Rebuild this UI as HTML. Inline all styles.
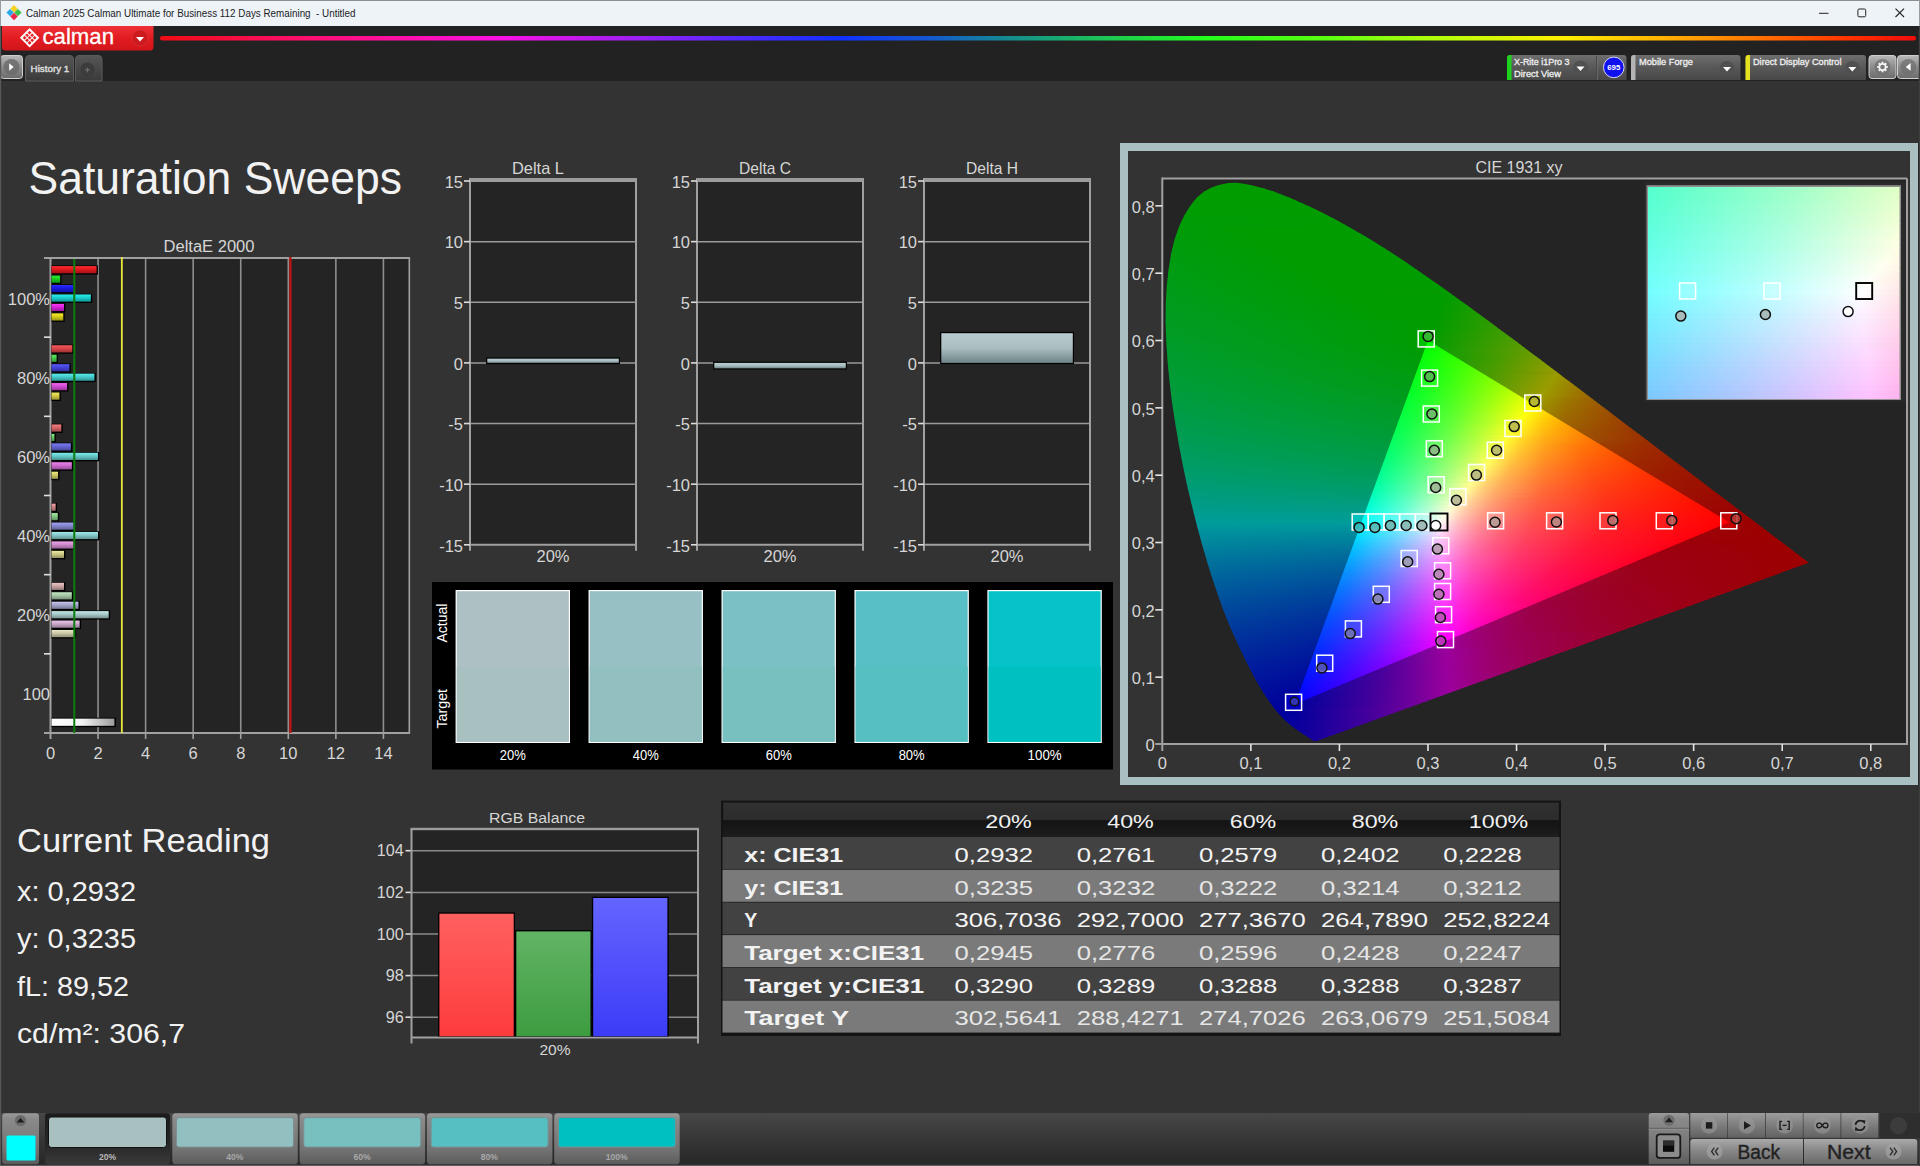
<!DOCTYPE html>
<html lang="en"><head><meta charset="utf-8"><title>Calman 2025 - Saturation Sweeps</title>
<style>html,body{margin:0;padding:0;background:#333;overflow:hidden}svg{display:block}text{font-family:"Liberation Sans",sans-serif}</style>
</head><body>
<svg width="1920" height="1166" viewBox="0 0 1920 1166">
<defs>
<linearGradient id="gred" x1="0" y1="0" x2="0" y2="1"><stop offset="0" stop-color="#ee3236"/><stop offset=".5" stop-color="#e21c21"/><stop offset="1" stop-color="#d2151a"/></linearGradient>
<linearGradient id="grb" gradientUnits="userSpaceOnUse" x1="160" x2="1916"><stop offset="0.000" stop-color="#f00c14"/><stop offset="0.099" stop-color="#ff1080"/><stop offset="0.194" stop-color="#fb10e4"/><stop offset="0.273" stop-color="#9a20f4"/><stop offset="0.325" stop-color="#5528ff"/><stop offset="0.387" stop-color="#1030ff"/><stop offset="0.438" stop-color="#1458d0"/><stop offset="0.482" stop-color="#148a92"/><stop offset="0.535" stop-color="#1cc458"/><stop offset="0.596" stop-color="#24ff1c"/><stop offset="0.666" stop-color="#5cff10"/><stop offset="0.714" stop-color="#a4ff0c"/><stop offset="0.799" stop-color="#fff000"/><stop offset="0.884" stop-color="#ff9200"/><stop offset="0.961" stop-color="#ff3400"/><stop offset="1.000" stop-color="#f00c0c"/></linearGradient>
<linearGradient id="gbtn" x1="0" y1="0" x2="0" y2="1"><stop offset="0" stop-color="#b9b9b9"/><stop offset=".5" stop-color="#8c8c8c"/><stop offset="1" stop-color="#6c6c6c"/></linearGradient>
<linearGradient id="gtab" x1="0" y1="0" x2="0" y2="1"><stop offset="0" stop-color="#565656"/><stop offset="1" stop-color="#3a3a3a"/></linearGradient>
<linearGradient id="gpan" x1="0" y1="0" x2="0" y2="1"><stop offset="0" stop-color="#6e6e6e"/><stop offset=".5" stop-color="#585858"/><stop offset="1" stop-color="#484848"/></linearGradient>
<linearGradient id="b100R" x1="0" y1="0" x2="0" y2="1"><stop offset="0" stop-color="#ff2d32"/><stop offset=".45" stop-color="#e1191e"/><stop offset="1" stop-color="#a21216"/></linearGradient>
<linearGradient id="b100G" x1="0" y1="0" x2="0" y2="1"><stop offset="0" stop-color="#2def32"/><stop offset=".45" stop-color="#19cd1e"/><stop offset="1" stop-color="#129416"/></linearGradient>
<linearGradient id="b100B" x1="0" y1="0" x2="0" y2="1"><stop offset="0" stop-color="#2d2dff"/><stop offset=".45" stop-color="#1919e1"/><stop offset="1" stop-color="#1212a2"/></linearGradient>
<linearGradient id="b100C" x1="0" y1="0" x2="0" y2="1"><stop offset="0" stop-color="#2defef"/><stop offset=".45" stop-color="#19cdcd"/><stop offset="1" stop-color="#129494"/></linearGradient>
<linearGradient id="b100M" x1="0" y1="0" x2="0" y2="1"><stop offset="0" stop-color="#fa38fa"/><stop offset=".45" stop-color="#d723d7"/><stop offset="1" stop-color="#9b199b"/></linearGradient>
<linearGradient id="b100Y" x1="0" y1="0" x2="0" y2="1"><stop offset="0" stop-color="#faef2d"/><stop offset=".45" stop-color="#d7cd19"/><stop offset="1" stop-color="#9b9412"/></linearGradient>
<linearGradient id="b80R" x1="0" y1="0" x2="0" y2="1"><stop offset="0" stop-color="#fc5b5f"/><stop offset=".45" stop-color="#d94448"/><stop offset="1" stop-color="#9c3133"/></linearGradient>
<linearGradient id="b80G" x1="0" y1="0" x2="0" y2="1"><stop offset="0" stop-color="#5bec5f"/><stop offset=".45" stop-color="#44ca48"/><stop offset="1" stop-color="#319133"/></linearGradient>
<linearGradient id="b80B" x1="0" y1="0" x2="0" y2="1"><stop offset="0" stop-color="#5b5bfc"/><stop offset=".45" stop-color="#4444d9"/><stop offset="1" stop-color="#31319c"/></linearGradient>
<linearGradient id="b80C" x1="0" y1="0" x2="0" y2="1"><stop offset="0" stop-color="#5becec"/><stop offset=".45" stop-color="#44caca"/><stop offset="1" stop-color="#319191"/></linearGradient>
<linearGradient id="b80M" x1="0" y1="0" x2="0" y2="1"><stop offset="0" stop-color="#f463f4"/><stop offset=".45" stop-color="#d14bd1"/><stop offset="1" stop-color="#973697"/></linearGradient>
<linearGradient id="b80Y" x1="0" y1="0" x2="0" y2="1"><stop offset="0" stop-color="#f4ec5b"/><stop offset=".45" stop-color="#d1ca44"/><stop offset="1" stop-color="#979131"/></linearGradient>
<linearGradient id="b60R" x1="0" y1="0" x2="0" y2="1"><stop offset="0" stop-color="#f77e81"/><stop offset=".45" stop-color="#d46467"/><stop offset="1" stop-color="#99484a"/></linearGradient>
<linearGradient id="b60G" x1="0" y1="0" x2="0" y2="1"><stop offset="0" stop-color="#7eeb81"/><stop offset=".45" stop-color="#64c967"/><stop offset="1" stop-color="#48914a"/></linearGradient>
<linearGradient id="b60B" x1="0" y1="0" x2="0" y2="1"><stop offset="0" stop-color="#7e7ef7"/><stop offset=".45" stop-color="#6464d4"/><stop offset="1" stop-color="#484899"/></linearGradient>
<linearGradient id="b60C" x1="0" y1="0" x2="0" y2="1"><stop offset="0" stop-color="#7eebeb"/><stop offset=".45" stop-color="#64c9c9"/><stop offset="1" stop-color="#489191"/></linearGradient>
<linearGradient id="b60M" x1="0" y1="0" x2="0" y2="1"><stop offset="0" stop-color="#f184f1"/><stop offset=".45" stop-color="#ce6ace"/><stop offset="1" stop-color="#954c95"/></linearGradient>
<linearGradient id="b60Y" x1="0" y1="0" x2="0" y2="1"><stop offset="0" stop-color="#f1eb7e"/><stop offset=".45" stop-color="#cec964"/><stop offset="1" stop-color="#959148"/></linearGradient>
<linearGradient id="b40R" x1="0" y1="0" x2="0" y2="1"><stop offset="0" stop-color="#f2a2a4"/><stop offset=".45" stop-color="#cf8587"/><stop offset="1" stop-color="#956061"/></linearGradient>
<linearGradient id="b40G" x1="0" y1="0" x2="0" y2="1"><stop offset="0" stop-color="#a2eaa4"/><stop offset=".45" stop-color="#85c887"/><stop offset="1" stop-color="#609061"/></linearGradient>
<linearGradient id="b40B" x1="0" y1="0" x2="0" y2="1"><stop offset="0" stop-color="#a2a2f2"/><stop offset=".45" stop-color="#8585cf"/><stop offset="1" stop-color="#606095"/></linearGradient>
<linearGradient id="b40C" x1="0" y1="0" x2="0" y2="1"><stop offset="0" stop-color="#a2eaea"/><stop offset=".45" stop-color="#85c8c8"/><stop offset="1" stop-color="#609090"/></linearGradient>
<linearGradient id="b40M" x1="0" y1="0" x2="0" y2="1"><stop offset="0" stop-color="#eea6ee"/><stop offset=".45" stop-color="#cc89cc"/><stop offset="1" stop-color="#936293"/></linearGradient>
<linearGradient id="b40Y" x1="0" y1="0" x2="0" y2="1"><stop offset="0" stop-color="#eeeaa2"/><stop offset=".45" stop-color="#ccc885"/><stop offset="1" stop-color="#939060"/></linearGradient>
<linearGradient id="b20R" x1="0" y1="0" x2="0" y2="1"><stop offset="0" stop-color="#edc5c6"/><stop offset=".45" stop-color="#cba5a6"/><stop offset="1" stop-color="#927778"/></linearGradient>
<linearGradient id="b20G" x1="0" y1="0" x2="0" y2="1"><stop offset="0" stop-color="#c5e9c6"/><stop offset=".45" stop-color="#a5c7a6"/><stop offset="1" stop-color="#778f78"/></linearGradient>
<linearGradient id="b20B" x1="0" y1="0" x2="0" y2="1"><stop offset="0" stop-color="#c5c5ed"/><stop offset=".45" stop-color="#a5a5cb"/><stop offset="1" stop-color="#777792"/></linearGradient>
<linearGradient id="b20C" x1="0" y1="0" x2="0" y2="1"><stop offset="0" stop-color="#c5e9e9"/><stop offset=".45" stop-color="#a5c7c7"/><stop offset="1" stop-color="#778f8f"/></linearGradient>
<linearGradient id="b20M" x1="0" y1="0" x2="0" y2="1"><stop offset="0" stop-color="#ebc7eb"/><stop offset=".45" stop-color="#c9a7c9"/><stop offset="1" stop-color="#917891"/></linearGradient>
<linearGradient id="b20Y" x1="0" y1="0" x2="0" y2="1"><stop offset="0" stop-color="#ebe9c5"/><stop offset=".45" stop-color="#c9c7a5"/><stop offset="1" stop-color="#918f77"/></linearGradient>
<linearGradient id="bw" x1="0" y1="0" x2="1" y2="0"><stop offset="0" stop-color="#ffffff"/><stop offset=".5" stop-color="#f2f2f2"/><stop offset="1" stop-color="#9c9c9c"/></linearGradient>
<linearGradient id="glch" x1="0" y1="0" x2="0" y2="1"><stop offset="0" stop-color="#b8cccf"/><stop offset=".5" stop-color="#aabec1"/><stop offset="1" stop-color="#6e8486"/></linearGradient>
<linearGradient id="o0" gradientUnits="userSpaceOnUse" x1="1216.0" x2="1253.5"><stop offset="0" stop-color="#009c00"/><stop offset="1" stop-color="#009c00"/></linearGradient>
<linearGradient id="o1" gradientUnits="userSpaceOnUse" x1="1207.7" x2="1265.6"><stop offset="0" stop-color="#009c00"/><stop offset="1" stop-color="#009c00"/></linearGradient>
<linearGradient id="o2" gradientUnits="userSpaceOnUse" x1="1202.2" x2="1275.5"><stop offset="0" stop-color="#009c00"/><stop offset="1" stop-color="#009c00"/></linearGradient>
<linearGradient id="o3" gradientUnits="userSpaceOnUse" x1="1198.2" x2="1283.5"><stop offset="0" stop-color="#009c00"/><stop offset="1" stop-color="#009c00"/></linearGradient>
<linearGradient id="o4" gradientUnits="userSpaceOnUse" x1="1194.7" x2="1290.9"><stop offset="0" stop-color="#009c00"/><stop offset="1" stop-color="#009c00"/></linearGradient>
<linearGradient id="o5" gradientUnits="userSpaceOnUse" x1="1191.9" x2="1297.9"><stop offset="0" stop-color="#009c00"/><stop offset="1" stop-color="#009c00"/></linearGradient>
<linearGradient id="o6" gradientUnits="userSpaceOnUse" x1="1189.5" x2="1304.8"><stop offset="0" stop-color="#009c01"/><stop offset="1" stop-color="#009c00"/></linearGradient>
<linearGradient id="o7" gradientUnits="userSpaceOnUse" x1="1187.1" x2="1311.5"><stop offset="0" stop-color="#009c02"/><stop offset="1" stop-color="#009c00"/></linearGradient>
<linearGradient id="o8" gradientUnits="userSpaceOnUse" x1="1185.3" x2="1317.8"><stop offset="0" stop-color="#009c03"/><stop offset="1" stop-color="#009c00"/></linearGradient>
<linearGradient id="o9" gradientUnits="userSpaceOnUse" x1="1183.4" x2="1323.9"><stop offset="0" stop-color="#009c03"/><stop offset="1" stop-color="#009c00"/></linearGradient>
<linearGradient id="o10" gradientUnits="userSpaceOnUse" x1="1181.6" x2="1329.8"><stop offset="0" stop-color="#009c04"/><stop offset="1" stop-color="#009c00"/></linearGradient>
<linearGradient id="o11" gradientUnits="userSpaceOnUse" x1="1180.1" x2="1335.7"><stop offset="0" stop-color="#009c05"/><stop offset="1" stop-color="#009c00"/></linearGradient>
<linearGradient id="o12" gradientUnits="userSpaceOnUse" x1="1178.7" x2="1341.3"><stop offset="0" stop-color="#009c06"/><stop offset="1" stop-color="#009c00"/></linearGradient>
<linearGradient id="o13" gradientUnits="userSpaceOnUse" x1="1177.3" x2="1346.8"><stop offset="0" stop-color="#009c07"/><stop offset="1" stop-color="#009c00"/></linearGradient>
<linearGradient id="o14" gradientUnits="userSpaceOnUse" x1="1175.9" x2="1352.1"><stop offset="0" stop-color="#009c08"/><stop offset="1" stop-color="#009c00"/></linearGradient>
<linearGradient id="o15" gradientUnits="userSpaceOnUse" x1="1174.9" x2="1357.3"><stop offset="0" stop-color="#009c08"/><stop offset=".374" stop-color="#009c00"/><stop offset="1" stop-color="#009c00"/></linearGradient>
<linearGradient id="o16" gradientUnits="userSpaceOnUse" x1="1173.8" x2="1362.5"><stop offset="0" stop-color="#009c09"/><stop offset=".394" stop-color="#009c00"/><stop offset="1" stop-color="#009c00"/></linearGradient>
<linearGradient id="o17" gradientUnits="userSpaceOnUse" x1="1172.8" x2="1367.6"><stop offset="0" stop-color="#009c0a"/><stop offset=".412" stop-color="#009c00"/><stop offset="1" stop-color="#009c00"/></linearGradient>
<linearGradient id="o18" gradientUnits="userSpaceOnUse" x1="1171.7" x2="1372.5"><stop offset="0" stop-color="#009c0b"/><stop offset=".430" stop-color="#009c00"/><stop offset="1" stop-color="#009c00"/></linearGradient>
<linearGradient id="o19" gradientUnits="userSpaceOnUse" x1="1171.0" x2="1377.5"><stop offset="0" stop-color="#009c0b"/><stop offset=".447" stop-color="#009c00"/><stop offset="1" stop-color="#009c00"/></linearGradient>
<linearGradient id="o20" gradientUnits="userSpaceOnUse" x1="1170.2" x2="1382.3"><stop offset="0" stop-color="#009c0c"/><stop offset=".462" stop-color="#009c00"/><stop offset="1" stop-color="#009c00"/></linearGradient>
<linearGradient id="o21" gradientUnits="userSpaceOnUse" x1="1169.5" x2="1387.0"><stop offset="0" stop-color="#009c0d"/><stop offset=".472" stop-color="#009c00"/><stop offset="1" stop-color="#009c00"/></linearGradient>
<linearGradient id="o22" gradientUnits="userSpaceOnUse" x1="1168.8" x2="1391.7"><stop offset="0" stop-color="#009c0e"/><stop offset=".486" stop-color="#009c00"/><stop offset="1" stop-color="#009c00"/></linearGradient>
<linearGradient id="o23" gradientUnits="userSpaceOnUse" x1="1168.1" x2="1396.3"><stop offset="0" stop-color="#009c0f"/><stop offset=".500" stop-color="#009c00"/><stop offset="1" stop-color="#009c00"/></linearGradient>
<linearGradient id="o24" gradientUnits="userSpaceOnUse" x1="1167.6" x2="1401.0"><stop offset="0" stop-color="#009c0f"/><stop offset=".509" stop-color="#009c00"/><stop offset="1" stop-color="#009c00"/></linearGradient>
<linearGradient id="o25" gradientUnits="userSpaceOnUse" x1="1167.1" x2="1405.5"><stop offset="0" stop-color="#009c10"/><stop offset=".521" stop-color="#009c00"/><stop offset="1" stop-color="#009c00"/></linearGradient>
<linearGradient id="o26" gradientUnits="userSpaceOnUse" x1="1166.6" x2="1410.0"><stop offset="0" stop-color="#009c11"/><stop offset=".537" stop-color="#009c00"/><stop offset="1" stop-color="#009c00"/></linearGradient>
<linearGradient id="o27" gradientUnits="userSpaceOnUse" x1="1166.1" x2="1414.4"><stop offset="0" stop-color="#009c12"/><stop offset=".548" stop-color="#009c00"/><stop offset="1" stop-color="#009c00"/></linearGradient>
<linearGradient id="o28" gradientUnits="userSpaceOnUse" x1="1165.6" x2="1418.8"><stop offset="0" stop-color="#009c13"/><stop offset=".556" stop-color="#009c00"/><stop offset="1" stop-color="#009c00"/></linearGradient>
<linearGradient id="o29" gradientUnits="userSpaceOnUse" x1="1165.3" x2="1423.2"><stop offset="0" stop-color="#009c13"/><stop offset=".570" stop-color="#009c00"/><stop offset="1" stop-color="#009c00"/></linearGradient>
<linearGradient id="o30" gradientUnits="userSpaceOnUse" x1="1164.9" x2="1427.5"><stop offset="0" stop-color="#009c14"/><stop offset=".580" stop-color="#009c00"/><stop offset="1" stop-color="#009c00"/></linearGradient>
<linearGradient id="o31" gradientUnits="userSpaceOnUse" x1="1164.6" x2="1431.9"><stop offset="0" stop-color="#009c15"/><stop offset=".586" stop-color="#009c00"/><stop offset="1" stop-color="#009c00"/></linearGradient>
<linearGradient id="o32" gradientUnits="userSpaceOnUse" x1="1164.3" x2="1436.1"><stop offset="0" stop-color="#009c16"/><stop offset=".600" stop-color="#009c00"/><stop offset="1" stop-color="#009c00"/></linearGradient>
<linearGradient id="o33" gradientUnits="userSpaceOnUse" x1="1164.0" x2="1440.4"><stop offset="0" stop-color="#009c17"/><stop offset=".609" stop-color="#009c00"/><stop offset="1" stop-color="#009c00"/></linearGradient>
<linearGradient id="o34" gradientUnits="userSpaceOnUse" x1="1163.7" x2="1444.7"><stop offset="0" stop-color="#009c18"/><stop offset=".614" stop-color="#009c00"/><stop offset="1" stop-color="#009c00"/></linearGradient>
<linearGradient id="o35" gradientUnits="userSpaceOnUse" x1="1163.5" x2="1448.9"><stop offset="0" stop-color="#009c18"/><stop offset=".627" stop-color="#009c00"/><stop offset="1" stop-color="#019c00"/></linearGradient>
<linearGradient id="o36" gradientUnits="userSpaceOnUse" x1="1163.4" x2="1453.1"><stop offset="0" stop-color="#009c19"/><stop offset=".632" stop-color="#009c00"/><stop offset="1" stop-color="#059c00"/></linearGradient>
<linearGradient id="o37" gradientUnits="userSpaceOnUse" x1="1163.2" x2="1457.3"><stop offset="0" stop-color="#009c1a"/><stop offset=".639" stop-color="#009c00"/><stop offset=".952" stop-color="#009c00"/><stop offset="1" stop-color="#099c00"/></linearGradient>
<linearGradient id="o38" gradientUnits="userSpaceOnUse" x1="1163.0" x2="1461.4"><stop offset="0" stop-color="#009c1b"/><stop offset=".651" stop-color="#009c00"/><stop offset=".940" stop-color="#009c00"/><stop offset="1" stop-color="#0d9c00"/></linearGradient>
<linearGradient id="o39" gradientUnits="userSpaceOnUse" x1="1162.8" x2="1465.6"><stop offset="0" stop-color="#009c1c"/><stop offset=".656" stop-color="#009c00"/><stop offset=".921" stop-color="#009c00"/><stop offset="1" stop-color="#119c00"/></linearGradient>
<linearGradient id="o40" gradientUnits="userSpaceOnUse" x1="1162.7" x2="1469.7"><stop offset="0" stop-color="#009c1d"/><stop offset=".667" stop-color="#009c00"/><stop offset=".908" stop-color="#009c00"/><stop offset="1" stop-color="#159c00"/></linearGradient>
<linearGradient id="o41" gradientUnits="userSpaceOnUse" x1="1162.7" x2="1473.9"><stop offset="0" stop-color="#009c1e"/><stop offset=".671" stop-color="#009c00"/><stop offset=".890" stop-color="#009c00"/><stop offset="1" stop-color="#199c00"/></linearGradient>
<linearGradient id="o42" gradientUnits="userSpaceOnUse" x1="1162.7" x2="1478.0"><stop offset="0" stop-color="#009c1f"/><stop offset=".675" stop-color="#009c00"/><stop offset=".873" stop-color="#009c00"/><stop offset="1" stop-color="#1d9c00"/></linearGradient>
<linearGradient id="o43" gradientUnits="userSpaceOnUse" x1="1162.7" x2="1482.1"><stop offset="0" stop-color="#009c20"/><stop offset=".686" stop-color="#009c00"/><stop offset=".862" stop-color="#009c00"/><stop offset="1" stop-color="#229c00"/></linearGradient>
<linearGradient id="o44" gradientUnits="userSpaceOnUse" x1="1162.6" x2="1486.2"><stop offset="0" stop-color="#009c21"/><stop offset=".689" stop-color="#009c00"/><stop offset=".845" stop-color="#009c00"/><stop offset="1" stop-color="#269c00"/></linearGradient>
<linearGradient id="o45" gradientUnits="userSpaceOnUse" x1="1162.6" x2="1490.3"><stop offset="0" stop-color="#009c22"/><stop offset=".699" stop-color="#009c00"/><stop offset=".834" stop-color="#009c00"/><stop offset="1" stop-color="#2b9c00"/></linearGradient>
<linearGradient id="o46" gradientUnits="userSpaceOnUse" x1="1162.6" x2="1494.3"><stop offset="0" stop-color="#009c22"/><stop offset=".818" stop-color="#009c00"/><stop offset="1" stop-color="#309c00"/></linearGradient>
<linearGradient id="o47" gradientUnits="userSpaceOnUse" x1="1162.6" x2="1498.4"><stop offset="0" stop-color="#009c23"/><stop offset=".808" stop-color="#009c00"/><stop offset="1" stop-color="#359c00"/></linearGradient>
<linearGradient id="o48" gradientUnits="userSpaceOnUse" x1="1162.7" x2="1502.4"><stop offset="0" stop-color="#009c24"/><stop offset=".793" stop-color="#009c00"/><stop offset="1" stop-color="#3a9c00"/></linearGradient>
<linearGradient id="o49" gradientUnits="userSpaceOnUse" x1="1162.8" x2="1506.5"><stop offset="0" stop-color="#009c25"/><stop offset=".784" stop-color="#009c00"/><stop offset="1" stop-color="#3f9c00"/></linearGradient>
<linearGradient id="o50" gradientUnits="userSpaceOnUse" x1="1162.9" x2="1510.5"><stop offset="0" stop-color="#009c26"/><stop offset=".769" stop-color="#009c00"/><stop offset="1" stop-color="#459c00"/></linearGradient>
<linearGradient id="o51" gradientUnits="userSpaceOnUse" x1="1163.0" x2="1514.5"><stop offset="0" stop-color="#009c27"/><stop offset=".754" stop-color="#009c00"/><stop offset="1" stop-color="#4a9c00"/></linearGradient>
<linearGradient id="o52" gradientUnits="userSpaceOnUse" x1="1163.1" x2="1518.5"><stop offset="0" stop-color="#009c28"/><stop offset=".746" stop-color="#009c00"/><stop offset="1" stop-color="#509c00"/></linearGradient>
<linearGradient id="o53" gradientUnits="userSpaceOnUse" x1="1163.2" x2="1522.5"><stop offset="0" stop-color="#009c2a"/><stop offset=".732" stop-color="#009c01"/><stop offset="1" stop-color="#569c00"/></linearGradient>
<linearGradient id="o54" gradientUnits="userSpaceOnUse" x1="1163.4" x2="1526.5"><stop offset="0" stop-color="#009c2b"/><stop offset=".724" stop-color="#009c02"/><stop offset="1" stop-color="#5c9c00"/></linearGradient>
<linearGradient id="o55" gradientUnits="userSpaceOnUse" x1="1163.6" x2="1530.6"><stop offset="0" stop-color="#009c2c"/><stop offset=".710" stop-color="#009c04"/><stop offset="1" stop-color="#639c00"/></linearGradient>
<linearGradient id="o56" gradientUnits="userSpaceOnUse" x1="1163.8" x2="1534.6"><stop offset="0" stop-color="#009c2d"/><stop offset=".703" stop-color="#009c05"/><stop offset="1" stop-color="#6a9c00"/></linearGradient>
<linearGradient id="o57" gradientUnits="userSpaceOnUse" x1="1164.0" x2="1538.6"><stop offset="0" stop-color="#009c2e"/><stop offset=".690" stop-color="#009c06"/><stop offset=".850" stop-color="#359c00"/><stop offset="1" stop-color="#719c00"/></linearGradient>
<linearGradient id="o58" gradientUnits="userSpaceOnUse" x1="1164.2" x2="1542.6"><stop offset="0" stop-color="#009c2f"/><stop offset=".683" stop-color="#019c07"/><stop offset=".847" stop-color="#399c00"/><stop offset="1" stop-color="#789c00"/></linearGradient>
<linearGradient id="o59" gradientUnits="userSpaceOnUse" x1="1164.4" x2="1546.6"><stop offset="0" stop-color="#009c30"/><stop offset=".670" stop-color="#009c09"/><stop offset=".843" stop-color="#3c9c00"/><stop offset="1" stop-color="#7f9c00"/></linearGradient>
<linearGradient id="o60" gradientUnits="userSpaceOnUse" x1="1164.7" x2="1550.6"><stop offset="0" stop-color="#009c31"/><stop offset=".661" stop-color="#009c0a"/><stop offset=".839" stop-color="#409c00"/><stop offset="1" stop-color="#879c00"/></linearGradient>
<linearGradient id="o61" gradientUnits="userSpaceOnUse" x1="1164.9" x2="1554.6"><stop offset="0" stop-color="#009c32"/><stop offset=".649" stop-color="#009c0c"/><stop offset=".830" stop-color="#429c00"/><stop offset="1" stop-color="#8f9c00"/></linearGradient>
<linearGradient id="o62" gradientUnits="userSpaceOnUse" x1="1165.2" x2="1558.6"><stop offset="0" stop-color="#009c34"/><stop offset=".643" stop-color="#019c0d"/><stop offset=".832" stop-color="#489c00"/><stop offset="1" stop-color="#989c00"/></linearGradient>
<linearGradient id="o63" gradientUnits="userSpaceOnUse" x1="1165.5" x2="1562.5"><stop offset="0" stop-color="#009c35"/><stop offset=".631" stop-color="#009c0f"/><stop offset=".793" stop-color="#3d9c00"/><stop offset="1" stop-color="#9c9700"/></linearGradient>
<linearGradient id="o64" gradientUnits="userSpaceOnUse" x1="1165.8" x2="1566.5"><stop offset="0" stop-color="#009c36"/><stop offset=".620" stop-color="#009c11"/><stop offset=".805" stop-color="#479c00"/><stop offset=".975" stop-color="#9b9c00"/><stop offset="1" stop-color="#9c8f00"/></linearGradient>
<linearGradient id="o65" gradientUnits="userSpaceOnUse" x1="1166.1" x2="1570.5"><stop offset="0" stop-color="#009c37"/><stop offset=".614" stop-color="#009c12"/><stop offset=".797" stop-color="#499c01"/><stop offset=".955" stop-color="#999c00"/><stop offset="1" stop-color="#9c8700"/></linearGradient>
<linearGradient id="o66" gradientUnits="userSpaceOnUse" x1="1166.4" x2="1574.5"><stop offset="0" stop-color="#009c38"/><stop offset=".603" stop-color="#009c14"/><stop offset=".779" stop-color="#479c03"/><stop offset=".941" stop-color="#9a9c00"/><stop offset="1" stop-color="#9c8000"/></linearGradient>
<linearGradient id="o67" gradientUnits="userSpaceOnUse" x1="1166.7" x2="1578.4"><stop offset="0" stop-color="#009c3a"/><stop offset=".595" stop-color="#009c15"/><stop offset=".771" stop-color="#489c05"/><stop offset=".927" stop-color="#9a9c00"/><stop offset="1" stop-color="#9c7900"/></linearGradient>
<linearGradient id="o68" gradientUnits="userSpaceOnUse" x1="1167.1" x2="1582.4"><stop offset="0" stop-color="#009c3b"/><stop offset=".585" stop-color="#009c17"/><stop offset=".754" stop-color="#469c07"/><stop offset=".913" stop-color="#9a9c00"/><stop offset="1" stop-color="#9c7300"/></linearGradient>
<linearGradient id="o69" gradientUnits="userSpaceOnUse" x1="1167.4" x2="1586.4"><stop offset="0" stop-color="#009c3c"/><stop offset=".579" stop-color="#009c19"/><stop offset=".746" stop-color="#489c08"/><stop offset=".900" stop-color="#9b9c00"/><stop offset="1" stop-color="#9c6d00"/></linearGradient>
<linearGradient id="o70" gradientUnits="userSpaceOnUse" x1="1167.8" x2="1590.3"><stop offset="0" stop-color="#009c3e"/><stop offset=".569" stop-color="#009c1a"/><stop offset=".735" stop-color="#489c0a"/><stop offset=".886" stop-color="#9c9c00"/><stop offset="1" stop-color="#9c6700"/></linearGradient>
<linearGradient id="o71" gradientUnits="userSpaceOnUse" x1="1168.2" x2="1594.3"><stop offset="0" stop-color="#009c3f"/><stop offset=".563" stop-color="#019c1c"/><stop offset=".723" stop-color="#479c0c"/><stop offset=".873" stop-color="#9c9b00"/><stop offset="1" stop-color="#9c6200"/></linearGradient>
<linearGradient id="o72" gradientUnits="userSpaceOnUse" x1="1168.5" x2="1598.2"><stop offset="0" stop-color="#009c40"/><stop offset=".551" stop-color="#009c1e"/><stop offset=".710" stop-color="#479c0f"/><stop offset=".860" stop-color="#9c9b00"/><stop offset=".925" stop-color="#9c7800"/><stop offset="1" stop-color="#9c5d00"/></linearGradient>
<linearGradient id="o73" gradientUnits="userSpaceOnUse" x1="1168.9" x2="1602.2"><stop offset="0" stop-color="#009c42"/><stop offset=".546" stop-color="#009c20"/><stop offset=".699" stop-color="#469c11"/><stop offset=".847" stop-color="#9c9a00"/><stop offset=".917" stop-color="#9c7500"/><stop offset="1" stop-color="#9c5800"/></linearGradient>
<linearGradient id="o74" gradientUnits="userSpaceOnUse" x1="1169.3" x2="1606.2"><stop offset="0" stop-color="#009c43"/><stop offset=".537" stop-color="#009c22"/><stop offset=".693" stop-color="#499c12"/><stop offset=".830" stop-color="#9a9c01"/><stop offset=".908" stop-color="#9c7300"/><stop offset="1" stop-color="#9c5400"/></linearGradient>
<linearGradient id="o75" gradientUnits="userSpaceOnUse" x1="1169.8" x2="1610.1"><stop offset="0" stop-color="#009c45"/><stop offset=".527" stop-color="#009c24"/><stop offset=".677" stop-color="#469c15"/><stop offset=".818" stop-color="#9b9c03"/><stop offset=".900" stop-color="#9c7000"/><stop offset="1" stop-color="#9c4f00"/></linearGradient>
<linearGradient id="o76" gradientUnits="userSpaceOnUse" x1="1170.2" x2="1614.1"><stop offset="0" stop-color="#009c46"/><stop offset=".520" stop-color="#009c26"/><stop offset=".670" stop-color="#489c17"/><stop offset=".805" stop-color="#9b9c06"/><stop offset=".891" stop-color="#9c6e00"/><stop offset="1" stop-color="#9c4b00"/></linearGradient>
<linearGradient id="o77" gradientUnits="userSpaceOnUse" x1="1170.7" x2="1618.0"><stop offset="0" stop-color="#009c48"/><stop offset=".516" stop-color="#009c27"/><stop offset=".664" stop-color="#4a9c19"/><stop offset=".794" stop-color="#9c9b08"/><stop offset=".883" stop-color="#9c6b00"/><stop offset="1" stop-color="#9c4700"/></linearGradient>
<linearGradient id="o78" gradientUnits="userSpaceOnUse" x1="1171.1" x2="1622.0"><stop offset="0" stop-color="#009c49"/><stop offset=".507" stop-color="#009c29"/><stop offset=".649" stop-color="#479c1b"/><stop offset=".782" stop-color="#9c9b0b"/><stop offset=".876" stop-color="#9c6900"/><stop offset="1" stop-color="#9c4400"/></linearGradient>
<linearGradient id="o79" gradientUnits="userSpaceOnUse" x1="1171.6" x2="1625.9"><stop offset="0" stop-color="#009c4b"/><stop offset=".498" stop-color="#009c2c"/><stop offset=".634" stop-color="#459c1e"/><stop offset=".771" stop-color="#9c9a0d"/><stop offset=".868" stop-color="#9c6600"/><stop offset="1" stop-color="#9c4000"/></linearGradient>
<linearGradient id="o80" gradientUnits="userSpaceOnUse" x1="1172.0" x2="1629.9"><stop offset="0" stop-color="#009c4c"/><stop offset=".491" stop-color="#009c2e"/><stop offset=".623" stop-color="#439c21"/><stop offset=".759" stop-color="#9c9a10"/><stop offset=".860" stop-color="#9c6400"/><stop offset="1" stop-color="#9c3d00"/></linearGradient>
<linearGradient id="o81" gradientUnits="userSpaceOnUse" x1="1172.5" x2="1633.8"><stop offset="0" stop-color="#009c4e"/><stop offset=".487" stop-color="#019c30"/><stop offset=".622" stop-color="#489c22"/><stop offset=".743" stop-color="#9b9c13"/><stop offset=".852" stop-color="#9c6201"/><stop offset="1" stop-color="#9c3900"/></linearGradient>
<linearGradient id="o82" gradientUnits="userSpaceOnUse" x1="1173.0" x2="1637.8"><stop offset="0" stop-color="#009c50"/><stop offset=".478" stop-color="#009c32"/><stop offset=".612" stop-color="#489c25"/><stop offset=".733" stop-color="#9c9c16"/><stop offset=".784" stop-color="#9c7a0b"/><stop offset=".845" stop-color="#9c5f02"/><stop offset="1" stop-color="#9c3600"/></linearGradient>
<linearGradient id="o83" gradientUnits="userSpaceOnUse" x1="1173.5" x2="1641.8"><stop offset="0" stop-color="#009c51"/><stop offset=".470" stop-color="#009c34"/><stop offset=".598" stop-color="#469c28"/><stop offset=".718" stop-color="#999c19"/><stop offset=".778" stop-color="#9c770c"/><stop offset=".838" stop-color="#9c5d04"/><stop offset="1" stop-color="#9c3300"/></linearGradient>
<linearGradient id="o84" gradientUnits="userSpaceOnUse" x1="1174.1" x2="1645.7"><stop offset="0" stop-color="#009c53"/><stop offset=".464" stop-color="#009c37"/><stop offset=".591" stop-color="#479c2a"/><stop offset=".706" stop-color="#999c1c"/><stop offset=".766" stop-color="#9c770f"/><stop offset=".830" stop-color="#9c5b05"/><stop offset="1" stop-color="#9c3000"/></linearGradient>
<linearGradient id="o85" gradientUnits="userSpaceOnUse" x1="1174.6" x2="1649.7"><stop offset="0" stop-color="#009c55"/><stop offset=".456" stop-color="#009c39"/><stop offset=".578" stop-color="#449c2d"/><stop offset=".696" stop-color="#9a9c1f"/><stop offset=".755" stop-color="#9c7611"/><stop offset=".819" stop-color="#9c5a07"/><stop offset="1" stop-color="#9c2e00"/></linearGradient>
<linearGradient id="o86" gradientUnits="userSpaceOnUse" x1="1175.1" x2="1653.7"><stop offset="0" stop-color="#009c57"/><stop offset=".452" stop-color="#009c3b"/><stop offset=".577" stop-color="#4a9c2f"/><stop offset=".686" stop-color="#9b9c22"/><stop offset=".745" stop-color="#9c7513"/><stop offset=".812" stop-color="#9c5708"/><stop offset="1" stop-color="#9c2b00"/></linearGradient>
<linearGradient id="o87" gradientUnits="userSpaceOnUse" x1="1175.6" x2="1657.6"><stop offset="0" stop-color="#009c59"/><stop offset=".444" stop-color="#009c3e"/><stop offset=".564" stop-color="#479c32"/><stop offset=".676" stop-color="#9b9c25"/><stop offset=".734" stop-color="#9c7415"/><stop offset=".805" stop-color="#9c5509"/><stop offset=".880" stop-color="#9c3f00"/><stop offset="1" stop-color="#9c2800"/></linearGradient>
<linearGradient id="o88" gradientUnits="userSpaceOnUse" x1="1176.1" x2="1661.6"><stop offset="0" stop-color="#009c5a"/><stop offset=".438" stop-color="#009c40"/><stop offset=".558" stop-color="#499c35"/><stop offset=".665" stop-color="#9b9c28"/><stop offset=".723" stop-color="#9c7417"/><stop offset=".798" stop-color="#9c530a"/><stop offset=".884" stop-color="#9c3b00"/><stop offset="1" stop-color="#9c2600"/></linearGradient>
<linearGradient id="o89" gradientUnits="userSpaceOnUse" x1="1176.7" x2="1665.6"><stop offset="0" stop-color="#009c5c"/><stop offset=".430" stop-color="#009c43"/><stop offset=".545" stop-color="#469c38"/><stop offset=".652" stop-color="#999c2c"/><stop offset=".717" stop-color="#9c7019"/><stop offset=".791" stop-color="#9c510b"/><stop offset=".885" stop-color="#9c3700"/><stop offset="1" stop-color="#9c2400"/></linearGradient>
<linearGradient id="o90" gradientUnits="userSpaceOnUse" x1="1177.3" x2="1669.6"><stop offset="0" stop-color="#009c5e"/><stop offset=".427" stop-color="#019c45"/><stop offset=".541" stop-color="#499c3b"/><stop offset=".642" stop-color="#9a9c2f"/><stop offset=".707" stop-color="#9c6f1b"/><stop offset=".780" stop-color="#9c500d"/><stop offset=".890" stop-color="#9c3300"/><stop offset="1" stop-color="#9c2100"/></linearGradient>
<linearGradient id="o91" gradientUnits="userSpaceOnUse" x1="1177.9" x2="1673.5"><stop offset="0" stop-color="#009c60"/><stop offset=".417" stop-color="#009c48"/><stop offset=".526" stop-color="#449c3e"/><stop offset=".632" stop-color="#999c32"/><stop offset=".696" stop-color="#9c6f1d"/><stop offset=".773" stop-color="#9c4e0e"/><stop offset=".891" stop-color="#9c3000"/><stop offset="1" stop-color="#9c1f00"/></linearGradient>
<linearGradient id="o92" gradientUnits="userSpaceOnUse" x1="1178.5" x2="1677.5"><stop offset="0" stop-color="#009c62"/><stop offset=".414" stop-color="#009c4b"/><stop offset=".526" stop-color="#4a9c41"/><stop offset=".622" stop-color="#9a9c36"/><stop offset=".687" stop-color="#9c6e20"/><stop offset=".767" stop-color="#9c4c0f"/><stop offset=".896" stop-color="#9c2c00"/><stop offset="1" stop-color="#9c1d00"/></linearGradient>
<linearGradient id="o93" gradientUnits="userSpaceOnUse" x1="1179.0" x2="1681.4"><stop offset="0" stop-color="#009c64"/><stop offset=".406" stop-color="#009c4e"/><stop offset=".514" stop-color="#479c44"/><stop offset=".614" stop-color="#9b9c39"/><stop offset=".677" stop-color="#9c6d22"/><stop offset=".757" stop-color="#9c4b11"/><stop offset=".896" stop-color="#9c2900"/><stop offset="1" stop-color="#9c1b00"/></linearGradient>
<linearGradient id="o94" gradientUnits="userSpaceOnUse" x1="1179.6" x2="1685.4"><stop offset="0" stop-color="#009c66"/><stop offset=".401" stop-color="#009c51"/><stop offset=".508" stop-color="#499c47"/><stop offset=".603" stop-color="#9b9c3d"/><stop offset=".667" stop-color="#9c6d25"/><stop offset=".750" stop-color="#9c4912"/><stop offset=".901" stop-color="#9c2600"/><stop offset="1" stop-color="#9c1900"/></linearGradient>
<linearGradient id="o95" gradientUnits="userSpaceOnUse" x1="1180.2" x2="1689.3"><stop offset="0" stop-color="#009c69"/><stop offset=".394" stop-color="#009c54"/><stop offset=".496" stop-color="#469c4b"/><stop offset=".591" stop-color="#989c41"/><stop offset=".661" stop-color="#9c6a26"/><stop offset=".744" stop-color="#9c4713"/><stop offset=".902" stop-color="#9c2400"/><stop offset="1" stop-color="#9c1700"/></linearGradient>
<linearGradient id="o96" gradientUnits="userSpaceOnUse" x1="1180.8" x2="1693.3"><stop offset="0" stop-color="#009c6b"/><stop offset=".387" stop-color="#009c57"/><stop offset=".488" stop-color="#469c4f"/><stop offset=".582" stop-color="#999c45"/><stop offset=".652" stop-color="#9c6828"/><stop offset=".734" stop-color="#9c4615"/><stop offset=".902" stop-color="#9c2100"/><stop offset="1" stop-color="#9c1500"/></linearGradient>
<linearGradient id="o97" gradientUnits="userSpaceOnUse" x1="1181.5" x2="1697.2"><stop offset="0" stop-color="#009c6d"/><stop offset=".381" stop-color="#009c5a"/><stop offset=".479" stop-color="#449c52"/><stop offset=".572" stop-color="#999c49"/><stop offset=".642" stop-color="#9c682b"/><stop offset=".728" stop-color="#9c4416"/><stop offset=".907" stop-color="#9c1e00"/><stop offset="1" stop-color="#9c1300"/></linearGradient>
<linearGradient id="o98" gradientUnits="userSpaceOnUse" x1="1182.1" x2="1701.2"><stop offset="0" stop-color="#009c6f"/><stop offset=".378" stop-color="#019c5d"/><stop offset=".475" stop-color="#489c56"/><stop offset=".564" stop-color="#9a9c4d"/><stop offset=".633" stop-color="#9c672d"/><stop offset=".718" stop-color="#9c4318"/><stop offset=".892" stop-color="#9c1e02"/><stop offset="1" stop-color="#9c1200"/></linearGradient>
<linearGradient id="o99" gradientUnits="userSpaceOnUse" x1="1182.8" x2="1705.1"><stop offset="0" stop-color="#009c72"/><stop offset=".372" stop-color="#009c60"/><stop offset=".467" stop-color="#489c59"/><stop offset=".556" stop-color="#9b9c51"/><stop offset=".621" stop-color="#9c6831"/><stop offset=".713" stop-color="#9c4119"/><stop offset=".885" stop-color="#9c1d02"/><stop offset="1" stop-color="#9c1000"/></linearGradient>
<linearGradient id="o100" gradientUnits="userSpaceOnUse" x1="1183.4" x2="1709.1"><stop offset="0" stop-color="#009c74"/><stop offset=".366" stop-color="#009c64"/><stop offset=".462" stop-color="#499c5d"/><stop offset=".546" stop-color="#9b9c55"/><stop offset=".615" stop-color="#9c6532"/><stop offset=".706" stop-color="#9c3f1a"/><stop offset=".878" stop-color="#9c1c03"/><stop offset="1" stop-color="#9c0e00"/></linearGradient>
<linearGradient id="o101" gradientUnits="userSpaceOnUse" x1="1184.1" x2="1713.0"><stop offset="0" stop-color="#009c77"/><stop offset=".360" stop-color="#009c67"/><stop offset=".451" stop-color="#469c61"/><stop offset=".534" stop-color="#989c5a"/><stop offset=".606" stop-color="#9c6435"/><stop offset=".697" stop-color="#9c3e1b"/><stop offset=".826" stop-color="#9c2108"/><stop offset="1" stop-color="#9c0d00"/></linearGradient>
<linearGradient id="o102" gradientUnits="userSpaceOnUse" x1="1184.7" x2="1717.0"><stop offset="0" stop-color="#009c79"/><stop offset=".353" stop-color="#009c6b"/><stop offset=".444" stop-color="#469c65"/><stop offset=".526" stop-color="#999c5e"/><stop offset=".598" stop-color="#9c6337"/><stop offset=".692" stop-color="#9c3c1c"/><stop offset=".861" stop-color="#9c1a05"/><stop offset="1" stop-color="#9c0b00"/></linearGradient>
<linearGradient id="o103" gradientUnits="userSpaceOnUse" x1="1185.4" x2="1721.0"><stop offset="0" stop-color="#009c7c"/><stop offset=".348" stop-color="#009c6f"/><stop offset=".434" stop-color="#459c69"/><stop offset=".517" stop-color="#999c63"/><stop offset=".588" stop-color="#9c633a"/><stop offset=".682" stop-color="#9c3b1e"/><stop offset=".813" stop-color="#9c1e0a"/><stop offset="1" stop-color="#9c0a00"/></linearGradient>
<linearGradient id="o104" gradientUnits="userSpaceOnUse" x1="1186.1" x2="1724.9"><stop offset="0" stop-color="#009c7f"/><stop offset=".342" stop-color="#009c73"/><stop offset=".424" stop-color="#429c6e"/><stop offset=".513" stop-color="#9c9865"/><stop offset=".580" stop-color="#9c613d"/><stop offset=".677" stop-color="#9c391f"/><stop offset=".844" stop-color="#9c1807"/><stop offset="1" stop-color="#9c0800"/></linearGradient>
<linearGradient id="o105" gradientUnits="userSpaceOnUse" x1="1186.9" x2="1728.9"><stop offset="0" stop-color="#009c81"/><stop offset=".339" stop-color="#019c76"/><stop offset=".424" stop-color="#499c72"/><stop offset=".502" stop-color="#9c9b6c"/><stop offset=".535" stop-color="#9c7a53"/><stop offset=".572" stop-color="#9c603f"/><stop offset=".668" stop-color="#9c3821"/><stop offset=".838" stop-color="#9c1708"/><stop offset="1" stop-color="#9c0700"/></linearGradient>
<linearGradient id="o106" gradientUnits="userSpaceOnUse" x1="1187.6" x2="1732.9"><stop offset="0" stop-color="#009c84"/><stop offset=".331" stop-color="#009c7b"/><stop offset=".412" stop-color="#439c77"/><stop offset=".493" stop-color="#9b9c72"/><stop offset=".526" stop-color="#9c7a57"/><stop offset=".562" stop-color="#9c6043"/><stop offset=".658" stop-color="#9c3723"/><stop offset=".827" stop-color="#9c1609"/><stop offset="1" stop-color="#9c0500"/></linearGradient>
<linearGradient id="o107" gradientUnits="userSpaceOnUse" x1="1188.3" x2="1736.8"><stop offset="0" stop-color="#009c87"/><stop offset=".328" stop-color="#019c7f"/><stop offset=".409" stop-color="#479c7b"/><stop offset=".485" stop-color="#9c9a76"/><stop offset=".518" stop-color="#9c785b"/><stop offset=".555" stop-color="#9c5e45"/><stop offset=".653" stop-color="#9c3524"/><stop offset=".821" stop-color="#9c1509"/><stop offset="1" stop-color="#9c0400"/></linearGradient>
<linearGradient id="o108" gradientUnits="userSpaceOnUse" x1="1189.0" x2="1740.8"><stop offset="0" stop-color="#009c8a"/><stop offset=".324" stop-color="#019c83"/><stop offset=".404" stop-color="#499c80"/><stop offset=".476" stop-color="#9c9b7c"/><stop offset=".509" stop-color="#9c785f"/><stop offset=".545" stop-color="#9c5e49"/><stop offset=".644" stop-color="#9c3426"/><stop offset=".815" stop-color="#9c140a"/><stop offset="1" stop-color="#9c0300"/></linearGradient>
<linearGradient id="o109" gradientUnits="userSpaceOnUse" x1="1189.7" x2="1744.8"><stop offset="0" stop-color="#009c8d"/><stop offset=".318" stop-color="#009c87"/><stop offset=".394" stop-color="#469c85"/><stop offset=".469" stop-color="#9c9980"/><stop offset=".502" stop-color="#9c7762"/><stop offset=".538" stop-color="#9c5c4b"/><stop offset=".639" stop-color="#9c3227"/><stop offset=".809" stop-color="#9c120b"/><stop offset="1" stop-color="#9c0100"/></linearGradient>
<linearGradient id="o110" gradientUnits="userSpaceOnUse" x1="1190.5" x2="1748.8"><stop offset="0" stop-color="#009c90"/><stop offset=".312" stop-color="#009c8c"/><stop offset=".391" stop-color="#4a9c8a"/><stop offset=".459" stop-color="#9b9c88"/><stop offset=".491" stop-color="#9c7868"/><stop offset=".530" stop-color="#9c5b4e"/><stop offset=".631" stop-color="#9c3128"/><stop offset=".803" stop-color="#9c110c"/><stop offset="1" stop-color="#9c0000"/></linearGradient>
<linearGradient id="o111" gradientUnits="userSpaceOnUse" x1="1191.3" x2="1752.8"><stop offset="0" stop-color="#009c94"/><stop offset=".307" stop-color="#009c91"/><stop offset=".379" stop-color="#449c8f"/><stop offset=".454" stop-color="#9c988a"/><stop offset=".486" stop-color="#9c756a"/><stop offset=".525" stop-color="#9c584f"/><stop offset=".629" stop-color="#9c2e28"/><stop offset=".800" stop-color="#9c100c"/><stop offset="1" stop-color="#9c0000"/></linearGradient>
<linearGradient id="o112" gradientUnits="userSpaceOnUse" x1="1192.0" x2="1756.8"><stop offset="0" stop-color="#009c97"/><stop offset=".301" stop-color="#009c95"/><stop offset=".372" stop-color="#459c95"/><stop offset=".443" stop-color="#9c9b93"/><stop offset=".475" stop-color="#9c7670"/><stop offset=".514" stop-color="#9c5954"/><stop offset=".617" stop-color="#9c2e2b"/><stop offset=".791" stop-color="#9c0f0d"/><stop offset="1" stop-color="#9c0000"/></linearGradient>
<linearGradient id="o113" gradientUnits="userSpaceOnUse" x1="1192.8" x2="1760.7"><stop offset="0" stop-color="#009c9a"/><stop offset=".297" stop-color="#009c9a"/><stop offset=".371" stop-color="#4a9c9a"/><stop offset=".435" stop-color="#9c9c9a"/><stop offset=".466" stop-color="#9c7676"/><stop offset=".505" stop-color="#9c5858"/><stop offset=".611" stop-color="#9c2c2c"/><stop offset=".784" stop-color="#9c0e0e"/><stop offset="1" stop-color="#9c0000"/></linearGradient>
<linearGradient id="o114" gradientUnits="userSpaceOnUse" x1="1193.6" x2="1764.6"><stop offset="0" stop-color="#00999c"/><stop offset=".291" stop-color="#00989c"/><stop offset=".361" stop-color="#45979c"/><stop offset=".432" stop-color="#9c959a"/><stop offset=".463" stop-color="#9c7176"/><stop offset=".502" stop-color="#9c5558"/><stop offset=".611" stop-color="#9c292c"/><stop offset=".793" stop-color="#9c0b0d"/><stop offset="1" stop-color="#9c0000"/></linearGradient>
<linearGradient id="o115" gradientUnits="userSpaceOnUse" x1="1194.4" x2="1768.6"><stop offset="0" stop-color="#00969c"/><stop offset=".286" stop-color="#00939c"/><stop offset=".355" stop-color="#43919c"/><stop offset=".429" stop-color="#9c8e99"/><stop offset=".460" stop-color="#9c6d76"/><stop offset=".498" stop-color="#9c5159"/><stop offset=".606" stop-color="#9c272d"/><stop offset=".798" stop-color="#9c090c"/><stop offset="1" stop-color="#9c0000"/></linearGradient>
<linearGradient id="o116" gradientUnits="userSpaceOnUse" x1="1195.2" x2="1772.5"><stop offset="0" stop-color="#00929c"/><stop offset=".281" stop-color="#008e9c"/><stop offset=".354" stop-color="#468c9c"/><stop offset=".424" stop-color="#9c8a9c"/><stop offset=".455" stop-color="#9c6978"/><stop offset=".497" stop-color="#9c4d58"/><stop offset=".604" stop-color="#9c252d"/><stop offset=".806" stop-color="#9c070c"/><stop offset="1" stop-color="#9c0000"/></linearGradient>
<linearGradient id="o117" gradientUnits="userSpaceOnUse" x1="1196.0" x2="1776.5"><stop offset="0" stop-color="#008f9c"/><stop offset=".276" stop-color="#00899c"/><stop offset=".348" stop-color="#44879c"/><stop offset=".421" stop-color="#9c839b"/><stop offset=".452" stop-color="#9c6578"/><stop offset=".493" stop-color="#9c4959"/><stop offset=".603" stop-color="#9c222d"/><stop offset=".814" stop-color="#9c040b"/><stop offset="1" stop-color="#9c0000"/></linearGradient>
<linearGradient id="o118" gradientUnits="userSpaceOnUse" x1="1196.8" x2="1780.5"><stop offset="0" stop-color="#008c9c"/><stop offset=".271" stop-color="#00859c"/><stop offset=".340" stop-color="#40829c"/><stop offset=".419" stop-color="#9c7c98"/><stop offset=".450" stop-color="#9c5f77"/><stop offset=".491" stop-color="#9c4558"/><stop offset=".601" stop-color="#9c202d"/><stop offset=".825" stop-color="#9c020a"/><stop offset="1" stop-color="#9c0000"/></linearGradient>
<linearGradient id="o119" gradientUnits="userSpaceOnUse" x1="1197.6" x2="1784.4"><stop offset="0" stop-color="#00889c"/><stop offset=".266" stop-color="#00819c"/><stop offset=".334" stop-color="#3e7d9c"/><stop offset=".416" stop-color="#9c7698"/><stop offset=".451" stop-color="#9c5874"/><stop offset=".491" stop-color="#9c4057"/><stop offset=".601" stop-color="#9c1d2d"/><stop offset=".829" stop-color="#9c0009"/><stop offset="1" stop-color="#9c0000"/></linearGradient>
<linearGradient id="o120" gradientUnits="userSpaceOnUse" x1="1198.4" x2="1788.4"><stop offset="0" stop-color="#00859c"/><stop offset=".262" stop-color="#007c9c"/><stop offset=".337" stop-color="#44789c"/><stop offset=".412" stop-color="#9c729a"/><stop offset=".446" stop-color="#9c5575"/><stop offset=".486" stop-color="#9c3e58"/><stop offset=".595" stop-color="#9c1c2e"/><stop offset=".813" stop-color="#9c000b"/><stop offset="1" stop-color="#9c0000"/></linearGradient>
<linearGradient id="o121" gradientUnits="userSpaceOnUse" x1="1199.3" x2="1792.4"><stop offset="0" stop-color="#00829c"/><stop offset=".260" stop-color="#01789c"/><stop offset=".334" stop-color="#46749c"/><stop offset=".409" stop-color="#9c6d99"/><stop offset=".443" stop-color="#9c5175"/><stop offset=".483" stop-color="#9c3b59"/><stop offset=".595" stop-color="#9c192d"/><stop offset=".794" stop-color="#9c000d"/><stop offset="1" stop-color="#9c0000"/></linearGradient>
<linearGradient id="o122" gradientUnits="userSpaceOnUse" x1="1200.1" x2="1796.3"><stop offset="0" stop-color="#007f9c"/><stop offset=".255" stop-color="#01749c"/><stop offset=".329" stop-color="#446f9c"/><stop offset=".406" stop-color="#9c6799"/><stop offset=".440" stop-color="#9c4d76"/><stop offset=".480" stop-color="#9c3859"/><stop offset=".594" stop-color="#9c172d"/><stop offset=".779" stop-color="#9c000f"/><stop offset="1" stop-color="#9c0000"/></linearGradient>
<linearGradient id="o123" gradientUnits="userSpaceOnUse" x1="1201.0" x2="1800.2"><stop offset="0" stop-color="#007c9c"/><stop offset=".251" stop-color="#01709c"/><stop offset=".328" stop-color="#476b9c"/><stop offset=".401" stop-color="#9c649b"/><stop offset=".435" stop-color="#9c4a77"/><stop offset=".475" stop-color="#9c355b"/><stop offset=".589" stop-color="#9c152e"/><stop offset=".759" stop-color="#9c0011"/><stop offset="1" stop-color="#9c0000"/></linearGradient>
<linearGradient id="o124" gradientUnits="userSpaceOnUse" x1="1201.9" x2="1804.2"><stop offset="0" stop-color="#00799c"/><stop offset=".246" stop-color="#016c9c"/><stop offset=".322" stop-color="#46679c"/><stop offset=".399" stop-color="#9c5e9a"/><stop offset=".432" stop-color="#9c4677"/><stop offset=".475" stop-color="#9c3159"/><stop offset=".588" stop-color="#9c132e"/><stop offset=".744" stop-color="#9c0013"/><stop offset="1" stop-color="#9c0000"/></linearGradient>
<linearGradient id="o125" gradientUnits="userSpaceOnUse" x1="1202.8" x2="1808.2"><stop offset="0" stop-color="#00769c"/><stop offset=".242" stop-color="#01699c"/><stop offset=".321" stop-color="#48629c"/><stop offset=".394" stop-color="#9b5b9c"/><stop offset=".427" stop-color="#9c4379"/><stop offset=".470" stop-color="#9c2f5a"/><stop offset=".583" stop-color="#9c122f"/><stop offset=".728" stop-color="#9c0014"/><stop offset="1" stop-color="#9c0000"/></linearGradient>
<linearGradient id="o126" gradientUnits="userSpaceOnUse" x1="1203.6" x2="1811.8"><stop offset="0" stop-color="#00739c"/><stop offset=".237" stop-color="#01659c"/><stop offset=".319" stop-color="#4a5e9c"/><stop offset=".391" stop-color="#9c569b"/><stop offset=".424" stop-color="#9c4079"/><stop offset=".467" stop-color="#9c2c5b"/><stop offset=".582" stop-color="#9c102f"/><stop offset=".711" stop-color="#9c0017"/><stop offset="1" stop-color="#9c0000"/></linearGradient>
<linearGradient id="o127" gradientUnits="userSpaceOnUse" x1="1204.5" x2="1811.0"><stop offset="0" stop-color="#00709c"/><stop offset=".234" stop-color="#01629c"/><stop offset=".314" stop-color="#465b9c"/><stop offset=".393" stop-color="#9c519a"/><stop offset=".426" stop-color="#9c3c78"/><stop offset=".469" stop-color="#9c295b"/><stop offset=".584" stop-color="#9c0e2f"/><stop offset=".700" stop-color="#9c0019"/><stop offset="1" stop-color="#9c0000"/></linearGradient>
<linearGradient id="o128" gradientUnits="userSpaceOnUse" x1="1205.5" x2="1802.7"><stop offset="0" stop-color="#006d9c"/><stop offset=".235" stop-color="#015e9c"/><stop offset=".319" stop-color="#48579c"/><stop offset=".396" stop-color="#9b4e9c"/><stop offset=".430" stop-color="#9c397a"/><stop offset=".473" stop-color="#9c275c"/><stop offset=".587" stop-color="#9c0d31"/><stop offset=".698" stop-color="#9c001b"/><stop offset="1" stop-color="#9c0000"/></linearGradient>
<linearGradient id="o129" gradientUnits="userSpaceOnUse" x1="1206.4" x2="1794.4"><stop offset="0" stop-color="#006a9c"/><stop offset=".235" stop-color="#015b9c"/><stop offset=".323" stop-color="#4a539c"/><stop offset=".401" stop-color="#9c499b"/><stop offset=".435" stop-color="#9c367a"/><stop offset=".480" stop-color="#9c255c"/><stop offset=".592" stop-color="#9c0c32"/><stop offset=".759" stop-color="#9c0015"/><stop offset="1" stop-color="#9c0001"/></linearGradient>
<linearGradient id="o130" gradientUnits="userSpaceOnUse" x1="1207.3" x2="1786.2"><stop offset="0" stop-color="#00679c"/><stop offset=".235" stop-color="#01589c"/><stop offset=".322" stop-color="#46509c"/><stop offset=".408" stop-color="#9c4499"/><stop offset=".443" stop-color="#9c3279"/><stop offset=".484" stop-color="#9c235e"/><stop offset=".599" stop-color="#9c0b33"/><stop offset=".761" stop-color="#9c0017"/><stop offset="1" stop-color="#9c0003"/></linearGradient>
<linearGradient id="o131" gradientUnits="userSpaceOnUse" x1="1208.3" x2="1777.9"><stop offset="0" stop-color="#00659c"/><stop offset=".236" stop-color="#01559c"/><stop offset=".327" stop-color="#494c9c"/><stop offset=".412" stop-color="#9c419b"/><stop offset=".447" stop-color="#9c2f7a"/><stop offset=".489" stop-color="#9c215f"/><stop offset=".602" stop-color="#9c0a35"/><stop offset=".764" stop-color="#9c0018"/><stop offset="1" stop-color="#9c0004"/></linearGradient>
<linearGradient id="o132" gradientUnits="userSpaceOnUse" x1="1209.2" x2="1769.6"><stop offset="0" stop-color="#00629c"/><stop offset=".236" stop-color="#01529c"/><stop offset=".329" stop-color="#47499c"/><stop offset=".418" stop-color="#9c3d9a"/><stop offset=".454" stop-color="#9c2c7a"/><stop offset=".496" stop-color="#9c1e5f"/><stop offset=".611" stop-color="#9c0836"/><stop offset=".771" stop-color="#9c0019"/><stop offset="1" stop-color="#9c0005"/></linearGradient>
<linearGradient id="o133" gradientUnits="userSpaceOnUse" x1="1210.2" x2="1761.3"><stop offset="0" stop-color="#005f9c"/><stop offset=".236" stop-color="#014f9c"/><stop offset=".335" stop-color="#4a459c"/><stop offset=".422" stop-color="#9b3a9c"/><stop offset=".458" stop-color="#9c2a7c"/><stop offset=".502" stop-color="#9c1c61"/><stop offset=".615" stop-color="#9c0738"/><stop offset=".775" stop-color="#9c001b"/><stop offset="1" stop-color="#9c0007"/></linearGradient>
<linearGradient id="o134" gradientUnits="userSpaceOnUse" x1="1211.2" x2="1753.0"><stop offset="0" stop-color="#005d9c"/><stop offset=".233" stop-color="#004c9c"/><stop offset=".330" stop-color="#43439c"/><stop offset=".430" stop-color="#9c369a"/><stop offset=".467" stop-color="#9c267b"/><stop offset=".511" stop-color="#9c1960"/><stop offset=".622" stop-color="#9c0639"/><stop offset=".778" stop-color="#9c001c"/><stop offset="1" stop-color="#9c0008"/></linearGradient>
<linearGradient id="o135" gradientUnits="userSpaceOnUse" x1="1212.3" x2="1744.8"><stop offset="0" stop-color="#005a9c"/><stop offset=".237" stop-color="#01499c"/><stop offset=".335" stop-color="#453f9c"/><stop offset=".436" stop-color="#9c3299"/><stop offset=".515" stop-color="#9c1862"/><stop offset=".628" stop-color="#9c053a"/><stop offset=".782" stop-color="#9c001e"/><stop offset="1" stop-color="#9c000a"/></linearGradient>
<linearGradient id="o136" gradientUnits="userSpaceOnUse" x1="1213.3" x2="1736.5"><stop offset="0" stop-color="#00579c"/><stop offset=".234" stop-color="#00479c"/><stop offset=".341" stop-color="#473c9c"/><stop offset=".441" stop-color="#9c2f9b"/><stop offset=".521" stop-color="#9c1664"/><stop offset=".632" stop-color="#9c043c"/><stop offset=".785" stop-color="#9c0020"/><stop offset="1" stop-color="#9c000b"/></linearGradient>
<linearGradient id="o137" gradientUnits="userSpaceOnUse" x1="1214.3" x2="1728.2"><stop offset="0" stop-color="#00559c"/><stop offset=".234" stop-color="#00449c"/><stop offset=".340" stop-color="#44399c"/><stop offset=".449" stop-color="#9c2b99"/><stop offset=".531" stop-color="#9c1363"/><stop offset=".641" stop-color="#9c033d"/><stop offset=".793" stop-color="#9c0021"/><stop offset="1" stop-color="#9c000d"/></linearGradient>
<linearGradient id="o138" gradientUnits="userSpaceOnUse" x1="1215.3" x2="1719.9"><stop offset="0" stop-color="#00529c"/><stop offset=".234" stop-color="#00419c"/><stop offset=".349" stop-color="#48369c"/><stop offset=".452" stop-color="#9b299c"/><stop offset=".532" stop-color="#9c1367"/><stop offset=".643" stop-color="#9c0240"/><stop offset=".794" stop-color="#9c0023"/><stop offset="1" stop-color="#9c000e"/></linearGradient>
<linearGradient id="o139" gradientUnits="userSpaceOnUse" x1="1216.4" x2="1711.7"><stop offset="0" stop-color="#00509c"/><stop offset=".235" stop-color="#003f9c"/><stop offset=".348" stop-color="#45339c"/><stop offset=".462" stop-color="#9c259a"/><stop offset=".543" stop-color="#9c1066"/><stop offset=".652" stop-color="#9c0141"/><stop offset=".802" stop-color="#9c0024"/><stop offset="1" stop-color="#9c0010"/></linearGradient>
<linearGradient id="o140" gradientUnits="userSpaceOnUse" x1="1217.5" x2="1703.4"><stop offset="0" stop-color="#004d9c"/><stop offset=".236" stop-color="#003c9c"/><stop offset=".355" stop-color="#47309c"/><stop offset=".467" stop-color="#9c229b"/><stop offset=".550" stop-color="#9c0e67"/><stop offset=".657" stop-color="#9c0042"/><stop offset=".802" stop-color="#9c0027"/><stop offset="1" stop-color="#9c0012"/></linearGradient>
<linearGradient id="o141" gradientUnits="userSpaceOnUse" x1="1218.6" x2="1695.1"><stop offset="0" stop-color="#004b9c"/><stop offset=".235" stop-color="#003a9c"/><stop offset=".361" stop-color="#492d9c"/><stop offset=".475" stop-color="#9c1f9b"/><stop offset=".555" stop-color="#9c0d6a"/><stop offset=".664" stop-color="#9c0044"/><stop offset=".807" stop-color="#9c0029"/><stop offset="1" stop-color="#9c0014"/></linearGradient>
<linearGradient id="o142" gradientUnits="userSpaceOnUse" x1="1219.6" x2="1686.8"><stop offset="0" stop-color="#00489c"/><stop offset=".236" stop-color="#00379c"/><stop offset=".365" stop-color="#492b9c"/><stop offset=".481" stop-color="#9b1c9c"/><stop offset=".562" stop-color="#9c0b6b"/><stop offset=".670" stop-color="#9c0046"/><stop offset=".811" stop-color="#9c002b"/><stop offset="1" stop-color="#9c0016"/></linearGradient>
<linearGradient id="o143" gradientUnits="userSpaceOnUse" x1="1220.8" x2="1678.5"><stop offset="0" stop-color="#00469c"/><stop offset=".237" stop-color="#01359c"/><stop offset=".368" stop-color="#48289c"/><stop offset=".491" stop-color="#9c199a"/><stop offset=".575" stop-color="#9c086a"/><stop offset=".680" stop-color="#9c0047"/><stop offset=".820" stop-color="#9c002c"/><stop offset="1" stop-color="#9c0018"/></linearGradient>
<linearGradient id="o144" gradientUnits="userSpaceOnUse" x1="1222.0" x2="1670.3"><stop offset="0" stop-color="#00449c"/><stop offset=".237" stop-color="#01329c"/><stop offset=".371" stop-color="#47269c"/><stop offset=".500" stop-color="#9c159a"/><stop offset=".580" stop-color="#9c076c"/><stop offset=".683" stop-color="#9c004a"/><stop offset=".821" stop-color="#9c002f"/><stop offset="1" stop-color="#9c001a"/></linearGradient>
<linearGradient id="o145" gradientUnits="userSpaceOnUse" x1="1223.1" x2="1662.0"><stop offset="0" stop-color="#00419c"/><stop offset=".237" stop-color="#01309c"/><stop offset=".379" stop-color="#49239c"/><stop offset=".507" stop-color="#9c139b"/><stop offset=".584" stop-color="#9c056f"/><stop offset=".689" stop-color="#9c004c"/><stop offset=".826" stop-color="#9c0031"/><stop offset="1" stop-color="#9c001c"/></linearGradient>
<linearGradient id="o146" gradientUnits="userSpaceOnUse" x1="1224.3" x2="1653.7"><stop offset="0" stop-color="#003f9c"/><stop offset=".238" stop-color="#012e9c"/><stop offset=".383" stop-color="#49209c"/><stop offset=".514" stop-color="#9b119c"/><stop offset=".593" stop-color="#9c0470"/><stop offset=".696" stop-color="#9c004e"/><stop offset=".827" stop-color="#9c0033"/><stop offset="1" stop-color="#9c001e"/></linearGradient>
<linearGradient id="o147" gradientUnits="userSpaceOnUse" x1="1225.5" x2="1645.4"><stop offset="0" stop-color="#003d9c"/><stop offset=".234" stop-color="#002c9c"/><stop offset=".383" stop-color="#461e9c"/><stop offset=".526" stop-color="#9c0d9a"/><stop offset=".608" stop-color="#9c016f"/><stop offset=".708" stop-color="#9c004f"/><stop offset=".837" stop-color="#9c0035"/><stop offset="1" stop-color="#9c0021"/></linearGradient>
<linearGradient id="o148" gradientUnits="userSpaceOnUse" x1="1226.8" x2="1637.2"><stop offset="0" stop-color="#003a9c"/><stop offset=".234" stop-color="#002a9c"/><stop offset=".385" stop-color="#451c9c"/><stop offset=".537" stop-color="#9c0b99"/><stop offset=".615" stop-color="#9c0071"/><stop offset=".717" stop-color="#9c0050"/><stop offset=".844" stop-color="#9c0037"/><stop offset="1" stop-color="#9c0023"/></linearGradient>
<linearGradient id="o149" gradientUnits="userSpaceOnUse" x1="1228.1" x2="1628.9"><stop offset="0" stop-color="#00389c"/><stop offset=".235" stop-color="#00289c"/><stop offset=".395" stop-color="#48199c"/><stop offset=".545" stop-color="#9c089a"/><stop offset=".625" stop-color="#9c0072"/><stop offset=".720" stop-color="#9c0054"/><stop offset=".845" stop-color="#9c003a"/><stop offset="1" stop-color="#9c0026"/></linearGradient>
<linearGradient id="o150" gradientUnits="userSpaceOnUse" x1="1229.4" x2="1620.6"><stop offset="0" stop-color="#00369c"/><stop offset=".236" stop-color="#01269c"/><stop offset=".405" stop-color="#4a179c"/><stop offset=".554" stop-color="#9c069c"/><stop offset=".631" stop-color="#9c0075"/><stop offset=".728" stop-color="#9c0056"/><stop offset="1" stop-color="#9c0029"/></linearGradient>
<linearGradient id="o151" gradientUnits="userSpaceOnUse" x1="1230.7" x2="1612.3"><stop offset="0" stop-color="#00349c"/><stop offset=".237" stop-color="#01249c"/><stop offset=".405" stop-color="#47159c"/><stop offset=".568" stop-color="#9c0399"/><stop offset=".647" stop-color="#9c0074"/><stop offset=".742" stop-color="#9c0057"/><stop offset="1" stop-color="#9c002c"/></linearGradient>
<linearGradient id="o152" gradientUnits="userSpaceOnUse" x1="1232.1" x2="1604.0"><stop offset="0" stop-color="#00319c"/><stop offset=".232" stop-color="#00229c"/><stop offset=".411" stop-color="#47139c"/><stop offset=".578" stop-color="#9c019a"/><stop offset=".654" stop-color="#9c0077"/><stop offset=".746" stop-color="#9c005a"/><stop offset="1" stop-color="#9c002f"/></linearGradient>
<linearGradient id="o153" gradientUnits="userSpaceOnUse" x1="1233.5" x2="1595.8"><stop offset="0" stop-color="#002f9c"/><stop offset=".232" stop-color="#00209c"/><stop offset=".414" stop-color="#46119c"/><stop offset=".591" stop-color="#9c009a"/><stop offset=".669" stop-color="#9c0077"/><stop offset=".757" stop-color="#9c005c"/><stop offset="1" stop-color="#9c0032"/></linearGradient>
<linearGradient id="o154" gradientUnits="userSpaceOnUse" x1="1234.9" x2="1587.5"><stop offset="0" stop-color="#002d9c"/><stop offset=".233" stop-color="#001e9c"/><stop offset=".426" stop-color="#490e9c"/><stop offset=".602" stop-color="#9c009b"/><stop offset=".676" stop-color="#9c007a"/><stop offset=".767" stop-color="#9c005e"/><stop offset="1" stop-color="#9c0035"/></linearGradient>
<linearGradient id="o155" gradientUnits="userSpaceOnUse" x1="1236.3" x2="1579.2"><stop offset="0" stop-color="#002b9c"/><stop offset=".234" stop-color="#011c9c"/><stop offset=".433" stop-color="#490c9c"/><stop offset=".614" stop-color="#9b009c"/><stop offset=".772" stop-color="#9c0062"/><stop offset="1" stop-color="#9c0039"/></linearGradient>
<linearGradient id="o156" gradientUnits="userSpaceOnUse" x1="1237.7" x2="1570.9"><stop offset="0" stop-color="#00299c"/><stop offset=".229" stop-color="#001b9c"/><stop offset=".440" stop-color="#490a9c"/><stop offset=".627" stop-color="#9b009c"/><stop offset=".783" stop-color="#9c0064"/><stop offset="1" stop-color="#9c003c"/></linearGradient>
<linearGradient id="o157" gradientUnits="userSpaceOnUse" x1="1239.1" x2="1562.7"><stop offset="0" stop-color="#00279c"/><stop offset=".230" stop-color="#00199c"/><stop offset=".447" stop-color="#49089c"/><stop offset=".640" stop-color="#9a009c"/><stop offset=".795" stop-color="#9c0067"/><stop offset="1" stop-color="#9c0040"/></linearGradient>
<linearGradient id="o158" gradientUnits="userSpaceOnUse" x1="1240.6" x2="1554.4"><stop offset="0" stop-color="#00259c"/><stop offset=".231" stop-color="#01179c"/><stop offset=".455" stop-color="#49069c"/><stop offset=".660" stop-color="#9c009b"/><stop offset=".808" stop-color="#9c0069"/><stop offset="1" stop-color="#9c0045"/></linearGradient>
<linearGradient id="o159" gradientUnits="userSpaceOnUse" x1="1242.0" x2="1546.1"><stop offset="0" stop-color="#00229c"/><stop offset=".230" stop-color="#01159c"/><stop offset=".467" stop-color="#4a049c"/><stop offset=".678" stop-color="#9c009b"/><stop offset=".816" stop-color="#9c006d"/><stop offset="1" stop-color="#9c0049"/></linearGradient>
<linearGradient id="o160" gradientUnits="userSpaceOnUse" x1="1243.5" x2="1537.8"><stop offset="0" stop-color="#00209c"/><stop offset=".231" stop-color="#01139c"/><stop offset=".476" stop-color="#4a029c"/><stop offset=".694" stop-color="#9b009c"/><stop offset=".830" stop-color="#9c006f"/><stop offset="1" stop-color="#9c004e"/></linearGradient>
<linearGradient id="o161" gradientUnits="userSpaceOnUse" x1="1245.0" x2="1529.5"><stop offset="0" stop-color="#001e9c"/><stop offset=".225" stop-color="#00129c"/><stop offset=".486" stop-color="#4a009c"/><stop offset=".711" stop-color="#9b009c"/><stop offset=".845" stop-color="#9c0072"/><stop offset="1" stop-color="#9c0053"/></linearGradient>
<linearGradient id="o162" gradientUnits="userSpaceOnUse" x1="1246.5" x2="1521.3"><stop offset="0" stop-color="#001c9c"/><stop offset=".226" stop-color="#01109c"/><stop offset=".496" stop-color="#4a009c"/><stop offset=".730" stop-color="#9a009c"/><stop offset=".861" stop-color="#9c0074"/><stop offset="1" stop-color="#9c0058"/></linearGradient>
<linearGradient id="o163" gradientUnits="userSpaceOnUse" x1="1248.1" x2="1513.0"><stop offset="0" stop-color="#001a9c"/><stop offset=".227" stop-color="#010f9c"/><stop offset=".508" stop-color="#4a009c"/><stop offset=".758" stop-color="#9c009b"/><stop offset=".871" stop-color="#9c0079"/><stop offset="1" stop-color="#9c005e"/></linearGradient>
<linearGradient id="o164" gradientUnits="userSpaceOnUse" x1="1249.7" x2="1504.7"><stop offset="0" stop-color="#00189c"/><stop offset=".220" stop-color="#000d9c"/><stop offset=".520" stop-color="#4a009c"/><stop offset=".780" stop-color="#9b009c"/><stop offset="1" stop-color="#9c0064"/></linearGradient>
<linearGradient id="o165" gradientUnits="userSpaceOnUse" x1="1251.3" x2="1496.4"><stop offset="0" stop-color="#00169c"/><stop offset=".221" stop-color="#010c9c"/><stop offset=".533" stop-color="#4a009c"/><stop offset=".803" stop-color="#9b009c"/><stop offset="1" stop-color="#9c006b"/></linearGradient>
<linearGradient id="o166" gradientUnits="userSpaceOnUse" x1="1252.9" x2="1488.2"><stop offset="0" stop-color="#00149c"/><stop offset=".222" stop-color="#020a9c"/><stop offset=".547" stop-color="#4a009c"/><stop offset=".829" stop-color="#9a009c"/><stop offset="1" stop-color="#9c0072"/></linearGradient>
<linearGradient id="o167" gradientUnits="userSpaceOnUse" x1="1254.6" x2="1479.9"><stop offset="0" stop-color="#00129c"/><stop offset=".214" stop-color="#00099c"/><stop offset=".554" stop-color="#48009c"/><stop offset=".857" stop-color="#9a009c"/><stop offset="1" stop-color="#9c0079"/></linearGradient>
<linearGradient id="o168" gradientUnits="userSpaceOnUse" x1="1256.3" x2="1471.6"><stop offset="0" stop-color="#00109c"/><stop offset=".215" stop-color="#01079c"/><stop offset=".579" stop-color="#4b009c"/><stop offset=".897" stop-color="#9c009b"/><stop offset="1" stop-color="#9c0082"/></linearGradient>
<linearGradient id="o169" gradientUnits="userSpaceOnUse" x1="1258.1" x2="1463.3"><stop offset="0" stop-color="#000f9c"/><stop offset=".206" stop-color="#00069c"/><stop offset=".588" stop-color="#49009c"/><stop offset=".931" stop-color="#9b009c"/><stop offset="1" stop-color="#9c008b"/></linearGradient>
<linearGradient id="o170" gradientUnits="userSpaceOnUse" x1="1259.9" x2="1455.1"><stop offset="0" stop-color="#000d9c"/><stop offset=".206" stop-color="#01049c"/><stop offset=".557" stop-color="#3f009c"/><stop offset=".969" stop-color="#9b009c"/><stop offset="1" stop-color="#9c0095"/></linearGradient>
<linearGradient id="o171" gradientUnits="userSpaceOnUse" x1="1261.9" x2="1446.8"><stop offset="0" stop-color="#000b9c"/><stop offset=".228" stop-color="#05029c"/><stop offset=".630" stop-color="#49009c"/><stop offset="1" stop-color="#97009c"/></linearGradient>
<linearGradient id="o172" gradientUnits="userSpaceOnUse" x1="1263.9" x2="1438.5"><stop offset="0" stop-color="#00099c"/><stop offset=".207" stop-color="#03019c"/><stop offset=".621" stop-color="#43009c"/><stop offset="1" stop-color="#8d009c"/></linearGradient>
<linearGradient id="o173" gradientUnits="userSpaceOnUse" x1="1265.9" x2="1430.2"><stop offset="0" stop-color="#00079c"/><stop offset=".183" stop-color="#00019c"/><stop offset=".610" stop-color="#3e009c"/><stop offset="1" stop-color="#83009c"/></linearGradient>
<linearGradient id="o174" gradientUnits="userSpaceOnUse" x1="1268.1" x2="1421.9"><stop offset="0" stop-color="#00059c"/><stop offset=".184" stop-color="#01009c"/><stop offset=".605" stop-color="#3a009c"/><stop offset="1" stop-color="#79009c"/></linearGradient>
<linearGradient id="o175" gradientUnits="userSpaceOnUse" x1="1270.3" x2="1413.7"><stop offset="0" stop-color="#00039c"/><stop offset=".169" stop-color="#01009c"/><stop offset="1" stop-color="#70009c"/></linearGradient>
<linearGradient id="o176" gradientUnits="userSpaceOnUse" x1="1272.6" x2="1405.4"><stop offset="0" stop-color="#00019c"/><stop offset=".152" stop-color="#00009c"/><stop offset="1" stop-color="#67009c"/></linearGradient>
<linearGradient id="o177" gradientUnits="userSpaceOnUse" x1="1275.1" x2="1397.1"><stop offset="0" stop-color="#00009c"/><stop offset=".150" stop-color="#02009c"/><stop offset="1" stop-color="#5e009c"/></linearGradient>
<linearGradient id="o178" gradientUnits="userSpaceOnUse" x1="1277.8" x2="1388.8"><stop offset="0" stop-color="#00009c"/><stop offset=".182" stop-color="#06009c"/><stop offset="1" stop-color="#56009c"/></linearGradient>
<linearGradient id="o179" gradientUnits="userSpaceOnUse" x1="1280.6" x2="1380.6"><stop offset="0" stop-color="#00009c"/><stop offset=".224" stop-color="#0b009c"/><stop offset="1" stop-color="#4e009c"/></linearGradient>
<linearGradient id="o180" gradientUnits="userSpaceOnUse" x1="1283.9" x2="1372.3"><stop offset="0" stop-color="#00009c"/><stop offset="1" stop-color="#47009c"/></linearGradient>
<linearGradient id="o181" gradientUnits="userSpaceOnUse" x1="1287.4" x2="1364.0"><stop offset="0" stop-color="#00009c"/><stop offset="1" stop-color="#40009c"/></linearGradient>
<linearGradient id="o182" gradientUnits="userSpaceOnUse" x1="1291.3" x2="1355.7"><stop offset="0" stop-color="#04009c"/><stop offset="1" stop-color="#39009c"/></linearGradient>
<linearGradient id="o183" gradientUnits="userSpaceOnUse" x1="1295.6" x2="1347.4"><stop offset="0" stop-color="#08009c"/><stop offset="1" stop-color="#32009c"/></linearGradient>
<linearGradient id="o184" gradientUnits="userSpaceOnUse" x1="1300.1" x2="1339.2"><stop offset="0" stop-color="#0c009c"/><stop offset="1" stop-color="#2b009c"/></linearGradient>
<linearGradient id="o185" gradientUnits="userSpaceOnUse" x1="1304.7" x2="1330.9"><stop offset="0" stop-color="#10009c"/><stop offset="1" stop-color="#25009c"/></linearGradient>
<linearGradient id="o186" gradientUnits="userSpaceOnUse" x1="1309.1" x2="1322.6"><stop offset="0" stop-color="#14009c"/><stop offset="1" stop-color="#1f009c"/></linearGradient>
<linearGradient id="i0" gradientUnits="userSpaceOnUse" x1="1424.8" x2="1431.8"><stop offset="0" stop-color="#00ff01"/><stop offset="1" stop-color="#05ff00"/></linearGradient>
<linearGradient id="i1" gradientUnits="userSpaceOnUse" x1="1424.1" x2="1435.1"><stop offset="0" stop-color="#00ff02"/><stop offset="1" stop-color="#0aff00"/></linearGradient>
<linearGradient id="i2" gradientUnits="userSpaceOnUse" x1="1423.3" x2="1438.4"><stop offset="0" stop-color="#00ff04"/><stop offset="1" stop-color="#0fff00"/></linearGradient>
<linearGradient id="i3" gradientUnits="userSpaceOnUse" x1="1422.6" x2="1441.7"><stop offset="0" stop-color="#00ff05"/><stop offset="1" stop-color="#15ff00"/></linearGradient>
<linearGradient id="i4" gradientUnits="userSpaceOnUse" x1="1421.9" x2="1445.0"><stop offset="0" stop-color="#00ff06"/><stop offset="1" stop-color="#1bff00"/></linearGradient>
<linearGradient id="i5" gradientUnits="userSpaceOnUse" x1="1421.2" x2="1448.3"><stop offset="0" stop-color="#00ff08"/><stop offset="1" stop-color="#20ff00"/></linearGradient>
<linearGradient id="i6" gradientUnits="userSpaceOnUse" x1="1420.4" x2="1451.7"><stop offset="0" stop-color="#00ff09"/><stop offset="1" stop-color="#26ff00"/></linearGradient>
<linearGradient id="i7" gradientUnits="userSpaceOnUse" x1="1419.7" x2="1455.0"><stop offset="0" stop-color="#00ff0b"/><stop offset="1" stop-color="#2dff00"/></linearGradient>
<linearGradient id="i8" gradientUnits="userSpaceOnUse" x1="1419.0" x2="1458.3"><stop offset="0" stop-color="#00ff0c"/><stop offset="1" stop-color="#33ff00"/></linearGradient>
<linearGradient id="i9" gradientUnits="userSpaceOnUse" x1="1418.2" x2="1461.6"><stop offset="0" stop-color="#00ff0e"/><stop offset="1" stop-color="#39ff00"/></linearGradient>
<linearGradient id="i10" gradientUnits="userSpaceOnUse" x1="1417.5" x2="1464.9"><stop offset="0" stop-color="#00ff0f"/><stop offset="1" stop-color="#40ff00"/></linearGradient>
<linearGradient id="i11" gradientUnits="userSpaceOnUse" x1="1416.8" x2="1468.2"><stop offset="0" stop-color="#00ff11"/><stop offset="1" stop-color="#46ff00"/></linearGradient>
<linearGradient id="i12" gradientUnits="userSpaceOnUse" x1="1416.0" x2="1471.5"><stop offset="0" stop-color="#00ff13"/><stop offset="1" stop-color="#4dff00"/></linearGradient>
<linearGradient id="i13" gradientUnits="userSpaceOnUse" x1="1415.3" x2="1474.8"><stop offset="0" stop-color="#00ff14"/><stop offset="1" stop-color="#54ff00"/></linearGradient>
<linearGradient id="i14" gradientUnits="userSpaceOnUse" x1="1414.6" x2="1478.2"><stop offset="0" stop-color="#00ff16"/><stop offset=".258" stop-color="#12ff10"/><stop offset="1" stop-color="#5cff00"/></linearGradient>
<linearGradient id="i15" gradientUnits="userSpaceOnUse" x1="1413.8" x2="1481.5"><stop offset="0" stop-color="#00ff17"/><stop offset=".303" stop-color="#19ff10"/><stop offset="1" stop-color="#63ff00"/></linearGradient>
<linearGradient id="i16" gradientUnits="userSpaceOnUse" x1="1413.1" x2="1484.8"><stop offset="0" stop-color="#00ff19"/><stop offset=".314" stop-color="#1cff11"/><stop offset="1" stop-color="#6bff00"/></linearGradient>
<linearGradient id="i17" gradientUnits="userSpaceOnUse" x1="1412.4" x2="1488.1"><stop offset="0" stop-color="#00ff1b"/><stop offset=".351" stop-color="#22ff11"/><stop offset="1" stop-color="#73ff00"/></linearGradient>
<linearGradient id="i18" gradientUnits="userSpaceOnUse" x1="1411.7" x2="1491.4"><stop offset="0" stop-color="#00ff1c"/><stop offset=".359" stop-color="#25ff12"/><stop offset="1" stop-color="#7bff00"/></linearGradient>
<linearGradient id="i19" gradientUnits="userSpaceOnUse" x1="1410.9" x2="1494.7"><stop offset="0" stop-color="#00ff1e"/><stop offset=".390" stop-color="#2cff13"/><stop offset="1" stop-color="#83ff00"/></linearGradient>
<linearGradient id="i20" gradientUnits="userSpaceOnUse" x1="1410.2" x2="1498.0"><stop offset="0" stop-color="#00ff20"/><stop offset=".395" stop-color="#2fff14"/><stop offset="1" stop-color="#8cff00"/></linearGradient>
<linearGradient id="i21" gradientUnits="userSpaceOnUse" x1="1409.5" x2="1501.3"><stop offset="0" stop-color="#00ff22"/><stop offset=".422" stop-color="#36ff14"/><stop offset="1" stop-color="#94ff00"/></linearGradient>
<linearGradient id="i22" gradientUnits="userSpaceOnUse" x1="1408.7" x2="1504.7"><stop offset="0" stop-color="#00ff23"/><stop offset=".426" stop-color="#3aff15"/><stop offset="1" stop-color="#9dff00"/></linearGradient>
<linearGradient id="i23" gradientUnits="userSpaceOnUse" x1="1408.0" x2="1508.0"><stop offset="0" stop-color="#00ff25"/><stop offset=".429" stop-color="#3eff16"/><stop offset="1" stop-color="#a7ff00"/></linearGradient>
<linearGradient id="i24" gradientUnits="userSpaceOnUse" x1="1407.3" x2="1511.3"><stop offset="0" stop-color="#00ff27"/><stop offset=".442" stop-color="#43ff17"/><stop offset="1" stop-color="#b0ff00"/></linearGradient>
<linearGradient id="i25" gradientUnits="userSpaceOnUse" x1="1406.5" x2="1514.6"><stop offset="0" stop-color="#00ff29"/><stop offset=".037" stop-color="#01ff28"/><stop offset=".444" stop-color="#47ff18"/><stop offset="1" stop-color="#baff00"/></linearGradient>
<linearGradient id="i26" gradientUnits="userSpaceOnUse" x1="1405.8" x2="1517.9"><stop offset="0" stop-color="#00ff2b"/><stop offset=".071" stop-color="#07ff28"/><stop offset=".464" stop-color="#4fff18"/><stop offset="1" stop-color="#c4ff00"/></linearGradient>
<linearGradient id="i27" gradientUnits="userSpaceOnUse" x1="1405.1" x2="1521.2"><stop offset="0" stop-color="#00ff2d"/><stop offset=".086" stop-color="#0aff29"/><stop offset=".466" stop-color="#53ff19"/><stop offset="1" stop-color="#cfff00"/></linearGradient>
<linearGradient id="i28" gradientUnits="userSpaceOnUse" x1="1404.3" x2="1524.5"><stop offset="0" stop-color="#00ff2f"/><stop offset=".100" stop-color="#0dff2b"/><stop offset=".467" stop-color="#57ff1a"/><stop offset="1" stop-color="#daff00"/></linearGradient>
<linearGradient id="i29" gradientUnits="userSpaceOnUse" x1="1403.6" x2="1527.8"><stop offset="0" stop-color="#00ff31"/><stop offset=".129" stop-color="#14ff2b"/><stop offset=".484" stop-color="#5fff1b"/><stop offset="1" stop-color="#e5ff00"/></linearGradient>
<linearGradient id="i30" gradientUnits="userSpaceOnUse" x1="1402.9" x2="1531.2"><stop offset="0" stop-color="#00ff33"/><stop offset=".125" stop-color="#14ff2d"/><stop offset=".484" stop-color="#64ff1c"/><stop offset="1" stop-color="#f0ff00"/></linearGradient>
<linearGradient id="i31" gradientUnits="userSpaceOnUse" x1="1402.2" x2="1534.5"><stop offset="0" stop-color="#00ff35"/><stop offset=".136" stop-color="#17ff2e"/><stop offset=".485" stop-color="#68ff1d"/><stop offset="1" stop-color="#fcff00"/></linearGradient>
<linearGradient id="i32" gradientUnits="userSpaceOnUse" x1="1401.4" x2="1537.8"><stop offset="0" stop-color="#00ff37"/><stop offset=".088" stop-color="#0eff33"/><stop offset=".412" stop-color="#5aff22"/><stop offset=".706" stop-color="#abff11"/><stop offset=".971" stop-color="#ffff00"/><stop offset="1" stop-color="#fff600"/></linearGradient>
<linearGradient id="i33" gradientUnits="userSpaceOnUse" x1="1400.7" x2="1541.1"><stop offset="0" stop-color="#00ff39"/><stop offset=".129" stop-color="#18ff33"/><stop offset=".457" stop-color="#6aff21"/><stop offset=".929" stop-color="#fcff03"/><stop offset="1" stop-color="#ffea00"/></linearGradient>
<linearGradient id="i34" gradientUnits="userSpaceOnUse" x1="1400.0" x2="1544.4"><stop offset="0" stop-color="#00ff3b"/><stop offset=".139" stop-color="#1bff34"/><stop offset=".444" stop-color="#6bff24"/><stop offset=".903" stop-color="#feff05"/><stop offset="1" stop-color="#ffe000"/></linearGradient>
<linearGradient id="i35" gradientUnits="userSpaceOnUse" x1="1399.2" x2="1547.7"><stop offset="0" stop-color="#00ff3d"/><stop offset=".122" stop-color="#18ff37"/><stop offset=".419" stop-color="#68ff26"/><stop offset=".865" stop-color="#fbff08"/><stop offset="1" stop-color="#ffd600"/></linearGradient>
<linearGradient id="i36" gradientUnits="userSpaceOnUse" x1="1398.5" x2="1551.0"><stop offset="0" stop-color="#00ff3f"/><stop offset=".118" stop-color="#18ff39"/><stop offset=".408" stop-color="#68ff29"/><stop offset=".842" stop-color="#fdff0b"/><stop offset="1" stop-color="#ffcc00"/></linearGradient>
<linearGradient id="i37" gradientUnits="userSpaceOnUse" x1="1397.8" x2="1554.3"><stop offset="0" stop-color="#00ff41"/><stop offset=".115" stop-color="#18ff3b"/><stop offset=".397" stop-color="#69ff2b"/><stop offset=".821" stop-color="#fffe0d"/><stop offset="1" stop-color="#ffc300"/></linearGradient>
<linearGradient id="i38" gradientUnits="userSpaceOnUse" x1="1397.0" x2="1557.7"><stop offset="0" stop-color="#00ff43"/><stop offset=".112" stop-color="#18ff3d"/><stop offset=".388" stop-color="#6aff2d"/><stop offset=".787" stop-color="#fdff10"/><stop offset="1" stop-color="#ffba00"/></linearGradient>
<linearGradient id="i39" gradientUnits="userSpaceOnUse" x1="1396.3" x2="1561.0"><stop offset="0" stop-color="#00ff45"/><stop offset=".110" stop-color="#19ff40"/><stop offset=".378" stop-color="#6bff30"/><stop offset=".768" stop-color="#ffff13"/><stop offset=".878" stop-color="#ffd507"/><stop offset="1" stop-color="#ffb200"/></linearGradient>
<linearGradient id="i40" gradientUnits="userSpaceOnUse" x1="1395.6" x2="1564.3"><stop offset="0" stop-color="#00ff48"/><stop offset=".095" stop-color="#15ff43"/><stop offset=".357" stop-color="#68ff33"/><stop offset=".738" stop-color="#fcff16"/><stop offset=".869" stop-color="#ffcf08"/><stop offset="1" stop-color="#ffab00"/></linearGradient>
<linearGradient id="i41" gradientUnits="userSpaceOnUse" x1="1394.8" x2="1567.6"><stop offset="0" stop-color="#00ff4a"/><stop offset=".093" stop-color="#15ff45"/><stop offset=".349" stop-color="#69ff35"/><stop offset=".547" stop-color="#b3ff27"/><stop offset=".721" stop-color="#feff19"/><stop offset=".849" stop-color="#ffcd0a"/><stop offset="1" stop-color="#ffa300"/></linearGradient>
<linearGradient id="i42" gradientUnits="userSpaceOnUse" x1="1394.1" x2="1570.9"><stop offset="0" stop-color="#00ff4c"/><stop offset=".091" stop-color="#16ff47"/><stop offset=".330" stop-color="#65ff38"/><stop offset=".705" stop-color="#fffd1b"/><stop offset=".841" stop-color="#ffc80b"/><stop offset="1" stop-color="#ff9c00"/></linearGradient>
<linearGradient id="i43" gradientUnits="userSpaceOnUse" x1="1393.4" x2="1574.2"><stop offset="0" stop-color="#00ff4f"/><stop offset=".089" stop-color="#16ff4a"/><stop offset=".333" stop-color="#6aff3a"/><stop offset=".678" stop-color="#feff1f"/><stop offset=".822" stop-color="#ffc60d"/><stop offset="1" stop-color="#ff9500"/></linearGradient>
<linearGradient id="i44" gradientUnits="userSpaceOnUse" x1="1392.7" x2="1577.5"><stop offset="0" stop-color="#00ff51"/><stop offset=".087" stop-color="#16ff4c"/><stop offset=".315" stop-color="#67ff3d"/><stop offset=".663" stop-color="#fffe21"/><stop offset=".815" stop-color="#ffc00e"/><stop offset="1" stop-color="#ff8f00"/></linearGradient>
<linearGradient id="i45" gradientUnits="userSpaceOnUse" x1="1391.9" x2="1580.8"><stop offset="0" stop-color="#00ff53"/><stop offset=".085" stop-color="#16ff4e"/><stop offset=".309" stop-color="#68ff40"/><stop offset=".638" stop-color="#fdff25"/><stop offset=".809" stop-color="#ffbb0e"/><stop offset="1" stop-color="#ff8900"/></linearGradient>
<linearGradient id="i46" gradientUnits="userSpaceOnUse" x1="1391.2" x2="1584.2"><stop offset="0" stop-color="#00ff56"/><stop offset=".083" stop-color="#16ff51"/><stop offset=".302" stop-color="#69ff42"/><stop offset=".625" stop-color="#ffff27"/><stop offset=".792" stop-color="#ffb910"/><stop offset="1" stop-color="#ff8300"/></linearGradient>
<linearGradient id="i47" gradientUnits="userSpaceOnUse" x1="1390.5" x2="1587.5"><stop offset="0" stop-color="#00ff58"/><stop offset=".071" stop-color="#13ff54"/><stop offset=".286" stop-color="#65ff46"/><stop offset=".612" stop-color="#fffc2a"/><stop offset=".786" stop-color="#ffb411"/><stop offset="1" stop-color="#ff7d00"/></linearGradient>
<linearGradient id="i48" gradientUnits="userSpaceOnUse" x1="1389.7" x2="1590.8"><stop offset="0" stop-color="#00ff5b"/><stop offset=".080" stop-color="#17ff56"/><stop offset=".290" stop-color="#6aff48"/><stop offset=".590" stop-color="#ffff2e"/><stop offset=".680" stop-color="#ffd31f"/><stop offset=".770" stop-color="#ffb213"/><stop offset="1" stop-color="#ff7800"/></linearGradient>
<linearGradient id="i49" gradientUnits="userSpaceOnUse" x1="1389.0" x2="1594.1"><stop offset="0" stop-color="#00ff5e"/><stop offset=".069" stop-color="#13ff59"/><stop offset=".275" stop-color="#67ff4b"/><stop offset=".578" stop-color="#fffd30"/><stop offset=".667" stop-color="#ffd121"/><stop offset=".765" stop-color="#ffad13"/><stop offset="1" stop-color="#ff7300"/></linearGradient>
<linearGradient id="i50" gradientUnits="userSpaceOnUse" x1="1388.3" x2="1597.4"><stop offset="0" stop-color="#00ff60"/><stop offset=".067" stop-color="#13ff5c"/><stop offset=".269" stop-color="#68ff4e"/><stop offset=".423" stop-color="#b3ff41"/><stop offset=".558" stop-color="#feff35"/><stop offset=".654" stop-color="#ffcf23"/><stop offset=".750" stop-color="#ffab15"/><stop offset="1" stop-color="#ff6e00"/></linearGradient>
<linearGradient id="i51" gradientUnits="userSpaceOnUse" x1="1387.5" x2="1600.7"><stop offset="0" stop-color="#00ff63"/><stop offset=".066" stop-color="#13ff5f"/><stop offset=".255" stop-color="#64ff51"/><stop offset=".547" stop-color="#fffe37"/><stop offset=".632" stop-color="#ffd126"/><stop offset=".736" stop-color="#ffa917"/><stop offset="1" stop-color="#ff6900"/></linearGradient>
<linearGradient id="i52" gradientUnits="userSpaceOnUse" x1="1386.8" x2="1604.0"><stop offset="0" stop-color="#00ff65"/><stop offset=".065" stop-color="#14ff61"/><stop offset=".250" stop-color="#65ff54"/><stop offset=".398" stop-color="#b1ff48"/><stop offset=".528" stop-color="#fdff3c"/><stop offset=".630" stop-color="#ffcb27"/><stop offset=".731" stop-color="#ffa418"/><stop offset=".852" stop-color="#ff830a"/><stop offset="1" stop-color="#ff6500"/></linearGradient>
<linearGradient id="i53" gradientUnits="userSpaceOnUse" x1="1386.1" x2="1607.3"><stop offset="0" stop-color="#00ff68"/><stop offset=".064" stop-color="#14ff64"/><stop offset=".245" stop-color="#66ff57"/><stop offset=".518" stop-color="#fffe3f"/><stop offset=".609" stop-color="#ffcd2b"/><stop offset=".718" stop-color="#ffa219"/><stop offset=".845" stop-color="#ff7f0b"/><stop offset="1" stop-color="#ff6000"/></linearGradient>
<linearGradient id="i54" gradientUnits="userSpaceOnUse" x1="1385.3" x2="1610.7"><stop offset="0" stop-color="#00ff6b"/><stop offset=".054" stop-color="#10ff68"/><stop offset=".232" stop-color="#62ff5b"/><stop offset=".509" stop-color="#fffc41"/><stop offset=".607" stop-color="#ffc72b"/><stop offset=".714" stop-color="#ff9e1a"/><stop offset=".848" stop-color="#ff790b"/><stop offset="1" stop-color="#ff5c00"/></linearGradient>
<linearGradient id="i55" gradientUnits="userSpaceOnUse" x1="1384.6" x2="1614.0"><stop offset="0" stop-color="#00ff6e"/><stop offset=".061" stop-color="#14ff6a"/><stop offset=".237" stop-color="#68ff5d"/><stop offset=".368" stop-color="#b1ff52"/><stop offset=".491" stop-color="#ffff46"/><stop offset=".588" stop-color="#ffc92f"/><stop offset=".702" stop-color="#ff9c1c"/><stop offset=".833" stop-color="#ff780c"/><stop offset="1" stop-color="#ff5800"/></linearGradient>
<linearGradient id="i56" gradientUnits="userSpaceOnUse" x1="1383.9" x2="1617.3"><stop offset="0" stop-color="#00ff71"/><stop offset=".052" stop-color="#10ff6d"/><stop offset=".224" stop-color="#64ff61"/><stop offset=".483" stop-color="#fffd49"/><stop offset=".578" stop-color="#ffc631"/><stop offset=".690" stop-color="#ff9a1d"/><stop offset=".828" stop-color="#ff740d"/><stop offset="1" stop-color="#ff5400"/></linearGradient>
<linearGradient id="i57" gradientUnits="userSpaceOnUse" x1="1383.2" x2="1620.6"><stop offset="0" stop-color="#00ff74"/><stop offset=".051" stop-color="#11ff70"/><stop offset=".220" stop-color="#65ff64"/><stop offset=".347" stop-color="#afff59"/><stop offset=".466" stop-color="#feff4d"/><stop offset=".568" stop-color="#ffc433"/><stop offset=".686" stop-color="#ff951e"/><stop offset=".831" stop-color="#ff6f0d"/><stop offset="1" stop-color="#ff5000"/></linearGradient>
<linearGradient id="i58" gradientUnits="userSpaceOnUse" x1="1382.4" x2="1623.9"><stop offset="0" stop-color="#00ff76"/><stop offset=".050" stop-color="#11ff73"/><stop offset=".217" stop-color="#66ff67"/><stop offset=".458" stop-color="#fffd50"/><stop offset=".558" stop-color="#ffc235"/><stop offset=".675" stop-color="#ff9420"/><stop offset=".825" stop-color="#ff6c0d"/><stop offset="1" stop-color="#ff4c00"/></linearGradient>
<linearGradient id="i59" gradientUnits="userSpaceOnUse" x1="1381.7" x2="1627.2"><stop offset="0" stop-color="#00ff79"/><stop offset=".049" stop-color="#11ff76"/><stop offset=".213" stop-color="#67ff6a"/><stop offset=".328" stop-color="#adff60"/><stop offset=".443" stop-color="#fdff55"/><stop offset=".549" stop-color="#ffc037"/><stop offset=".664" stop-color="#ff9221"/><stop offset=".811" stop-color="#ff6a0f"/><stop offset="1" stop-color="#ff4900"/></linearGradient>
<linearGradient id="i60" gradientUnits="userSpaceOnUse" x1="1381.0" x2="1630.5"><stop offset="0" stop-color="#00ff7d"/><stop offset=".048" stop-color="#11ff79"/><stop offset=".210" stop-color="#68ff6d"/><stop offset=".435" stop-color="#fffe58"/><stop offset=".540" stop-color="#ffbe39"/><stop offset=".661" stop-color="#ff8e22"/><stop offset=".815" stop-color="#ff650e"/><stop offset="1" stop-color="#ff4500"/></linearGradient>
<linearGradient id="i61" gradientUnits="userSpaceOnUse" x1="1380.2" x2="1633.8"><stop offset="0" stop-color="#00ff80"/><stop offset=".040" stop-color="#0dff7d"/><stop offset=".190" stop-color="#5fff72"/><stop offset=".429" stop-color="#fffb5b"/><stop offset=".532" stop-color="#ffbc3b"/><stop offset=".651" stop-color="#ff8c23"/><stop offset=".810" stop-color="#ff620f"/><stop offset="1" stop-color="#ff4200"/></linearGradient>
<linearGradient id="i62" gradientUnits="userSpaceOnUse" x1="1379.5" x2="1637.2"><stop offset="0" stop-color="#00ff83"/><stop offset=".047" stop-color="#11ff80"/><stop offset=".195" stop-color="#65ff75"/><stop offset=".305" stop-color="#adff6b"/><stop offset=".414" stop-color="#ffff61"/><stop offset=".516" stop-color="#ffbe3f"/><stop offset=".641" stop-color="#ff8a25"/><stop offset=".797" stop-color="#ff6110"/><stop offset="1" stop-color="#ff3f00"/></linearGradient>
<linearGradient id="i63" gradientUnits="userSpaceOnUse" x1="1378.8" x2="1640.5"><stop offset="0" stop-color="#00ff86"/><stop offset=".038" stop-color="#0dff83"/><stop offset=".185" stop-color="#61ff79"/><stop offset=".408" stop-color="#fffc63"/><stop offset=".508" stop-color="#ffbb41"/><stop offset=".638" stop-color="#ff8626"/><stop offset=".800" stop-color="#ff5c10"/><stop offset="1" stop-color="#ff3c00"/></linearGradient>
<linearGradient id="i64" gradientUnits="userSpaceOnUse" x1="1378.0" x2="1643.8"><stop offset="0" stop-color="#00ff89"/><stop offset=".045" stop-color="#12ff86"/><stop offset=".189" stop-color="#67ff7c"/><stop offset=".295" stop-color="#b0ff73"/><stop offset=".394" stop-color="#feff69"/><stop offset=".500" stop-color="#ffb944"/><stop offset=".629" stop-color="#ff8427"/><stop offset=".795" stop-color="#ff5910"/><stop offset="1" stop-color="#ff3800"/></linearGradient>
<linearGradient id="i65" gradientUnits="userSpaceOnUse" x1="1377.3" x2="1647.1"><stop offset="0" stop-color="#00ff8d"/><stop offset=".037" stop-color="#0eff8a"/><stop offset=".179" stop-color="#63ff80"/><stop offset=".388" stop-color="#fffd6c"/><stop offset=".493" stop-color="#ffb746"/><stop offset=".619" stop-color="#ff8229"/><stop offset=".784" stop-color="#ff5812"/><stop offset="1" stop-color="#ff3600"/></linearGradient>
<linearGradient id="i66" gradientUnits="userSpaceOnUse" x1="1376.6" x2="1650.4"><stop offset="0" stop-color="#00ff90"/><stop offset=".037" stop-color="#0eff8e"/><stop offset=".176" stop-color="#64ff84"/><stop offset=".279" stop-color="#aeff7b"/><stop offset=".375" stop-color="#fdff72"/><stop offset=".478" stop-color="#ffb94a"/><stop offset=".610" stop-color="#ff812b"/><stop offset=".779" stop-color="#ff5512"/><stop offset="1" stop-color="#ff3300"/></linearGradient>
<linearGradient id="i67" gradientUnits="userSpaceOnUse" x1="1375.8" x2="1653.7"><stop offset="0" stop-color="#00ff93"/><stop offset=".036" stop-color="#0eff91"/><stop offset=".174" stop-color="#65ff87"/><stop offset=".370" stop-color="#fffe75"/><stop offset=".471" stop-color="#ffb74c"/><stop offset=".609" stop-color="#ff7d2b"/><stop offset=".783" stop-color="#ff5112"/><stop offset="1" stop-color="#ff3000"/></linearGradient>
<linearGradient id="i68" gradientUnits="userSpaceOnUse" x1="1375.1" x2="1657.0"><stop offset="0" stop-color="#00ff97"/><stop offset=".029" stop-color="#0aff95"/><stop offset=".164" stop-color="#61ff8c"/><stop offset=".364" stop-color="#fffb78"/><stop offset=".464" stop-color="#ffb44e"/><stop offset=".600" stop-color="#ff7b2d"/><stop offset=".771" stop-color="#ff5013"/><stop offset="1" stop-color="#ff2d00"/></linearGradient>
<linearGradient id="i69" gradientUnits="userSpaceOnUse" x1="1374.4" x2="1660.3"><stop offset="0" stop-color="#00ff9a"/><stop offset=".035" stop-color="#0eff98"/><stop offset=".169" stop-color="#67ff8f"/><stop offset=".261" stop-color="#aeff87"/><stop offset=".352" stop-color="#ffff7f"/><stop offset=".401" stop-color="#ffd666"/><stop offset=".458" stop-color="#ffb251"/><stop offset=".592" stop-color="#ff792e"/><stop offset=".768" stop-color="#ff4d14"/><stop offset="1" stop-color="#ff2b00"/></linearGradient>
<linearGradient id="i70" gradientUnits="userSpaceOnUse" x1="1373.7" x2="1663.7"><stop offset="0" stop-color="#00ff9e"/><stop offset=".034" stop-color="#0eff9c"/><stop offset=".166" stop-color="#67ff93"/><stop offset=".345" stop-color="#fffe83"/><stop offset=".393" stop-color="#ffd56a"/><stop offset=".448" stop-color="#ffb254"/><stop offset=".586" stop-color="#ff772f"/><stop offset=".766" stop-color="#ff4a14"/><stop offset="1" stop-color="#ff2800"/></linearGradient>
<linearGradient id="i71" gradientUnits="userSpaceOnUse" x1="1372.9" x2="1667.0"><stop offset="0" stop-color="#00ffa2"/><stop offset=".020" stop-color="#06ffa0"/><stop offset=".150" stop-color="#5eff98"/><stop offset=".340" stop-color="#fffb86"/><stop offset=".388" stop-color="#ffd36c"/><stop offset=".442" stop-color="#ffaf56"/><stop offset=".578" stop-color="#ff7531"/><stop offset=".762" stop-color="#ff4714"/><stop offset="1" stop-color="#ff2600"/></linearGradient>
<linearGradient id="i72" gradientUnits="userSpaceOnUse" x1="1372.2" x2="1670.3"><stop offset="0" stop-color="#00ffa5"/><stop offset=".027" stop-color="#0affa4"/><stop offset=".154" stop-color="#64ff9b"/><stop offset=".242" stop-color="#acff95"/><stop offset=".329" stop-color="#ffff8d"/><stop offset=".376" stop-color="#ffd572"/><stop offset=".436" stop-color="#ffad58"/><stop offset=".570" stop-color="#ff7333"/><stop offset=".752" stop-color="#ff4615"/><stop offset="1" stop-color="#ff2300"/></linearGradient>
<linearGradient id="i73" gradientUnits="userSpaceOnUse" x1="1371.5" x2="1673.6"><stop offset="0" stop-color="#00ffa9"/><stop offset=".026" stop-color="#0affa8"/><stop offset=".146" stop-color="#60ffa0"/><stop offset=".325" stop-color="#fffc90"/><stop offset=".371" stop-color="#ffd375"/><stop offset=".430" stop-color="#ffab5a"/><stop offset=".570" stop-color="#ff6f33"/><stop offset=".755" stop-color="#ff4215"/><stop offset="1" stop-color="#ff2100"/></linearGradient>
<linearGradient id="i74" gradientUnits="userSpaceOnUse" x1="1370.7" x2="1676.9"><stop offset="0" stop-color="#00ffad"/><stop offset=".033" stop-color="#0fffab"/><stop offset=".150" stop-color="#66ffa4"/><stop offset=".235" stop-color="#b0ff9d"/><stop offset=".314" stop-color="#feff97"/><stop offset=".366" stop-color="#ffd077"/><stop offset=".418" stop-color="#ffad5f"/><stop offset=".562" stop-color="#ff6e34"/><stop offset=".752" stop-color="#ff4016"/><stop offset="1" stop-color="#ff1f00"/></linearGradient>
<linearGradient id="i75" gradientUnits="userSpaceOnUse" x1="1370.0" x2="1680.2"><stop offset="0" stop-color="#00ffb1"/><stop offset=".026" stop-color="#0affb0"/><stop offset=".142" stop-color="#62ffa8"/><stop offset=".310" stop-color="#fffd9a"/><stop offset=".355" stop-color="#ffd37d"/><stop offset=".413" stop-color="#ffaa61"/><stop offset=".555" stop-color="#ff6c36"/><stop offset=".742" stop-color="#ff3f17"/><stop offset="1" stop-color="#ff1c00"/></linearGradient>
<linearGradient id="i76" gradientUnits="userSpaceOnUse" x1="1369.3" x2="1683.5"><stop offset="0" stop-color="#00ffb5"/><stop offset=".019" stop-color="#06ffb4"/><stop offset=".134" stop-color="#5dffad"/><stop offset=".306" stop-color="#fffa9d"/><stop offset=".357" stop-color="#ffcb7c"/><stop offset=".414" stop-color="#ffa461"/><stop offset=".554" stop-color="#ff6836"/><stop offset=".745" stop-color="#ff3b16"/><stop offset="1" stop-color="#ff1a00"/></linearGradient>
<linearGradient id="i77" gradientUnits="userSpaceOnUse" x1="1368.5" x2="1686.8"><stop offset="0" stop-color="#00ffb9"/><stop offset=".025" stop-color="#0affb8"/><stop offset=".138" stop-color="#64ffb1"/><stop offset=".296" stop-color="#fffea5"/><stop offset=".340" stop-color="#ffd386"/><stop offset=".396" stop-color="#ffaa68"/><stop offset=".465" stop-color="#ff854e"/><stop offset=".541" stop-color="#ff6939"/><stop offset=".736" stop-color="#ff3a18"/><stop offset="1" stop-color="#ff1800"/></linearGradient>
<linearGradient id="i78" gradientUnits="userSpaceOnUse" x1="1367.8" x2="1690.2"><stop offset="0" stop-color="#00ffbd"/><stop offset=".019" stop-color="#06ffbc"/><stop offset=".130" stop-color="#5fffb6"/><stop offset=".292" stop-color="#fffba8"/><stop offset=".342" stop-color="#ffcb85"/><stop offset=".398" stop-color="#ffa468"/><stop offset=".540" stop-color="#ff6539"/><stop offset=".733" stop-color="#ff3818"/><stop offset="1" stop-color="#ff1600"/></linearGradient>
<linearGradient id="i79" gradientUnits="userSpaceOnUse" x1="1367.1" x2="1693.5"><stop offset="0" stop-color="#00ffc2"/><stop offset=".025" stop-color="#0bffc0"/><stop offset=".135" stop-color="#66ffbb"/><stop offset=".209" stop-color="#adffb6"/><stop offset=".282" stop-color="#ffffb1"/><stop offset=".331" stop-color="#ffcd8b"/><stop offset=".387" stop-color="#ffa56d"/><stop offset=".454" stop-color="#ff8152"/><stop offset=".528" stop-color="#ff653c"/><stop offset=".724" stop-color="#ff3619"/><stop offset="1" stop-color="#ff1400"/></linearGradient>
<linearGradient id="i80" gradientUnits="userSpaceOnUse" x1="1366.3" x2="1696.8"><stop offset="0" stop-color="#00ffc6"/><stop offset=".012" stop-color="#01ffc5"/><stop offset=".121" stop-color="#5cffc0"/><stop offset=".279" stop-color="#fffcb4"/><stop offset=".327" stop-color="#ffcb8e"/><stop offset=".382" stop-color="#ffa36f"/><stop offset=".448" stop-color="#ff7f54"/><stop offset=".527" stop-color="#ff623d"/><stop offset=".727" stop-color="#ff3319"/><stop offset="1" stop-color="#ff1200"/></linearGradient>
<linearGradient id="i81" gradientUnits="userSpaceOnUse" x1="1365.6" x2="1700.1"><stop offset="0" stop-color="#00ffca"/><stop offset=".018" stop-color="#06ffca"/><stop offset=".126" stop-color="#63ffc5"/><stop offset=".198" stop-color="#abffc1"/><stop offset=".269" stop-color="#feffbc"/><stop offset=".317" stop-color="#ffcd95"/><stop offset=".371" stop-color="#ffa474"/><stop offset=".437" stop-color="#ff8058"/><stop offset=".515" stop-color="#ff6240"/><stop offset=".719" stop-color="#ff321a"/><stop offset="1" stop-color="#ff1000"/></linearGradient>
<linearGradient id="i82" gradientUnits="userSpaceOnUse" x1="1364.9" x2="1703.4"><stop offset="0" stop-color="#00ffcf"/><stop offset=".012" stop-color="#01ffce"/><stop offset=".118" stop-color="#5effca"/><stop offset=".266" stop-color="#fffcc0"/><stop offset=".314" stop-color="#ffca97"/><stop offset=".367" stop-color="#ffa277"/><stop offset=".432" stop-color="#ff7e5a"/><stop offset=".515" stop-color="#ff5e40"/><stop offset=".716" stop-color="#ff301a"/><stop offset="1" stop-color="#ff0e00"/></linearGradient>
<linearGradient id="i83" gradientUnits="userSpaceOnUse" x1="1364.2" x2="1706.7"><stop offset="0" stop-color="#00ffd3"/><stop offset=".012" stop-color="#02ffd3"/><stop offset=".111" stop-color="#59ffcf"/><stop offset=".187" stop-color="#a9ffcc"/><stop offset=".257" stop-color="#fdffc8"/><stop offset=".263" stop-color="#fff9c3"/><stop offset=".310" stop-color="#ffc89a"/><stop offset=".363" stop-color="#ffa079"/><stop offset=".427" stop-color="#ff7c5c"/><stop offset=".509" stop-color="#ff5d41"/><stop offset=".713" stop-color="#ff2e1a"/><stop offset="1" stop-color="#ff0c00"/></linearGradient>
<linearGradient id="i84" gradientUnits="userSpaceOnUse" x1="1363.4" x2="1710.0"><stop offset="0" stop-color="#00ffd8"/><stop offset=".017" stop-color="#06ffd8"/><stop offset=".116" stop-color="#60ffd4"/><stop offset=".254" stop-color="#fffdcc"/><stop offset=".301" stop-color="#ffcaa1"/><stop offset=".358" stop-color="#ff9d7b"/><stop offset=".422" stop-color="#ff7a5e"/><stop offset=".503" stop-color="#ff5b43"/><stop offset=".711" stop-color="#ff2c1b"/><stop offset="1" stop-color="#ff0b00"/></linearGradient>
<linearGradient id="i85" gradientUnits="userSpaceOnUse" x1="1362.7" x2="1713.3"><stop offset="0" stop-color="#00ffdd"/><stop offset=".011" stop-color="#02ffdd"/><stop offset=".109" stop-color="#5cffd9"/><stop offset=".251" stop-color="#fffad0"/><stop offset=".297" stop-color="#ffc7a4"/><stop offset=".354" stop-color="#ff9b7d"/><stop offset=".417" stop-color="#ff785f"/><stop offset=".497" stop-color="#ff5945"/><stop offset=".703" stop-color="#ff2a1c"/><stop offset="1" stop-color="#ff0900"/></linearGradient>
<linearGradient id="i86" gradientUnits="userSpaceOnUse" x1="1362.0" x2="1716.7"><stop offset="0" stop-color="#00ffe2"/><stop offset=".017" stop-color="#06ffe1"/><stop offset=".113" stop-color="#62ffdf"/><stop offset=".181" stop-color="#afffdc"/><stop offset=".243" stop-color="#fffeda"/><stop offset=".288" stop-color="#ffcaab"/><stop offset=".345" stop-color="#ff9c83"/><stop offset=".412" stop-color="#ff7661"/><stop offset=".492" stop-color="#ff5846"/><stop offset=".701" stop-color="#ff281c"/><stop offset="1" stop-color="#ff0700"/></linearGradient>
<linearGradient id="i87" gradientUnits="userSpaceOnUse" x1="1361.2" x2="1720.0"><stop offset="0" stop-color="#00ffe7"/><stop offset=".011" stop-color="#02ffe7"/><stop offset=".106" stop-color="#5effe4"/><stop offset=".240" stop-color="#fffbdd"/><stop offset=".285" stop-color="#ffc7ae"/><stop offset=".341" stop-color="#ff9a85"/><stop offset=".408" stop-color="#ff7463"/><stop offset=".486" stop-color="#ff5648"/><stop offset=".698" stop-color="#ff261d"/><stop offset="1" stop-color="#ff0600"/></linearGradient>
<linearGradient id="i88" gradientUnits="userSpaceOnUse" x1="1360.5" x2="1723.3"><stop offset="0" stop-color="#00ffec"/><stop offset=".017" stop-color="#07ffec"/><stop offset=".110" stop-color="#65ffea"/><stop offset=".171" stop-color="#acffe9"/><stop offset=".232" stop-color="#ffffe7"/><stop offset=".276" stop-color="#ffcab6"/><stop offset=".331" stop-color="#ff9b8b"/><stop offset=".398" stop-color="#ff7568"/><stop offset=".481" stop-color="#ff5449"/><stop offset=".691" stop-color="#ff251e"/><stop offset="1" stop-color="#ff0400"/></linearGradient>
<linearGradient id="i89" gradientUnits="userSpaceOnUse" x1="1359.8" x2="1726.6"><stop offset="0" stop-color="#00fff1"/><stop offset=".011" stop-color="#02fff1"/><stop offset=".104" stop-color="#60fff0"/><stop offset=".230" stop-color="#fffceb"/><stop offset=".273" stop-color="#ffc7b9"/><stop offset=".328" stop-color="#ff998d"/><stop offset=".393" stop-color="#ff736a"/><stop offset=".475" stop-color="#ff534b"/><stop offset=".689" stop-color="#ff231e"/><stop offset="1" stop-color="#ff0200"/></linearGradient>
<linearGradient id="i90" gradientUnits="userSpaceOnUse" x1="1359.0" x2="1729.9"><stop offset="0" stop-color="#00fff6"/><stop offset=".011" stop-color="#02fff6"/><stop offset=".097" stop-color="#5bfff6"/><stop offset=".162" stop-color="#aafff5"/><stop offset=".222" stop-color="#fdfff5"/><stop offset=".227" stop-color="#fff9ee"/><stop offset=".276" stop-color="#ffbfb6"/><stop offset=".330" stop-color="#ff938c"/><stop offset=".395" stop-color="#ff6f69"/><stop offset=".476" stop-color="#ff4f4b"/><stop offset=".686" stop-color="#ff211e"/><stop offset="1" stop-color="#ff0100"/></linearGradient>
<linearGradient id="i91" gradientUnits="userSpaceOnUse" x1="1358.3" x2="1732.0"><stop offset="0" stop-color="#00fffc"/><stop offset=".011" stop-color="#02fffc"/><stop offset=".097" stop-color="#5cfffc"/><stop offset=".220" stop-color="#fffcf9"/><stop offset=".269" stop-color="#ffc0be"/><stop offset=".323" stop-color="#ff9492"/><stop offset=".387" stop-color="#ff6f6d"/><stop offset=".468" stop-color="#ff4f4e"/><stop offset=".683" stop-color="#ff201f"/><stop offset="1" stop-color="#ff0000"/></linearGradient>
<linearGradient id="i92" gradientUnits="userSpaceOnUse" x1="1357.6" x2="1730.4"><stop offset="0" stop-color="#00fdff"/><stop offset=".011" stop-color="#02fdff"/><stop offset=".097" stop-color="#5cfcff"/><stop offset=".156" stop-color="#a5fcff"/><stop offset=".220" stop-color="#fffafd"/><stop offset=".269" stop-color="#ffbec1"/><stop offset=".323" stop-color="#ff9294"/><stop offset=".387" stop-color="#ff6d6f"/><stop offset=".468" stop-color="#ff4e50"/><stop offset=".688" stop-color="#ff1e20"/><stop offset="1" stop-color="#ff0000"/></linearGradient>
<linearGradient id="i93" gradientUnits="userSpaceOnUse" x1="1356.8" x2="1725.7"><stop offset="0" stop-color="#00f7ff"/><stop offset=".011" stop-color="#02f7ff"/><stop offset=".092" stop-color="#55f6ff"/><stop offset=".158" stop-color="#a3f5ff"/><stop offset=".223" stop-color="#fdf4ff"/><stop offset=".228" stop-color="#ffeef9"/><stop offset=".272" stop-color="#ffbbc4"/><stop offset=".326" stop-color="#ff8f97"/><stop offset=".391" stop-color="#ff6b71"/><stop offset=".473" stop-color="#ff4c51"/><stop offset=".685" stop-color="#ff1f22"/><stop offset="1" stop-color="#ff0002"/></linearGradient>
<linearGradient id="i94" gradientUnits="userSpaceOnUse" x1="1356.1" x2="1720.9"><stop offset="0" stop-color="#00f2ff"/><stop offset=".011" stop-color="#02f2ff"/><stop offset=".104" stop-color="#60f0ff"/><stop offset=".231" stop-color="#ffebfc"/><stop offset=".275" stop-color="#ffb9c7"/><stop offset=".330" stop-color="#ff8d99"/><stop offset=".396" stop-color="#ff6973"/><stop offset=".478" stop-color="#ff4b53"/><stop offset=".692" stop-color="#ff1e24"/><stop offset="1" stop-color="#ff0003"/></linearGradient>
<linearGradient id="i95" gradientUnits="userSpaceOnUse" x1="1355.4" x2="1716.1"><stop offset="0" stop-color="#00edff"/><stop offset=".017" stop-color="#07ecff"/><stop offset=".111" stop-color="#65eaff"/><stop offset=".172" stop-color="#ade9ff"/><stop offset=".233" stop-color="#ffe7ff"/><stop offset=".278" stop-color="#ffb6ca"/><stop offset=".333" stop-color="#ff8b9c"/><stop offset=".400" stop-color="#ff6775"/><stop offset=".483" stop-color="#ff4955"/><stop offset=".694" stop-color="#ff1d26"/><stop offset="1" stop-color="#ff0005"/></linearGradient>
<linearGradient id="i96" gradientUnits="userSpaceOnUse" x1="1354.7" x2="1711.3"><stop offset="0" stop-color="#00e8ff"/><stop offset=".011" stop-color="#02e7ff"/><stop offset=".107" stop-color="#5ee5ff"/><stop offset=".242" stop-color="#ffddfb"/><stop offset=".287" stop-color="#ffaec7"/><stop offset=".343" stop-color="#ff859a"/><stop offset=".410" stop-color="#ff6375"/><stop offset=".489" stop-color="#ff4756"/><stop offset=".697" stop-color="#ff1d28"/><stop offset="1" stop-color="#ff0007"/></linearGradient>
<linearGradient id="i97" gradientUnits="userSpaceOnUse" x1="1353.9" x2="1706.6"><stop offset="0" stop-color="#00e3ff"/><stop offset=".017" stop-color="#06e2ff"/><stop offset=".114" stop-color="#63dfff"/><stop offset=".182" stop-color="#afddff"/><stop offset=".244" stop-color="#ffd9fe"/><stop offset=".290" stop-color="#ffabca"/><stop offset=".347" stop-color="#ff839c"/><stop offset=".415" stop-color="#ff6177"/><stop offset=".494" stop-color="#ff4658"/><stop offset=".705" stop-color="#ff1c29"/><stop offset="1" stop-color="#ff0008"/></linearGradient>
<linearGradient id="i98" gradientUnits="userSpaceOnUse" x1="1353.2" x2="1701.8"><stop offset="0" stop-color="#00deff"/><stop offset=".011" stop-color="#02ddff"/><stop offset=".109" stop-color="#5cdaff"/><stop offset=".253" stop-color="#ffcffa"/><stop offset=".299" stop-color="#ffa3c7"/><stop offset=".356" stop-color="#ff7d9b"/><stop offset=".420" stop-color="#ff5f79"/><stop offset=".500" stop-color="#ff445a"/><stop offset=".707" stop-color="#ff1b2b"/><stop offset="1" stop-color="#ff000a"/></linearGradient>
<linearGradient id="i99" gradientUnits="userSpaceOnUse" x1="1352.5" x2="1697.0"><stop offset="0" stop-color="#00d9ff"/><stop offset=".017" stop-color="#06d8ff"/><stop offset=".116" stop-color="#60d4ff"/><stop offset=".256" stop-color="#ffccfd"/><stop offset=".302" stop-color="#ffa1ca"/><stop offset=".360" stop-color="#ff7b9d"/><stop offset=".424" stop-color="#ff5d7b"/><stop offset=".506" stop-color="#ff435b"/><stop offset=".709" stop-color="#ff1b2d"/><stop offset="1" stop-color="#ff000c"/></linearGradient>
<linearGradient id="i100" gradientUnits="userSpaceOnUse" x1="1351.7" x2="1692.2"><stop offset="0" stop-color="#00d4ff"/><stop offset=".012" stop-color="#02d4ff"/><stop offset=".112" stop-color="#5acfff"/><stop offset=".188" stop-color="#a9ccff"/><stop offset=".259" stop-color="#fdc8ff"/><stop offset=".265" stop-color="#ffc3f9"/><stop offset=".312" stop-color="#ff9ac8"/><stop offset=".365" stop-color="#ff78a0"/><stop offset=".429" stop-color="#ff5b7d"/><stop offset=".512" stop-color="#ff415d"/><stop offset=".718" stop-color="#ff1a2e"/><stop offset="1" stop-color="#ff000d"/></linearGradient>
<linearGradient id="i101" gradientUnits="userSpaceOnUse" x1="1351.0" x2="1687.5"><stop offset="0" stop-color="#00cfff"/><stop offset=".012" stop-color="#01cfff"/><stop offset=".119" stop-color="#5ecaff"/><stop offset=".268" stop-color="#ffbffc"/><stop offset=".315" stop-color="#ff97ca"/><stop offset=".369" stop-color="#ff76a2"/><stop offset=".435" stop-color="#ff597e"/><stop offset=".518" stop-color="#ff3f5f"/><stop offset=".720" stop-color="#ff1a30"/><stop offset="1" stop-color="#ff000f"/></linearGradient>
<linearGradient id="i102" gradientUnits="userSpaceOnUse" x1="1350.3" x2="1682.7"><stop offset="0" stop-color="#00cbff"/><stop offset=".018" stop-color="#06caff"/><stop offset=".127" stop-color="#63c5ff"/><stop offset=".199" stop-color="#abc1ff"/><stop offset=".271" stop-color="#febcff"/><stop offset=".319" stop-color="#ff94cd"/><stop offset=".373" stop-color="#ff74a4"/><stop offset=".440" stop-color="#ff5780"/><stop offset=".518" stop-color="#ff3f62"/><stop offset=".717" stop-color="#ff1a33"/><stop offset="1" stop-color="#ff0011"/></linearGradient>
<linearGradient id="i103" gradientUnits="userSpaceOnUse" x1="1349.5" x2="1677.9"><stop offset="0" stop-color="#00c7ff"/><stop offset=".012" stop-color="#01c6ff"/><stop offset=".122" stop-color="#5cc0ff"/><stop offset=".280" stop-color="#ffb3fb"/><stop offset=".329" stop-color="#ff8dcb"/><stop offset=".384" stop-color="#ff6fa3"/><stop offset=".451" stop-color="#ff5380"/><stop offset=".524" stop-color="#ff3e64"/><stop offset=".726" stop-color="#ff1934"/><stop offset="1" stop-color="#ff0013"/></linearGradient>
<linearGradient id="i104" gradientUnits="userSpaceOnUse" x1="1348.8" x2="1673.2"><stop offset="0" stop-color="#00c2ff"/><stop offset=".019" stop-color="#06c1ff"/><stop offset=".130" stop-color="#61bbff"/><stop offset=".210" stop-color="#aeb6ff"/><stop offset=".284" stop-color="#ffb0ff"/><stop offset=".333" stop-color="#ff8bcd"/><stop offset=".389" stop-color="#ff6ca5"/><stop offset=".457" stop-color="#ff5182"/><stop offset=".531" stop-color="#ff3c65"/><stop offset=".728" stop-color="#ff1937"/><stop offset="1" stop-color="#ff0015"/></linearGradient>
<linearGradient id="i105" gradientUnits="userSpaceOnUse" x1="1348.1" x2="1668.4"><stop offset="0" stop-color="#00beff"/><stop offset=".019" stop-color="#06bdff"/><stop offset=".131" stop-color="#60b7ff"/><stop offset=".294" stop-color="#ffa8fb"/><stop offset=".338" stop-color="#ff88d0"/><stop offset=".394" stop-color="#ff6aa7"/><stop offset=".462" stop-color="#ff4f83"/><stop offset=".538" stop-color="#ff3a67"/><stop offset=".731" stop-color="#ff1839"/><stop offset="1" stop-color="#ff0017"/></linearGradient>
<linearGradient id="i106" gradientUnits="userSpaceOnUse" x1="1347.3" x2="1663.6"><stop offset="0" stop-color="#00baff"/><stop offset=".025" stop-color="#0ab8ff"/><stop offset=".139" stop-color="#64b2ff"/><stop offset=".297" stop-color="#ffa5fe"/><stop offset=".342" stop-color="#ff86d3"/><stop offset=".399" stop-color="#ff68aa"/><stop offset=".468" stop-color="#ff4e85"/><stop offset=".544" stop-color="#ff3969"/><stop offset=".734" stop-color="#ff183b"/><stop offset="1" stop-color="#ff0019"/></linearGradient>
<linearGradient id="i107" gradientUnits="userSpaceOnUse" x1="1346.6" x2="1658.8"><stop offset="0" stop-color="#00b6ff"/><stop offset=".019" stop-color="#06b5ff"/><stop offset=".135" stop-color="#5eadff"/><stop offset=".218" stop-color="#a8a8ff"/><stop offset=".301" stop-color="#fda1ff"/><stop offset=".308" stop-color="#ff9dfa"/><stop offset=".353" stop-color="#ff7fd0"/><stop offset=".410" stop-color="#ff63a8"/><stop offset=".551" stop-color="#ff376a"/><stop offset=".744" stop-color="#ff173d"/><stop offset="1" stop-color="#ff001b"/></linearGradient>
<linearGradient id="i108" gradientUnits="userSpaceOnUse" x1="1345.9" x2="1654.1"><stop offset="0" stop-color="#00b2ff"/><stop offset=".026" stop-color="#0ab0ff"/><stop offset=".143" stop-color="#62a9ff"/><stop offset=".312" stop-color="#ff9afd"/><stop offset=".357" stop-color="#ff7dd3"/><stop offset=".416" stop-color="#ff61aa"/><stop offset=".558" stop-color="#ff356c"/><stop offset=".747" stop-color="#ff163f"/><stop offset="1" stop-color="#ff001d"/></linearGradient>
<linearGradient id="i109" gradientUnits="userSpaceOnUse" x1="1345.2" x2="1649.3"><stop offset="0" stop-color="#00aeff"/><stop offset=".033" stop-color="#0facff"/><stop offset=".151" stop-color="#66a4ff"/><stop offset=".237" stop-color="#b09dff"/><stop offset=".316" stop-color="#fe96ff"/><stop offset=".368" stop-color="#ff76d0"/><stop offset=".421" stop-color="#ff5ead"/><stop offset=".559" stop-color="#ff3570"/><stop offset=".750" stop-color="#ff1641"/><stop offset="1" stop-color="#ff0020"/></linearGradient>
<linearGradient id="i110" gradientUnits="userSpaceOnUse" x1="1344.4" x2="1644.5"><stop offset="0" stop-color="#00aaff"/><stop offset=".020" stop-color="#06a8ff"/><stop offset=".147" stop-color="#60a0ff"/><stop offset=".327" stop-color="#ff8ffc"/><stop offset=".373" stop-color="#ff74d3"/><stop offset=".427" stop-color="#ff5caf"/><stop offset=".567" stop-color="#ff3472"/><stop offset=".753" stop-color="#ff1544"/><stop offset="1" stop-color="#ff0022"/></linearGradient>
<linearGradient id="i111" gradientUnits="userSpaceOnUse" x1="1343.7" x2="1639.7"><stop offset="0" stop-color="#00a6ff"/><stop offset=".027" stop-color="#0aa4ff"/><stop offset=".155" stop-color="#649bff"/><stop offset=".243" stop-color="#ac94ff"/><stop offset=".331" stop-color="#ff8cff"/><stop offset=".378" stop-color="#ff71d5"/><stop offset=".432" stop-color="#ff5ab1"/><stop offset=".574" stop-color="#ff3273"/><stop offset=".757" stop-color="#ff1546"/><stop offset="1" stop-color="#ff0024"/></linearGradient>
<linearGradient id="i112" gradientUnits="userSpaceOnUse" x1="1343.0" x2="1635.0"><stop offset="0" stop-color="#00a2ff"/><stop offset=".028" stop-color="#0aa0ff"/><stop offset=".159" stop-color="#6497ff"/><stop offset=".248" stop-color="#ac90ff"/><stop offset=".338" stop-color="#ff88ff"/><stop offset=".386" stop-color="#ff6ed6"/><stop offset=".441" stop-color="#ff57b2"/><stop offset=".579" stop-color="#ff3176"/><stop offset=".759" stop-color="#ff1549"/><stop offset="1" stop-color="#ff0027"/></linearGradient>
<linearGradient id="i113" gradientUnits="userSpaceOnUse" x1="1342.2" x2="1630.2"><stop offset="0" stop-color="#009eff"/><stop offset=".021" stop-color="#069dff"/><stop offset=".154" stop-color="#5e94ff"/><stop offset=".350" stop-color="#ff81fc"/><stop offset=".399" stop-color="#ff68d3"/><stop offset=".455" stop-color="#ff52b0"/><stop offset=".587" stop-color="#ff2f77"/><stop offset=".769" stop-color="#ff134a"/><stop offset="1" stop-color="#ff0029"/></linearGradient>
<linearGradient id="i114" gradientUnits="userSpaceOnUse" x1="1341.5" x2="1625.4"><stop offset="0" stop-color="#009bff"/><stop offset=".035" stop-color="#0e98ff"/><stop offset=".170" stop-color="#678fff"/><stop offset=".355" stop-color="#ff7efe"/><stop offset=".404" stop-color="#ff65d6"/><stop offset=".461" stop-color="#ff50b2"/><stop offset=".596" stop-color="#ff2e79"/><stop offset=".773" stop-color="#ff134d"/><stop offset="1" stop-color="#ff002c"/></linearGradient>
<linearGradient id="i115" gradientUnits="userSpaceOnUse" x1="1340.8" x2="1620.6"><stop offset="0" stop-color="#0097ff"/><stop offset=".029" stop-color="#0a95ff"/><stop offset=".165" stop-color="#618cff"/><stop offset=".367" stop-color="#ff77fb"/><stop offset=".468" stop-color="#ff4eb4"/><stop offset=".604" stop-color="#ff2c7b"/><stop offset=".777" stop-color="#ff1250"/><stop offset="1" stop-color="#ff002e"/></linearGradient>
<linearGradient id="i116" gradientUnits="userSpaceOnUse" x1="1340.0" x2="1615.9"><stop offset="0" stop-color="#0094ff"/><stop offset=".036" stop-color="#0e91ff"/><stop offset=".175" stop-color="#6587ff"/><stop offset=".372" stop-color="#ff74fe"/><stop offset=".474" stop-color="#ff4bb6"/><stop offset=".606" stop-color="#ff2c7f"/><stop offset=".781" stop-color="#ff1252"/><stop offset="1" stop-color="#ff0031"/></linearGradient>
<linearGradient id="i117" gradientUnits="userSpaceOnUse" x1="1339.3" x2="1611.1"><stop offset="0" stop-color="#0090ff"/><stop offset=".037" stop-color="#0e8eff"/><stop offset=".178" stop-color="#6483ff"/><stop offset=".281" stop-color="#af7bff"/><stop offset=".378" stop-color="#fe71ff"/><stop offset=".481" stop-color="#ff49b9"/><stop offset=".615" stop-color="#ff2a81"/><stop offset=".785" stop-color="#ff1155"/><stop offset="1" stop-color="#ff0034"/></linearGradient>
<linearGradient id="i118" gradientUnits="userSpaceOnUse" x1="1338.6" x2="1606.3"><stop offset="0" stop-color="#008dff"/><stop offset=".038" stop-color="#0e8aff"/><stop offset=".180" stop-color="#6380ff"/><stop offset=".391" stop-color="#ff6bfd"/><stop offset=".496" stop-color="#ff45b7"/><stop offset=".624" stop-color="#ff2882"/><stop offset=".789" stop-color="#ff1158"/><stop offset="1" stop-color="#ff0037"/></linearGradient>
<linearGradient id="i119" gradientUnits="userSpaceOnUse" x1="1337.8" x2="1601.5"><stop offset="0" stop-color="#008aff"/><stop offset=".046" stop-color="#1286ff"/><stop offset=".191" stop-color="#677cff"/><stop offset=".298" stop-color="#b172ff"/><stop offset=".397" stop-color="#ff68ff"/><stop offset=".496" stop-color="#ff45bd"/><stop offset=".626" stop-color="#ff2886"/><stop offset=".794" stop-color="#ff105b"/><stop offset="1" stop-color="#ff003a"/></linearGradient>
<linearGradient id="i120" gradientUnits="userSpaceOnUse" x1="1337.1" x2="1596.8"><stop offset="0" stop-color="#0086ff"/><stop offset=".039" stop-color="#0d84ff"/><stop offset=".186" stop-color="#6179ff"/><stop offset=".411" stop-color="#ff63fc"/><stop offset=".512" stop-color="#ff41bb"/><stop offset=".643" stop-color="#ff2586"/><stop offset=".798" stop-color="#ff105e"/><stop offset="1" stop-color="#ff003d"/></linearGradient>
<linearGradient id="i121" gradientUnits="userSpaceOnUse" x1="1336.4" x2="1592.0"><stop offset="0" stop-color="#0083ff"/><stop offset=".039" stop-color="#0d80ff"/><stop offset=".197" stop-color="#6575ff"/><stop offset=".417" stop-color="#ff60fe"/><stop offset=".520" stop-color="#ff3fbd"/><stop offset=".646" stop-color="#ff248a"/><stop offset=".803" stop-color="#ff0f61"/><stop offset="1" stop-color="#ff0040"/></linearGradient>
<linearGradient id="i122" gradientUnits="userSpaceOnUse" x1="1335.7" x2="1587.2"><stop offset="0" stop-color="#0080ff"/><stop offset=".040" stop-color="#0d7dff"/><stop offset=".192" stop-color="#6072ff"/><stop offset=".432" stop-color="#ff5afb"/><stop offset=".536" stop-color="#ff3abb"/><stop offset=".656" stop-color="#ff238c"/><stop offset=".808" stop-color="#ff0f64"/><stop offset="1" stop-color="#ff0043"/></linearGradient>
<linearGradient id="i123" gradientUnits="userSpaceOnUse" x1="1334.9" x2="1582.4"><stop offset="0" stop-color="#007dff"/><stop offset=".041" stop-color="#0d7aff"/><stop offset=".203" stop-color="#636eff"/><stop offset=".439" stop-color="#ff57fe"/><stop offset=".537" stop-color="#ff3ac2"/><stop offset=".659" stop-color="#ff2290"/><stop offset=".813" stop-color="#ff0e67"/><stop offset="1" stop-color="#ff0047"/></linearGradient>
<linearGradient id="i124" gradientUnits="userSpaceOnUse" x1="1334.2" x2="1577.7"><stop offset="0" stop-color="#007aff"/><stop offset=".050" stop-color="#1176ff"/><stop offset=".215" stop-color="#676aff"/><stop offset=".331" stop-color="#ae60ff"/><stop offset=".446" stop-color="#fe54ff"/><stop offset=".545" stop-color="#ff38c4"/><stop offset=".669" stop-color="#ff2092"/><stop offset=".818" stop-color="#ff0e6a"/><stop offset="1" stop-color="#ff004a"/></linearGradient>
<linearGradient id="i125" gradientUnits="userSpaceOnUse" x1="1333.5" x2="1572.9"><stop offset="0" stop-color="#0077ff"/><stop offset=".042" stop-color="#0d74ff"/><stop offset=".210" stop-color="#6267ff"/><stop offset=".462" stop-color="#ff4ffd"/><stop offset=".563" stop-color="#ff34c2"/><stop offset=".681" stop-color="#ff1f94"/><stop offset=".824" stop-color="#ff0d6d"/><stop offset="1" stop-color="#ff004e"/></linearGradient>
<linearGradient id="i126" gradientUnits="userSpaceOnUse" x1="1332.7" x2="1568.1"><stop offset="0" stop-color="#0074ff"/><stop offset=".051" stop-color="#1170ff"/><stop offset=".222" stop-color="#6564ff"/><stop offset=".350" stop-color="#af58ff"/><stop offset=".470" stop-color="#ff4dff"/><stop offset=".564" stop-color="#ff34c8"/><stop offset=".684" stop-color="#ff1e98"/><stop offset=".829" stop-color="#ff0d71"/><stop offset="1" stop-color="#ff0051"/></linearGradient>
<linearGradient id="i127" gradientUnits="userSpaceOnUse" x1="1332.0" x2="1563.3"><stop offset="0" stop-color="#0071ff"/><stop offset=".052" stop-color="#106dff"/><stop offset=".226" stop-color="#6560ff"/><stop offset=".487" stop-color="#ff47fc"/><stop offset=".583" stop-color="#ff30c6"/><stop offset=".696" stop-color="#ff1c9a"/><stop offset=".835" stop-color="#ff0c74"/><stop offset="1" stop-color="#ff0055"/></linearGradient>
<linearGradient id="i128" gradientUnits="userSpaceOnUse" x1="1331.3" x2="1558.6"><stop offset="0" stop-color="#006eff"/><stop offset=".062" stop-color="#146aff"/><stop offset=".239" stop-color="#685dff"/><stop offset=".496" stop-color="#ff45ff"/><stop offset=".584" stop-color="#ff30cc"/><stop offset=".699" stop-color="#ff1c9e"/><stop offset=".832" stop-color="#ff0c7a"/><stop offset="1" stop-color="#ff0059"/></linearGradient>
<linearGradient id="i129" gradientUnits="userSpaceOnUse" x1="1330.5" x2="1553.8"><stop offset="0" stop-color="#006bff"/><stop offset=".063" stop-color="#1467ff"/><stop offset=".243" stop-color="#675aff"/><stop offset=".505" stop-color="#fd42ff"/><stop offset=".604" stop-color="#ff2cca"/><stop offset=".712" stop-color="#ff1aa0"/><stop offset=".847" stop-color="#ff0b7b"/><stop offset="1" stop-color="#ff005d"/></linearGradient>
<linearGradient id="i130" gradientUnits="userSpaceOnUse" x1="1329.8" x2="1549.0"><stop offset="0" stop-color="#0068ff"/><stop offset=".064" stop-color="#1464ff"/><stop offset=".248" stop-color="#6657ff"/><stop offset=".523" stop-color="#ff3dfe"/><stop offset=".615" stop-color="#ff2acc"/><stop offset=".725" stop-color="#ff18a2"/><stop offset=".853" stop-color="#ff0a7f"/><stop offset="1" stop-color="#ff0062"/></linearGradient>
<linearGradient id="i131" gradientUnits="userSpaceOnUse" x1="1329.1" x2="1544.2"><stop offset="0" stop-color="#0065ff"/><stop offset=".065" stop-color="#1461ff"/><stop offset=".252" stop-color="#6654ff"/><stop offset=".402" stop-color="#b247ff"/><stop offset=".533" stop-color="#fe3bff"/><stop offset=".626" stop-color="#ff27cf"/><stop offset=".729" stop-color="#ff18a7"/><stop offset=".850" stop-color="#ff0a85"/><stop offset="1" stop-color="#ff0066"/></linearGradient>
<linearGradient id="i132" gradientUnits="userSpaceOnUse" x1="1328.3" x2="1539.5"><stop offset="0" stop-color="#0063ff"/><stop offset=".057" stop-color="#105fff"/><stop offset=".257" stop-color="#6551ff"/><stop offset=".552" stop-color="#ff36fd"/><stop offset=".638" stop-color="#ff25d1"/><stop offset=".743" stop-color="#ff16a9"/><stop offset="1" stop-color="#ff006b"/></linearGradient>
<linearGradient id="i133" gradientUnits="userSpaceOnUse" x1="1327.6" x2="1534.7"><stop offset="0" stop-color="#0060ff"/><stop offset=".068" stop-color="#135cff"/><stop offset=".272" stop-color="#684dff"/><stop offset=".417" stop-color="#ae41ff"/><stop offset=".563" stop-color="#ff34ff"/><stop offset=".650" stop-color="#ff23d3"/><stop offset=".748" stop-color="#ff15ae"/><stop offset="1" stop-color="#ff0070"/></linearGradient>
<linearGradient id="i134" gradientUnits="userSpaceOnUse" x1="1326.9" x2="1529.9"><stop offset="0" stop-color="#005dff"/><stop offset=".059" stop-color="#105aff"/><stop offset=".267" stop-color="#634bff"/><stop offset=".584" stop-color="#ff2ffc"/><stop offset=".663" stop-color="#ff21d5"/><stop offset=".762" stop-color="#ff14b0"/><stop offset="1" stop-color="#ff0075"/></linearGradient>
<linearGradient id="i135" gradientUnits="userSpaceOnUse" x1="1326.2" x2="1525.2"><stop offset="0" stop-color="#005bff"/><stop offset=".071" stop-color="#1357ff"/><stop offset=".283" stop-color="#6648ff"/><stop offset=".596" stop-color="#ff2dff"/><stop offset=".768" stop-color="#ff13b5"/><stop offset="1" stop-color="#ff007a"/></linearGradient>
<linearGradient id="i136" gradientUnits="userSpaceOnUse" x1="1325.4" x2="1520.4"><stop offset="0" stop-color="#0058ff"/><stop offset=".072" stop-color="#1354ff"/><stop offset=".289" stop-color="#6645ff"/><stop offset=".454" stop-color="#af38ff"/><stop offset=".608" stop-color="#fd2aff"/><stop offset=".784" stop-color="#ff11b7"/><stop offset="1" stop-color="#ff007f"/></linearGradient>
<linearGradient id="i137" gradientUnits="userSpaceOnUse" x1="1324.7" x2="1515.6"><stop offset="0" stop-color="#0056ff"/><stop offset=".084" stop-color="#1651ff"/><stop offset=".305" stop-color="#6942ff"/><stop offset=".632" stop-color="#ff26fe"/><stop offset=".789" stop-color="#ff10bc"/><stop offset="1" stop-color="#ff0085"/></linearGradient>
<linearGradient id="i138" gradientUnits="userSpaceOnUse" x1="1324.0" x2="1510.8"><stop offset="0" stop-color="#0053ff"/><stop offset=".086" stop-color="#164eff"/><stop offset=".312" stop-color="#683fff"/><stop offset=".645" stop-color="#fe24ff"/><stop offset=".806" stop-color="#ff0ebe"/><stop offset="1" stop-color="#ff008b"/></linearGradient>
<linearGradient id="i139" gradientUnits="userSpaceOnUse" x1="1323.2" x2="1506.1"><stop offset="0" stop-color="#0051ff"/><stop offset=".088" stop-color="#164cff"/><stop offset=".319" stop-color="#673dff"/><stop offset=".670" stop-color="#ff20fd"/><stop offset=".813" stop-color="#ff0ec3"/><stop offset="1" stop-color="#ff0091"/></linearGradient>
<linearGradient id="i140" gradientUnits="userSpaceOnUse" x1="1322.5" x2="1501.3"><stop offset="0" stop-color="#004fff"/><stop offset=".090" stop-color="#1649ff"/><stop offset=".337" stop-color="#6b39ff"/><stop offset=".685" stop-color="#fe1dff"/><stop offset=".831" stop-color="#ff0cc5"/><stop offset="1" stop-color="#ff0098"/></linearGradient>
<linearGradient id="i141" gradientUnits="userSpaceOnUse" x1="1321.8" x2="1496.5"><stop offset="0" stop-color="#004cff"/><stop offset=".092" stop-color="#1647ff"/><stop offset=".345" stop-color="#6a37ff"/><stop offset=".701" stop-color="#fc1bff"/><stop offset=".851" stop-color="#ff0ac7"/><stop offset="1" stop-color="#ff009e"/></linearGradient>
<linearGradient id="i142" gradientUnits="userSpaceOnUse" x1="1321.0" x2="1491.7"><stop offset="0" stop-color="#004aff"/><stop offset=".094" stop-color="#1645ff"/><stop offset=".353" stop-color="#6934ff"/><stop offset=".729" stop-color="#ff17ff"/><stop offset=".859" stop-color="#ff09cd"/><stop offset="1" stop-color="#ff00a6"/></linearGradient>
<linearGradient id="i143" gradientUnits="userSpaceOnUse" x1="1320.3" x2="1487.0"><stop offset="0" stop-color="#0048ff"/><stop offset=".096" stop-color="#1542ff"/><stop offset=".361" stop-color="#6832ff"/><stop offset=".747" stop-color="#fd15ff"/><stop offset=".880" stop-color="#ff07cf"/><stop offset="1" stop-color="#ff00ad"/></linearGradient>
<linearGradient id="i144" gradientUnits="userSpaceOnUse" x1="1319.6" x2="1482.2"><stop offset="0" stop-color="#0045ff"/><stop offset=".099" stop-color="#1540ff"/><stop offset=".370" stop-color="#6730ff"/><stop offset=".778" stop-color="#ff11fe"/><stop offset="1" stop-color="#ff00b5"/></linearGradient>
<linearGradient id="i145" gradientUnits="userSpaceOnUse" x1="1318.8" x2="1477.4"><stop offset="0" stop-color="#0043ff"/><stop offset=".114" stop-color="#193dff"/><stop offset=".392" stop-color="#6a2cff"/><stop offset=".797" stop-color="#fe0fff"/><stop offset="1" stop-color="#ff00bd"/></linearGradient>
<linearGradient id="i146" gradientUnits="userSpaceOnUse" x1="1318.1" x2="1472.6"><stop offset="0" stop-color="#0041ff"/><stop offset=".117" stop-color="#183bff"/><stop offset=".403" stop-color="#6a2aff"/><stop offset=".818" stop-color="#fb0dff"/><stop offset="1" stop-color="#ff00c6"/></linearGradient>
<linearGradient id="i147" gradientUnits="userSpaceOnUse" x1="1317.4" x2="1467.9"><stop offset="0" stop-color="#003fff"/><stop offset=".120" stop-color="#1839ff"/><stop offset=".413" stop-color="#6928ff"/><stop offset=".853" stop-color="#fe09ff"/><stop offset="1" stop-color="#ff00cf"/></linearGradient>
<linearGradient id="i148" gradientUnits="userSpaceOnUse" x1="1316.7" x2="1463.1"><stop offset="0" stop-color="#003cff"/><stop offset=".123" stop-color="#1836ff"/><stop offset=".425" stop-color="#6826ff"/><stop offset=".877" stop-color="#fc07ff"/><stop offset="1" stop-color="#ff00d9"/></linearGradient>
<linearGradient id="i149" gradientUnits="userSpaceOnUse" x1="1315.9" x2="1458.3"><stop offset="0" stop-color="#003aff"/><stop offset=".127" stop-color="#1834ff"/><stop offset=".451" stop-color="#6b23ff"/><stop offset=".915" stop-color="#ff04ff"/><stop offset="1" stop-color="#ff00e3"/></linearGradient>
<linearGradient id="i150" gradientUnits="userSpaceOnUse" x1="1315.2" x2="1453.5"><stop offset="0" stop-color="#0038ff"/><stop offset=".130" stop-color="#1832ff"/><stop offset=".464" stop-color="#6a21ff"/><stop offset=".942" stop-color="#fd01ff"/><stop offset="1" stop-color="#ff00ee"/></linearGradient>
<linearGradient id="i151" gradientUnits="userSpaceOnUse" x1="1314.5" x2="1448.8"><stop offset="0" stop-color="#0036ff"/><stop offset=".119" stop-color="#1431ff"/><stop offset=".448" stop-color="#6220ff"/><stop offset=".716" stop-color="#ab10ff"/><stop offset=".970" stop-color="#fa00ff"/><stop offset="1" stop-color="#ff00fa"/></linearGradient>
<linearGradient id="i152" gradientUnits="userSpaceOnUse" x1="1313.7" x2="1444.0"><stop offset="0" stop-color="#0034ff"/><stop offset=".138" stop-color="#172eff"/><stop offset=".492" stop-color="#691cff"/><stop offset="1" stop-color="#f800ff"/></linearGradient>
<linearGradient id="i153" gradientUnits="userSpaceOnUse" x1="1313.0" x2="1439.2"><stop offset="0" stop-color="#0032ff"/><stop offset=".127" stop-color="#142dff"/><stop offset=".476" stop-color="#601cff"/><stop offset="1" stop-color="#ec00ff"/></linearGradient>
<linearGradient id="i154" gradientUnits="userSpaceOnUse" x1="1312.3" x2="1434.4"><stop offset="0" stop-color="#0030ff"/><stop offset=".115" stop-color="#112bff"/><stop offset=".475" stop-color="#5c1bff"/><stop offset="1" stop-color="#e100ff"/></linearGradient>
<linearGradient id="i155" gradientUnits="userSpaceOnUse" x1="1311.5" x2="1429.7"><stop offset="0" stop-color="#002eff"/><stop offset=".102" stop-color="#0d2aff"/><stop offset=".475" stop-color="#5819ff"/><stop offset="1" stop-color="#d600ff"/></linearGradient>
<linearGradient id="i156" gradientUnits="userSpaceOnUse" x1="1310.8" x2="1424.9"><stop offset="0" stop-color="#002cff"/><stop offset=".070" stop-color="#0729ff"/><stop offset=".456" stop-color="#5019ff"/><stop offset="1" stop-color="#cb00ff"/></linearGradient>
<linearGradient id="i157" gradientUnits="userSpaceOnUse" x1="1310.1" x2="1420.1"><stop offset="0" stop-color="#002aff"/><stop offset=".055" stop-color="#0428ff"/><stop offset=".455" stop-color="#4c18ff"/><stop offset="1" stop-color="#c100ff"/></linearGradient>
<linearGradient id="i158" gradientUnits="userSpaceOnUse" x1="1309.3" x2="1415.3"><stop offset="0" stop-color="#0028ff"/><stop offset=".038" stop-color="#0127ff"/><stop offset=".442" stop-color="#4617ff"/><stop offset="1" stop-color="#b700ff"/></linearGradient>
<linearGradient id="i159" gradientUnits="userSpaceOnUse" x1="1308.6" x2="1410.6"><stop offset="0" stop-color="#0027ff"/><stop offset=".440" stop-color="#4216ff"/><stop offset="1" stop-color="#ad00ff"/></linearGradient>
<linearGradient id="i160" gradientUnits="userSpaceOnUse" x1="1307.9" x2="1405.8"><stop offset="0" stop-color="#0025ff"/><stop offset=".438" stop-color="#3e15ff"/><stop offset="1" stop-color="#a300ff"/></linearGradient>
<linearGradient id="i161" gradientUnits="userSpaceOnUse" x1="1307.2" x2="1401.0"><stop offset="0" stop-color="#0023ff"/><stop offset=".413" stop-color="#3715ff"/><stop offset="1" stop-color="#9a00ff"/></linearGradient>
<linearGradient id="i162" gradientUnits="userSpaceOnUse" x1="1306.4" x2="1396.3"><stop offset="0" stop-color="#0021ff"/><stop offset=".409" stop-color="#3314ff"/><stop offset="1" stop-color="#9100ff"/></linearGradient>
<linearGradient id="i163" gradientUnits="userSpaceOnUse" x1="1305.7" x2="1391.5"><stop offset="0" stop-color="#001fff"/><stop offset=".381" stop-color="#2c14ff"/><stop offset="1" stop-color="#8800ff"/></linearGradient>
<linearGradient id="i164" gradientUnits="userSpaceOnUse" x1="1305.0" x2="1386.7"><stop offset="0" stop-color="#001eff"/><stop offset=".375" stop-color="#2913ff"/><stop offset="1" stop-color="#8000ff"/></linearGradient>
<linearGradient id="i165" gradientUnits="userSpaceOnUse" x1="1304.2" x2="1381.9"><stop offset="0" stop-color="#001cff"/><stop offset=".342" stop-color="#2212ff"/><stop offset="1" stop-color="#7800ff"/></linearGradient>
<linearGradient id="i166" gradientUnits="userSpaceOnUse" x1="1303.5" x2="1377.2"><stop offset="0" stop-color="#001aff"/><stop offset=".333" stop-color="#1f11ff"/><stop offset="1" stop-color="#7000ff"/></linearGradient>
<linearGradient id="i167" gradientUnits="userSpaceOnUse" x1="1302.8" x2="1372.4"><stop offset="0" stop-color="#0018ff"/><stop offset=".294" stop-color="#1911ff"/><stop offset="1" stop-color="#6800ff"/></linearGradient>
<linearGradient id="i168" gradientUnits="userSpaceOnUse" x1="1302.0" x2="1367.6"><stop offset="0" stop-color="#0017ff"/><stop offset=".281" stop-color="#1610ff"/><stop offset="1" stop-color="#6000ff"/></linearGradient>
<linearGradient id="i169" gradientUnits="userSpaceOnUse" x1="1301.3" x2="1362.8"><stop offset="0" stop-color="#0015ff"/><stop offset=".233" stop-color="#1010ff"/><stop offset="1" stop-color="#5900ff"/></linearGradient>
<linearGradient id="i170" gradientUnits="userSpaceOnUse" x1="1300.6" x2="1358.1"><stop offset="0" stop-color="#0013ff"/><stop offset="1" stop-color="#5100ff"/></linearGradient>
<linearGradient id="i171" gradientUnits="userSpaceOnUse" x1="1299.8" x2="1353.3"><stop offset="0" stop-color="#0012ff"/><stop offset="1" stop-color="#4a00ff"/></linearGradient>
<linearGradient id="i172" gradientUnits="userSpaceOnUse" x1="1299.1" x2="1348.5"><stop offset="0" stop-color="#0010ff"/><stop offset="1" stop-color="#4400ff"/></linearGradient>
<linearGradient id="i173" gradientUnits="userSpaceOnUse" x1="1298.4" x2="1343.7"><stop offset="0" stop-color="#000fff"/><stop offset="1" stop-color="#3d00ff"/></linearGradient>
<linearGradient id="i174" gradientUnits="userSpaceOnUse" x1="1297.7" x2="1339.0"><stop offset="0" stop-color="#000dff"/><stop offset="1" stop-color="#3600ff"/></linearGradient>
<linearGradient id="i175" gradientUnits="userSpaceOnUse" x1="1296.9" x2="1334.2"><stop offset="0" stop-color="#000cff"/><stop offset="1" stop-color="#3000ff"/></linearGradient>
<linearGradient id="i176" gradientUnits="userSpaceOnUse" x1="1296.2" x2="1329.4"><stop offset="0" stop-color="#000aff"/><stop offset="1" stop-color="#2a00ff"/></linearGradient>
<linearGradient id="i177" gradientUnits="userSpaceOnUse" x1="1295.5" x2="1324.6"><stop offset="0" stop-color="#0009ff"/><stop offset="1" stop-color="#2400ff"/></linearGradient>
<linearGradient id="i178" gradientUnits="userSpaceOnUse" x1="1294.7" x2="1319.9"><stop offset="0" stop-color="#0007ff"/><stop offset="1" stop-color="#1e00ff"/></linearGradient>
<linearGradient id="i179" gradientUnits="userSpaceOnUse" x1="1294.0" x2="1315.1"><stop offset="0" stop-color="#0006ff"/><stop offset="1" stop-color="#1800ff"/></linearGradient>
<linearGradient id="i180" gradientUnits="userSpaceOnUse" x1="1293.3" x2="1310.3"><stop offset="0" stop-color="#0004ff"/><stop offset="1" stop-color="#1200ff"/></linearGradient>
<linearGradient id="i181" gradientUnits="userSpaceOnUse" x1="1292.5" x2="1305.5"><stop offset="0" stop-color="#0003ff"/><stop offset="1" stop-color="#0d00ff"/></linearGradient>
<linearGradient id="i182" gradientUnits="userSpaceOnUse" x1="1292.1" x2="1300.8"><stop offset="0" stop-color="#0001ff"/><stop offset="1" stop-color="#0700ff"/></linearGradient>
<clipPath id="chs"><path d="M1316.5,741.1 L1314.1,741.1 L1313.9,741.0 L1313.7,740.9 L1313.4,740.7 L1313.1,740.6 L1312.8,740.4 L1312.5,740.3 L1312.2,740.1 L1311.9,739.9 L1311.5,739.6 L1311.1,739.3 L1310.6,739.0 L1310.1,738.7 L1309.6,738.4 L1309.1,738.0 L1308.5,737.6 L1307.9,737.2 L1307.2,736.7 L1306.5,736.3 L1305.8,735.8 L1305.0,735.2 L1304.1,734.6 L1303.1,734.0 L1302.1,733.3 L1301.0,732.6 L1299.8,731.8 L1298.6,731.0 L1297.4,730.2 L1296.0,729.2 L1294.6,728.2 L1293.1,727.1 L1291.5,725.9 L1289.8,724.5 L1288.1,723.1 L1286.3,721.5 L1284.4,719.8 L1282.3,717.6 L1280.0,715.2 L1277.6,712.4 L1275.0,709.2 L1272.2,705.6 L1269.3,701.5 L1266.2,697.0 L1262.9,691.9 L1259.4,686.1 L1255.6,679.5 L1251.7,672.2 L1247.6,664.2 L1243.2,655.2 L1238.4,645.2 L1233.4,634.3 L1228.3,622.4 L1223.1,609.4 L1218.0,595.1 L1212.8,579.7 L1207.6,563.3 L1202.5,545.9 L1197.4,527.3 L1192.4,507.6 L1187.5,487.2 L1183.1,466.6 L1179.1,445.7 L1175.4,424.3 L1172.1,402.8 L1169.6,382.0 L1167.6,361.6 L1166.3,341.5 L1165.6,322.1 L1165.8,303.6 L1166.8,286.0 L1168.6,269.2 L1171.2,253.5 L1174.6,239.4 L1179.0,226.8 L1184.3,215.5 L1190.3,205.8 L1196.7,197.8 L1203.8,191.8 L1211.6,187.5 L1219.8,184.7 L1228.1,183.1 L1236.6,182.8 L1245.5,183.9 L1254.5,185.9 L1263.4,188.2 L1272.4,191.0 L1281.5,194.4 L1290.5,198.1 L1299.3,201.9 L1307.9,205.7 L1316.4,209.8 L1324.8,214.0 L1333.1,218.2 L1341.4,222.7 L1349.5,227.2 L1357.6,231.9 L1365.6,236.6 L1373.7,241.5 L1381.7,246.5 L1389.7,251.6 L1397.7,256.8 L1405.6,262.1 L1413.6,267.5 L1421.5,272.9 L1429.4,278.4 L1437.3,283.9 L1445.2,289.5 L1453.1,295.2 L1461.0,300.9 L1468.9,306.6 L1476.9,312.4 L1484.8,318.2 L1492.7,324.0 L1500.6,329.9 L1508.5,335.8 L1516.4,341.6 L1524.2,347.5 L1532.1,353.4 L1540.0,359.3 L1547.8,365.2 L1555.6,371.0 L1563.3,376.9 L1571.1,382.7 L1578.7,388.5 L1586.3,394.2 L1593.9,400.0 L1601.4,405.7 L1608.8,411.3 L1616.2,416.9 L1623.4,422.4 L1630.7,427.9 L1637.8,433.2 L1644.8,438.6 L1651.7,443.8 L1658.5,448.9 L1665.2,454.0 L1671.7,458.9 L1678.1,463.7 L1684.3,468.5 L1690.4,473.1 L1696.2,477.5 L1701.8,481.8 L1707.3,485.9 L1712.5,489.9 L1717.6,493.7 L1722.5,497.4 L1727.3,501.1 L1731.9,504.6 L1736.3,507.9 L1740.5,511.1 L1744.5,514.0 L1748.3,516.9 L1751.9,519.6 L1755.4,522.2 L1758.6,524.7 L1761.7,527.0 L1764.6,529.2 L1767.3,531.3 L1769.9,533.3 L1772.4,535.2 L1774.7,536.9 L1776.9,538.6 L1778.9,540.1 L1780.9,541.6 L1782.8,543.0 L1784.5,544.3 L1786.1,545.6 L1787.7,546.8 L1789.2,547.9 L1790.7,549.0 L1792.0,550.0 L1793.4,551.0 L1794.6,552.0 L1795.8,552.9 L1796.9,553.8 L1798.0,554.6 L1799.0,555.4 L1800.0,556.1 L1800.9,556.8 L1801.8,557.4 L1802.6,558.0 L1803.3,558.6 L1804.0,559.1 L1804.6,559.6 L1805.2,560.0 L1805.8,560.4 L1806.3,560.8 L1806.8,561.2 L1807.3,561.6 L1807.7,561.9 L1808.2,562.2 L1808.5,562.5 L1808.8,562.7Z"/></clipPath>
<clipPath id="ctri"><path d="M1729.1,522.3 L1428.0,340.5 L1295.1,704.1Z"/></clipPath>
<linearGradient id="z0" gradientUnits="userSpaceOnUse" x1="1648.0" x2="1899.5"><stop offset="0" stop-color="#55ffcc"/><stop offset=".512" stop-color="#98ffc9"/><stop offset="1" stop-color="#e1ffc6"/></linearGradient>
<linearGradient id="z1" gradientUnits="userSpaceOnUse" x1="1648.0" x2="1899.5"><stop offset="0" stop-color="#56ffcf"/><stop offset=".512" stop-color="#9affcc"/><stop offset="1" stop-color="#e4ffc9"/></linearGradient>
<linearGradient id="z2" gradientUnits="userSpaceOnUse" x1="1648.0" x2="1899.5"><stop offset="0" stop-color="#58ffd2"/><stop offset=".512" stop-color="#9cffcf"/><stop offset="1" stop-color="#e7ffcc"/></linearGradient>
<linearGradient id="z3" gradientUnits="userSpaceOnUse" x1="1648.0" x2="1899.5"><stop offset="0" stop-color="#5affd4"/><stop offset=".512" stop-color="#9fffd2"/><stop offset="1" stop-color="#eaffcf"/></linearGradient>
<linearGradient id="z4" gradientUnits="userSpaceOnUse" x1="1648.0" x2="1899.5"><stop offset="0" stop-color="#5bffd7"/><stop offset=".512" stop-color="#a1ffd5"/><stop offset="1" stop-color="#edffd2"/></linearGradient>
<linearGradient id="z5" gradientUnits="userSpaceOnUse" x1="1648.0" x2="1899.5"><stop offset="0" stop-color="#5dffda"/><stop offset=".512" stop-color="#a3ffd8"/><stop offset="1" stop-color="#f0ffd5"/></linearGradient>
<linearGradient id="z6" gradientUnits="userSpaceOnUse" x1="1648.0" x2="1899.5"><stop offset="0" stop-color="#5fffdd"/><stop offset=".512" stop-color="#a6ffdb"/><stop offset="1" stop-color="#f3ffd8"/></linearGradient>
<linearGradient id="z7" gradientUnits="userSpaceOnUse" x1="1648.0" x2="1899.5"><stop offset="0" stop-color="#60ffe0"/><stop offset=".512" stop-color="#a8ffde"/><stop offset="1" stop-color="#f6ffdc"/></linearGradient>
<linearGradient id="z8" gradientUnits="userSpaceOnUse" x1="1648.0" x2="1899.5"><stop offset="0" stop-color="#62ffe3"/><stop offset=".512" stop-color="#abffe1"/><stop offset="1" stop-color="#faffdf"/></linearGradient>
<linearGradient id="z9" gradientUnits="userSpaceOnUse" x1="1648.0" x2="1899.5"><stop offset="0" stop-color="#64ffe6"/><stop offset=".512" stop-color="#adffe4"/><stop offset="1" stop-color="#fdffe2"/></linearGradient>
<linearGradient id="z10" gradientUnits="userSpaceOnUse" x1="1648.0" x2="1899.5"><stop offset="0" stop-color="#66ffe9"/><stop offset=".488" stop-color="#acffe7"/><stop offset="1" stop-color="#fffee5"/></linearGradient>
<linearGradient id="z11" gradientUnits="userSpaceOnUse" x1="1648.0" x2="1899.5"><stop offset="0" stop-color="#68ffec"/><stop offset=".488" stop-color="#aeffeb"/><stop offset=".951" stop-color="#fbffe9"/><stop offset="1" stop-color="#fffae5"/></linearGradient>
<linearGradient id="z12" gradientUnits="userSpaceOnUse" x1="1648.0" x2="1899.5"><stop offset="0" stop-color="#6affef"/><stop offset=".488" stop-color="#b1ffee"/><stop offset=".951" stop-color="#ffffed"/><stop offset="1" stop-color="#fff7e5"/></linearGradient>
<linearGradient id="z13" gradientUnits="userSpaceOnUse" x1="1648.0" x2="1899.5"><stop offset="0" stop-color="#6cfff2"/><stop offset=".488" stop-color="#b4fff1"/><stop offset=".927" stop-color="#fefff1"/><stop offset="1" stop-color="#fff4e6"/></linearGradient>
<linearGradient id="z14" gradientUnits="userSpaceOnUse" x1="1648.0" x2="1899.5"><stop offset="0" stop-color="#6efff5"/><stop offset=".463" stop-color="#b2fff5"/><stop offset=".902" stop-color="#fdfff4"/><stop offset="1" stop-color="#fff0e6"/></linearGradient>
<linearGradient id="z15" gradientUnits="userSpaceOnUse" x1="1648.0" x2="1899.5"><stop offset="0" stop-color="#6ffff9"/><stop offset=".463" stop-color="#b5fff8"/><stop offset=".878" stop-color="#fcfff8"/><stop offset="1" stop-color="#ffede6"/></linearGradient>
<linearGradient id="z16" gradientUnits="userSpaceOnUse" x1="1648.0" x2="1899.5"><stop offset="0" stop-color="#71fffc"/><stop offset=".439" stop-color="#b4fffc"/><stop offset=".878" stop-color="#fffffb"/><stop offset="1" stop-color="#ffeae7"/></linearGradient>
<linearGradient id="z17" gradientUnits="userSpaceOnUse" x1="1648.0" x2="1899.5"><stop offset="0" stop-color="#73ffff"/><stop offset=".439" stop-color="#b6ffff"/><stop offset=".854" stop-color="#fefeff"/><stop offset="1" stop-color="#ffe7e7"/></linearGradient>
<linearGradient id="z18" gradientUnits="userSpaceOnUse" x1="1648.0" x2="1899.5"><stop offset="0" stop-color="#74fbff"/><stop offset=".439" stop-color="#b7fbff"/><stop offset=".854" stop-color="#fefbff"/><stop offset="1" stop-color="#ffe3e8"/></linearGradient>
<linearGradient id="z19" gradientUnits="userSpaceOnUse" x1="1648.0" x2="1899.5"><stop offset="0" stop-color="#74f8ff"/><stop offset=".439" stop-color="#b7f7ff"/><stop offset=".854" stop-color="#fdf7ff"/><stop offset="1" stop-color="#ffe0e8"/></linearGradient>
<linearGradient id="z20" gradientUnits="userSpaceOnUse" x1="1648.0" x2="1899.5"><stop offset="0" stop-color="#75f5ff"/><stop offset=".439" stop-color="#b7f4ff"/><stop offset=".854" stop-color="#fdf3ff"/><stop offset="1" stop-color="#ffdde8"/></linearGradient>
<linearGradient id="z21" gradientUnits="userSpaceOnUse" x1="1648.0" x2="1899.5"><stop offset="0" stop-color="#75f1ff"/><stop offset=".439" stop-color="#b7f0ff"/><stop offset=".854" stop-color="#fdefff"/><stop offset="1" stop-color="#ffdae9"/></linearGradient>
<linearGradient id="z22" gradientUnits="userSpaceOnUse" x1="1648.0" x2="1899.5"><stop offset="0" stop-color="#76eeff"/><stop offset=".854" stop-color="#fcecff"/><stop offset="1" stop-color="#ffd7e9"/></linearGradient>
<linearGradient id="z23" gradientUnits="userSpaceOnUse" x1="1648.0" x2="1899.5"><stop offset="0" stop-color="#76ebff"/><stop offset=".854" stop-color="#fce8ff"/><stop offset="1" stop-color="#ffd4e9"/></linearGradient>
<linearGradient id="z24" gradientUnits="userSpaceOnUse" x1="1648.0" x2="1899.5"><stop offset="0" stop-color="#77e8ff"/><stop offset=".854" stop-color="#fce5ff"/><stop offset="1" stop-color="#ffd1ea"/></linearGradient>
<linearGradient id="z25" gradientUnits="userSpaceOnUse" x1="1648.0" x2="1899.5"><stop offset="0" stop-color="#77e5ff"/><stop offset=".854" stop-color="#fce1ff"/><stop offset="1" stop-color="#ffceea"/></linearGradient>
<linearGradient id="z26" gradientUnits="userSpaceOnUse" x1="1648.0" x2="1899.5"><stop offset="0" stop-color="#78e2ff"/><stop offset=".854" stop-color="#fcdeff"/><stop offset="1" stop-color="#ffcbea"/></linearGradient>
<linearGradient id="z27" gradientUnits="userSpaceOnUse" x1="1648.0" x2="1899.5"><stop offset="0" stop-color="#78dfff"/><stop offset=".878" stop-color="#ffdaff"/><stop offset="1" stop-color="#ffc8eb"/></linearGradient>
<linearGradient id="z28" gradientUnits="userSpaceOnUse" x1="1648.0" x2="1899.5"><stop offset="0" stop-color="#79dbff"/><stop offset=".878" stop-color="#ffd7ff"/><stop offset="1" stop-color="#ffc5eb"/></linearGradient>
<linearGradient id="z29" gradientUnits="userSpaceOnUse" x1="1648.0" x2="1899.5"><stop offset="0" stop-color="#79d8ff"/><stop offset=".878" stop-color="#ffd3ff"/><stop offset="1" stop-color="#ffc2eb"/></linearGradient>
<linearGradient id="z30" gradientUnits="userSpaceOnUse" x1="1648.0" x2="1899.5"><stop offset="0" stop-color="#7ad5ff"/><stop offset=".878" stop-color="#ffd0ff"/><stop offset="1" stop-color="#ffc0ec"/></linearGradient>
<linearGradient id="z31" gradientUnits="userSpaceOnUse" x1="1648.0" x2="1899.5"><stop offset="0" stop-color="#7ad3ff"/><stop offset=".878" stop-color="#fecdff"/><stop offset="1" stop-color="#ffbdec"/></linearGradient>
<linearGradient id="z32" gradientUnits="userSpaceOnUse" x1="1648.0" x2="1899.5"><stop offset="0" stop-color="#7bd0ff"/><stop offset=".878" stop-color="#fecaff"/><stop offset="1" stop-color="#ffbaec"/></linearGradient>
<linearGradient id="z33" gradientUnits="userSpaceOnUse" x1="1648.0" x2="1899.5"><stop offset="0" stop-color="#7bcdff"/><stop offset=".878" stop-color="#fec6ff"/><stop offset="1" stop-color="#ffb7ed"/></linearGradient>
<linearGradient id="z34" gradientUnits="userSpaceOnUse" x1="1648.0" x2="1899.5"><stop offset="0" stop-color="#7bcaff"/><stop offset=".878" stop-color="#fec3ff"/><stop offset="1" stop-color="#ffb4ed"/></linearGradient>
<linearGradient id="z35" gradientUnits="userSpaceOnUse" x1="1648.0" x2="1899.5"><stop offset="0" stop-color="#7cc8ff"/><stop offset=".878" stop-color="#fec1ff"/><stop offset="1" stop-color="#ffb3ed"/></linearGradient>
<linearGradient id="gr" x1="0" y1="0" x2="0" y2="1"><stop offset="0" stop-color="#ff6060"/><stop offset="1" stop-color="#fd3c3c"/></linearGradient>
<linearGradient id="gg" x1="0" y1="0" x2="0" y2="1"><stop offset="0" stop-color="#62b465"/><stop offset="1" stop-color="#3d9c40"/></linearGradient>
<linearGradient id="gbl" x1="0" y1="0" x2="0" y2="1"><stop offset="0" stop-color="#6464ff"/><stop offset="1" stop-color="#3c3cf8"/></linearGradient>
<linearGradient id="gth" x1="0" y1="0" x2="0" y2="1"><stop offset="0" stop-color="#303030"/><stop offset=".5" stop-color="#2c2c2c"/><stop offset=".52" stop-color="#131313"/><stop offset="1" stop-color="#1e1e1e"/></linearGradient>
<linearGradient id="gbot" x1="0" y1="0" x2="0" y2="1"><stop offset="0" stop-color="#474747"/><stop offset=".5" stop-color="#363636"/><stop offset="1" stop-color="#262626"/></linearGradient>
<linearGradient id="gcell" x1="0" y1="0" x2="0" y2="1"><stop offset="0" stop-color="#9a9a9a"/><stop offset=".12" stop-color="#8a8a8a"/><stop offset=".7" stop-color="#747474"/><stop offset="1" stop-color="#5c5c5c"/></linearGradient>
<linearGradient id="gsel" x1="0" y1="0" x2="0" y2="1"><stop offset="0" stop-color="#1c1c1c"/><stop offset=".6" stop-color="#262626"/><stop offset="1" stop-color="#3a3a3a"/></linearGradient>
<linearGradient id="gctl" x1="0" y1="0" x2="0" y2="1"><stop offset="0" stop-color="#9c9c9c"/><stop offset=".5" stop-color="#7c7c7c"/><stop offset="1" stop-color="#626262"/></linearGradient>
<linearGradient id="gnav" x1="0" y1="0" x2="0" y2="1"><stop offset="0" stop-color="#aaaaaa"/><stop offset=".45" stop-color="#888888"/><stop offset="1" stop-color="#6a6a6a"/></linearGradient>
</defs>
<rect x="0.00" y="0.00" width="1920.00" height="1166.00" fill="#333333"/>
<rect x="0.00" y="0.00" width="1920.00" height="26.00" fill="#eef3f8"/>
<rect x="0.00" y="0.00" width="1920.00" height="1.00" fill="#8c8f92"/>
<rect x="0.00" y="0.00" width="1.00" height="26.00" fill="#9a9da0"/>
<rect x="1919.00" y="0.00" width="1.00" height="26.00" fill="#9a9da0"/>
<g transform="translate(14,12.5)"><path d="M0,-7.5 L3.7,-3.8 L0,-0.1 L-3.7,-3.8Z" fill="#f4d21f"/><path d="M-3.9,-3.6 L-0.2,0.1 L-3.9,3.8 L-7.6,0.1Z" fill="#2aa7e8"/><path d="M3.9,-3.6 L7.6,0.1 L3.9,3.8 L0.2,0.1Z" fill="#3cc24a"/><path d="M0,0.3 L3.7,4 L0,7.7 L-3.7,4Z" fill="#e8284a"/></g>
<text x="26" y="17.2" font-size="11.6" fill="#1c1c1c" textLength="329.5" lengthAdjust="spacingAndGlyphs" xml:space="preserve">Calman 2025 Calman Ultimate for Business 112 Days Remaining&#160; - Untitled</text>
<line x1="1819.00" y1="13.30" x2="1828.50" y2="13.30" stroke="#222" stroke-width="1"/>
<rect x="1857.9" y="9" width="7.8" height="7.8" rx="1.2" fill="none" stroke="#222" stroke-width="1"/>
<path d="M1895.5,8.6 L1904,17 M1904,8.6 L1895.5,17" stroke="#222" stroke-width="1.1" fill="none"/>
<rect x="0.00" y="26.00" width="1920.00" height="55.00" fill="#222222"/>
<path d="M2,26 H153.5 V47 Q153.5,50.5 150,50.5 H5.5 Q2,50.5 2,47Z" fill="url(#gred)"/>
<g transform="translate(29.6,37.8) rotate(45)" fill="none" stroke="#fff"><rect x="-5.9" y="-5.9" width="11.8" height="11.8" stroke-width="2"/><path d="M-1.75,-5.9 V5.9 M1.75,-5.9 V5.9 M-5.9,-1.75 H5.9 M-5.9,1.75 H5.9" stroke-width="1.1" stroke="#ffecec"/></g>
<text x="42.5" y="43.9" font-size="21.2" fill="#ffffff" textLength="71.5" lengthAdjust="spacingAndGlyphs" stroke="#fff" stroke-width=".3">calman</text>
<circle cx="140" cy="38" r="8" fill="#cc1a1f"/>
<circle cx="140" cy="38" r="8" fill="none" stroke="#ee5054" stroke-width=".6" opacity=".5"/>
<path d="M136,36.9 H144 L140,41.4Z" fill="#fff"/>
<rect x="160" y="35.9" width="1756" height="4.7" rx="2.3" fill="url(#grb)"/>
<rect x="0.5" y="55.5" width="22" height="23" rx="3" fill="url(#gbtn)" stroke="#cfcfcf" stroke-width="1"/>
<circle cx="11.5" cy="67" r="8" fill="#6a6a6a" opacity=".8"/>
<path d="M9.2,63.2 L13.6,67 L9.2,70.8Z" fill="#ffffff"/>
<path d="M25.5,81 V59 Q25.5,55.5 29,55.5 H70 Q73.5,55.5 73.5,59 V81Z" fill="url(#gtab)" stroke="#5c5c5c" stroke-width="1"/>
<text x="30.6" y="72.1" font-size="9.7" fill="#e2e2e2" textLength="38.6" lengthAdjust="spacingAndGlyphs" stroke="#e2e2e2" stroke-width=".35">History 1</text>
<path d="M75.5,81 V59 Q75.5,55.5 79,55.5 H98.5 Q102,55.5 102,59 V81Z" fill="url(#gtab)" stroke="#5c5c5c" stroke-width="1"/>
<circle cx="87.5" cy="69.5" r="7" fill="#3c3c3c"/>
<path d="M85.1,69.8 H89.9 M87.5,67.4 V72.2" stroke="#6e6e6e" stroke-width="1.2"/>
<path d="M1507,80 V58 Q1507,55 1510,55 H1623.5 Q1626.5,55 1626.5,58 V80Z" fill="url(#gpan)"/>
<path d="M1507,80 V58 Q1507,55 1510,55 H1511.5 V80Z" fill="#1fd11f"/>
<line x1="1596.50" y1="56.00" x2="1596.50" y2="80.00" stroke="#474747" stroke-width="1"/>
<line x1="1597.50" y1="56.00" x2="1597.50" y2="80.00" stroke="#777" stroke-width="1" opacity=".6"/>
<text x="1514" y="65" font-size="9.3" fill="#f0f0f0" textLength="55.5" lengthAdjust="spacingAndGlyphs" stroke="#f0f0f0" stroke-width=".3">X-Rite i1Pro 3</text>
<text x="1514" y="77.1" font-size="9.3" fill="#f0f0f0" textLength="47" lengthAdjust="spacingAndGlyphs" stroke="#f0f0f0" stroke-width=".3">Direct View</text>
<circle cx="1580.5" cy="68" r="7.5" fill="#505050"/>
<path d="M1576.5,66.4 H1584.5 L1580.5,71Z" fill="#fff"/>
<circle cx="1613.8" cy="67.4" r="10.3" fill="#1010ee" stroke="#e8e8ff" stroke-width=".9"/>
<text x="1613.8" y="70.2" font-size="7.8" fill="#ffffff" text-anchor="middle" font-weight="bold">695</text>
<path d="M1631,80 V58 Q1631,55 1634,55 H1737.5 Q1740.5,55 1740.5,58 V80Z" fill="url(#gpan)"/>
<path d="M1631,80 V58 Q1631,55 1634,55 H1635.5 V80Z" fill="#b4b4b4"/>
<text x="1639" y="65" font-size="9.3" fill="#f0f0f0" textLength="54" lengthAdjust="spacingAndGlyphs" stroke="#f0f0f0" stroke-width=".3">Mobile Forge</text>
<circle cx="1727" cy="68.6" r="7.5" fill="#505050"/>
<path d="M1723,67.0 H1731 L1727,71.6Z" fill="#fff"/>
<path d="M1745.5,80 V58 Q1745.5,55 1748.5,55 H1863 Q1866,55 1866,58 V80Z" fill="url(#gpan)"/>
<path d="M1745.5,80 V58 Q1745.5,55 1748.5,55 H1750.0 V80Z" fill="#e6e01e"/>
<text x="1753" y="65" font-size="9.3" fill="#f0f0f0" textLength="88.5" lengthAdjust="spacingAndGlyphs" stroke="#f0f0f0" stroke-width=".3">Direct Display Control</text>
<circle cx="1852.3" cy="68.6" r="7.5" fill="#505050"/>
<path d="M1848.3,67.0 H1856.3 L1852.3,71.6Z" fill="#fff"/>
<rect x="1869" y="55.5" width="27" height="23" rx="3" fill="url(#gbtn)" stroke="#cfcfcf" stroke-width="1"/>
<circle cx="1882.5" cy="67" r="8" fill="#6e6e6e" opacity=".7"/>
<g transform="translate(1882.5,67)" fill="none" stroke="#f4f4f4"><circle r="3.1" stroke-width="1.6"/><path d="M0,-3.6 V-5.3" stroke-width="1.9" transform="rotate(0)"/><path d="M0,-3.6 V-5.3" stroke-width="1.9" transform="rotate(45)"/><path d="M0,-3.6 V-5.3" stroke-width="1.9" transform="rotate(90)"/><path d="M0,-3.6 V-5.3" stroke-width="1.9" transform="rotate(135)"/><path d="M0,-3.6 V-5.3" stroke-width="1.9" transform="rotate(180)"/><path d="M0,-3.6 V-5.3" stroke-width="1.9" transform="rotate(225)"/><path d="M0,-3.6 V-5.3" stroke-width="1.9" transform="rotate(270)"/><path d="M0,-3.6 V-5.3" stroke-width="1.9" transform="rotate(315)"/></g>
<rect x="1897.5" y="55.5" width="24" height="23" rx="3" fill="url(#gbtn)" stroke="#cfcfcf" stroke-width="1"/>
<circle cx="1908.4" cy="67" r="8" fill="#6e6e6e" opacity=".7"/>
<path d="M1910.6,63 L1905.8,66.9 L1910.6,70.8Z" fill="#ffffff"/>
<rect x="50.50" y="258.00" width="358.80" height="475.00" fill="#242424"/>
<text x="209" y="252" font-size="16" fill="#d6d6d6" text-anchor="middle" textLength="91" lengthAdjust="spacingAndGlyphs">DeltaE 2000</text>
<line x1="98.06" y1="258.00" x2="98.06" y2="733.00" stroke="#8e8e8e" stroke-width="1.6"/>
<line x1="145.62" y1="258.00" x2="145.62" y2="733.00" stroke="#8e8e8e" stroke-width="1.6"/>
<line x1="193.18" y1="258.00" x2="193.18" y2="733.00" stroke="#8e8e8e" stroke-width="1.6"/>
<line x1="240.74" y1="258.00" x2="240.74" y2="733.00" stroke="#8e8e8e" stroke-width="1.6"/>
<line x1="288.30" y1="258.00" x2="288.30" y2="733.00" stroke="#8e8e8e" stroke-width="1.6"/>
<line x1="335.86" y1="258.00" x2="335.86" y2="733.00" stroke="#8e8e8e" stroke-width="1.6"/>
<line x1="383.42" y1="258.00" x2="383.42" y2="733.00" stroke="#8e8e8e" stroke-width="1.6"/>
<line x1="44.00" y1="258.00" x2="410.10" y2="258.00" stroke="#a0a0a0" stroke-width="2"/>
<line x1="409.30" y1="258.00" x2="409.30" y2="733.00" stroke="#a0a0a0" stroke-width="1.6"/>
<line x1="50.50" y1="258.00" x2="50.50" y2="739.00" stroke="#a0a0a0" stroke-width="2"/>
<line x1="44.00" y1="733.00" x2="410.10" y2="733.00" stroke="#a0a0a0" stroke-width="2"/>
<line x1="44.00" y1="337.17" x2="50.50" y2="337.17" stroke="#e0e0e0" stroke-width="1.6"/>
<line x1="44.00" y1="416.33" x2="50.50" y2="416.33" stroke="#e0e0e0" stroke-width="1.6"/>
<line x1="44.00" y1="495.50" x2="50.50" y2="495.50" stroke="#e0e0e0" stroke-width="1.6"/>
<line x1="44.00" y1="574.67" x2="50.50" y2="574.67" stroke="#e0e0e0" stroke-width="1.6"/>
<line x1="44.00" y1="653.83" x2="50.50" y2="653.83" stroke="#e0e0e0" stroke-width="1.6"/>
<line x1="98.06" y1="733.00" x2="98.06" y2="739.00" stroke="#a0a0a0" stroke-width="1.6"/>
<line x1="145.62" y1="733.00" x2="145.62" y2="739.00" stroke="#a0a0a0" stroke-width="1.6"/>
<line x1="193.18" y1="733.00" x2="193.18" y2="739.00" stroke="#a0a0a0" stroke-width="1.6"/>
<line x1="240.74" y1="733.00" x2="240.74" y2="739.00" stroke="#a0a0a0" stroke-width="1.6"/>
<line x1="288.30" y1="733.00" x2="288.30" y2="739.00" stroke="#a0a0a0" stroke-width="1.6"/>
<line x1="335.86" y1="733.00" x2="335.86" y2="739.00" stroke="#a0a0a0" stroke-width="1.6"/>
<line x1="383.42" y1="733.00" x2="383.42" y2="739.00" stroke="#a0a0a0" stroke-width="1.6"/>
<text x="50" y="304.5833333333333" font-size="16.5" fill="#d6d6d6" text-anchor="end">100%</text>
<text x="50" y="383.75" font-size="16.5" fill="#d6d6d6" text-anchor="end">80%</text>
<text x="50" y="462.9166666666667" font-size="16.5" fill="#d6d6d6" text-anchor="end">60%</text>
<text x="50" y="542.0833333333334" font-size="16.5" fill="#d6d6d6" text-anchor="end">40%</text>
<text x="50" y="621.25" font-size="16.5" fill="#d6d6d6" text-anchor="end">20%</text>
<text x="50" y="700.4166666666667" font-size="16.5" fill="#d6d6d6" text-anchor="end">100</text>
<text x="50.5" y="758.5" font-size="16.5" fill="#d6d6d6" text-anchor="middle">0</text>
<text x="98.06" y="758.5" font-size="16.5" fill="#d6d6d6" text-anchor="middle">2</text>
<text x="145.62" y="758.5" font-size="16.5" fill="#d6d6d6" text-anchor="middle">4</text>
<text x="193.18" y="758.5" font-size="16.5" fill="#d6d6d6" text-anchor="middle">6</text>
<text x="240.74" y="758.5" font-size="16.5" fill="#d6d6d6" text-anchor="middle">8</text>
<text x="288.3" y="758.5" font-size="16.5" fill="#d6d6d6" text-anchor="middle">10</text>
<text x="335.86" y="758.5" font-size="16.5" fill="#d6d6d6" text-anchor="middle">12</text>
<text x="383.42" y="758.5" font-size="16.5" fill="#d6d6d6" text-anchor="middle">14</text>
<rect x="51.50" y="265.40" width="46.46" height="9.20" fill="#000000"/>
<rect x="51.50" y="266.10" width="45.06" height="7.20" fill="url(#b100R)"/>
<rect x="51.50" y="274.85" width="10.07" height="9.20" fill="#000000"/>
<rect x="51.50" y="275.55" width="8.67" height="7.20" fill="url(#b100G)"/>
<rect x="51.50" y="284.30" width="23.39" height="9.20" fill="#000000"/>
<rect x="51.50" y="285.00" width="21.99" height="7.20" fill="url(#b100B)"/>
<rect x="51.50" y="293.75" width="40.75" height="9.20" fill="#000000"/>
<rect x="51.50" y="294.45" width="39.35" height="7.20" fill="url(#b100C)"/>
<rect x="51.50" y="303.20" width="13.88" height="9.20" fill="#000000"/>
<rect x="51.50" y="303.90" width="12.48" height="7.20" fill="url(#b100M)"/>
<rect x="51.50" y="312.65" width="13.17" height="9.20" fill="#000000"/>
<rect x="51.50" y="313.35" width="11.77" height="7.20" fill="url(#b100Y)"/>
<rect x="51.50" y="344.57" width="22.20" height="9.20" fill="#000000"/>
<rect x="51.50" y="345.27" width="20.80" height="7.20" fill="url(#b80R)"/>
<rect x="51.50" y="354.02" width="6.51" height="9.20" fill="#000000"/>
<rect x="51.50" y="354.72" width="5.11" height="7.20" fill="url(#b80G)"/>
<rect x="51.50" y="363.47" width="19.35" height="9.20" fill="#000000"/>
<rect x="51.50" y="364.17" width="17.95" height="7.20" fill="url(#b80B)"/>
<rect x="51.50" y="372.92" width="44.32" height="9.20" fill="#000000"/>
<rect x="51.50" y="373.62" width="42.92" height="7.20" fill="url(#b80C)"/>
<rect x="51.50" y="382.37" width="16.97" height="9.20" fill="#000000"/>
<rect x="51.50" y="383.07" width="15.57" height="7.20" fill="url(#b80M)"/>
<rect x="51.50" y="391.82" width="9.36" height="9.20" fill="#000000"/>
<rect x="51.50" y="392.52" width="7.96" height="7.20" fill="url(#b80Y)"/>
<rect x="51.50" y="423.73" width="11.26" height="9.20" fill="#000000"/>
<rect x="51.50" y="424.43" width="9.86" height="7.20" fill="url(#b60R)"/>
<rect x="51.50" y="433.18" width="4.37" height="9.20" fill="#000000"/>
<rect x="51.50" y="433.88" width="2.97" height="7.20" fill="url(#b60G)"/>
<rect x="51.50" y="442.63" width="20.78" height="9.20" fill="#000000"/>
<rect x="51.50" y="443.33" width="19.38" height="7.20" fill="url(#b60B)"/>
<rect x="51.50" y="452.08" width="47.88" height="9.20" fill="#000000"/>
<rect x="51.50" y="452.78" width="46.48" height="7.20" fill="url(#b60C)"/>
<rect x="51.50" y="461.53" width="21.73" height="9.20" fill="#000000"/>
<rect x="51.50" y="462.23" width="20.33" height="7.20" fill="url(#b60M)"/>
<rect x="51.50" y="470.98" width="7.93" height="9.20" fill="#000000"/>
<rect x="51.50" y="471.68" width="6.53" height="7.20" fill="url(#b60Y)"/>
<rect x="51.50" y="502.90" width="5.56" height="9.20" fill="#000000"/>
<rect x="51.50" y="503.60" width="4.16" height="7.20" fill="url(#b40R)"/>
<rect x="51.50" y="512.35" width="7.70" height="9.20" fill="#000000"/>
<rect x="51.50" y="513.05" width="6.30" height="7.20" fill="url(#b40G)"/>
<rect x="51.50" y="521.80" width="23.63" height="9.20" fill="#000000"/>
<rect x="51.50" y="522.50" width="22.23" height="7.20" fill="url(#b40B)"/>
<rect x="51.50" y="531.25" width="47.88" height="9.20" fill="#000000"/>
<rect x="51.50" y="531.95" width="46.48" height="7.20" fill="url(#b40C)"/>
<rect x="51.50" y="540.70" width="23.63" height="9.20" fill="#000000"/>
<rect x="51.50" y="541.40" width="22.23" height="7.20" fill="url(#b40M)"/>
<rect x="51.50" y="550.15" width="13.88" height="9.20" fill="#000000"/>
<rect x="51.50" y="550.85" width="12.48" height="7.20" fill="url(#b40Y)"/>
<rect x="51.50" y="582.07" width="13.88" height="9.20" fill="#000000"/>
<rect x="51.50" y="582.77" width="12.48" height="7.20" fill="url(#b20R)"/>
<rect x="51.50" y="591.52" width="21.73" height="9.20" fill="#000000"/>
<rect x="51.50" y="592.22" width="20.33" height="7.20" fill="url(#b20G)"/>
<rect x="51.50" y="600.97" width="28.38" height="9.20" fill="#000000"/>
<rect x="51.50" y="601.67" width="26.98" height="7.20" fill="url(#b20B)"/>
<rect x="51.50" y="610.42" width="58.59" height="9.20" fill="#000000"/>
<rect x="51.50" y="611.12" width="57.19" height="7.20" fill="url(#b20C)"/>
<rect x="51.50" y="619.87" width="29.57" height="9.20" fill="#000000"/>
<rect x="51.50" y="620.57" width="28.17" height="7.20" fill="url(#b20M)"/>
<rect x="51.50" y="629.32" width="24.58" height="9.20" fill="#000000"/>
<rect x="51.50" y="630.02" width="23.18" height="7.20" fill="url(#b20Y)"/>
<rect x="51.50" y="717.73" width="64.49" height="9.40" fill="#000000"/>
<rect x="51.50" y="718.63" width="62.89" height="7.20" fill="url(#bw)"/>
<line x1="74.28" y1="259.00" x2="74.28" y2="733.00" stroke="#0b7d0b" stroke-width="2"/>
<line x1="121.84" y1="257.00" x2="121.84" y2="733.00" stroke="#e9e93a" stroke-width="1.8"/>
<line x1="290.40" y1="257.00" x2="290.40" y2="733.00" stroke="#b81414" stroke-width="2.4"/>
<rect x="470.00" y="181.00" width="166.00" height="363.80" fill="#242424"/>
<text x="538.0" y="173.7" font-size="16.5" fill="#d6d6d6" text-anchor="middle" textLength="52" lengthAdjust="spacingAndGlyphs">Delta L</text>
<line x1="470.00" y1="241.63" x2="636.00" y2="241.63" stroke="#9a9a9a" stroke-width="1.5"/>
<line x1="470.00" y1="302.27" x2="636.00" y2="302.27" stroke="#9a9a9a" stroke-width="1.5"/>
<line x1="470.00" y1="362.90" x2="636.00" y2="362.90" stroke="#9a9a9a" stroke-width="1.5"/>
<line x1="470.00" y1="423.53" x2="636.00" y2="423.53" stroke="#9a9a9a" stroke-width="1.5"/>
<line x1="470.00" y1="484.17" x2="636.00" y2="484.17" stroke="#9a9a9a" stroke-width="1.5"/>
<rect x="469.00" y="178.00" width="168.00" height="4.00" fill="#9c9c9c"/>
<line x1="470.00" y1="181.00" x2="470.00" y2="550.80" stroke="#a0a0a0" stroke-width="2"/>
<line x1="636.00" y1="181.00" x2="636.00" y2="550.80" stroke="#a0a0a0" stroke-width="2"/>
<line x1="470.00" y1="544.80" x2="636.00" y2="544.80" stroke="#a0a0a0" stroke-width="2"/>
<line x1="464.00" y1="181.00" x2="470.00" y2="181.00" stroke="#dcdcdc" stroke-width="1.6"/>
<text x="463.0" y="187.7" font-size="16.5" fill="#d6d6d6" text-anchor="end">15</text>
<line x1="464.00" y1="241.63" x2="470.00" y2="241.63" stroke="#dcdcdc" stroke-width="1.6"/>
<text x="463.0" y="248.33333333333331" font-size="16.5" fill="#d6d6d6" text-anchor="end">10</text>
<line x1="464.00" y1="302.27" x2="470.00" y2="302.27" stroke="#dcdcdc" stroke-width="1.6"/>
<text x="463.0" y="308.96666666666664" font-size="16.5" fill="#d6d6d6" text-anchor="end">5</text>
<line x1="464.00" y1="362.90" x2="470.00" y2="362.90" stroke="#dcdcdc" stroke-width="1.6"/>
<text x="463.0" y="369.59999999999997" font-size="16.5" fill="#d6d6d6" text-anchor="end">0</text>
<line x1="464.00" y1="423.53" x2="470.00" y2="423.53" stroke="#dcdcdc" stroke-width="1.6"/>
<text x="463.0" y="430.2333333333333" font-size="16.5" fill="#d6d6d6" text-anchor="end">-5</text>
<line x1="464.00" y1="484.17" x2="470.00" y2="484.17" stroke="#dcdcdc" stroke-width="1.6"/>
<text x="463.0" y="490.8666666666666" font-size="16.5" fill="#d6d6d6" text-anchor="end">-10</text>
<line x1="464.00" y1="544.80" x2="470.00" y2="544.80" stroke="#dcdcdc" stroke-width="1.6"/>
<text x="463.0" y="551.5" font-size="16.5" fill="#d6d6d6" text-anchor="end">-15</text>
<text x="553.0" y="562" font-size="16.5" fill="#d6d6d6" text-anchor="middle">20%</text>
<rect x="486.10" y="357.46" width="133.90" height="6.64" fill="#000000"/>
<rect x="487.30" y="358.66" width="131.50" height="4.24" fill="url(#glch)"/>
<rect x="697.00" y="181.00" width="166.00" height="363.80" fill="#242424"/>
<text x="765.0" y="173.7" font-size="16.5" fill="#d6d6d6" text-anchor="middle" textLength="52" lengthAdjust="spacingAndGlyphs">Delta C</text>
<line x1="697.00" y1="241.63" x2="863.00" y2="241.63" stroke="#9a9a9a" stroke-width="1.5"/>
<line x1="697.00" y1="302.27" x2="863.00" y2="302.27" stroke="#9a9a9a" stroke-width="1.5"/>
<line x1="697.00" y1="362.90" x2="863.00" y2="362.90" stroke="#9a9a9a" stroke-width="1.5"/>
<line x1="697.00" y1="423.53" x2="863.00" y2="423.53" stroke="#9a9a9a" stroke-width="1.5"/>
<line x1="697.00" y1="484.17" x2="863.00" y2="484.17" stroke="#9a9a9a" stroke-width="1.5"/>
<rect x="696.00" y="178.00" width="168.00" height="4.00" fill="#9c9c9c"/>
<line x1="697.00" y1="181.00" x2="697.00" y2="550.80" stroke="#a0a0a0" stroke-width="2"/>
<line x1="863.00" y1="181.00" x2="863.00" y2="550.80" stroke="#a0a0a0" stroke-width="2"/>
<line x1="697.00" y1="544.80" x2="863.00" y2="544.80" stroke="#a0a0a0" stroke-width="2"/>
<line x1="691.00" y1="181.00" x2="697.00" y2="181.00" stroke="#dcdcdc" stroke-width="1.6"/>
<text x="690.0" y="187.7" font-size="16.5" fill="#d6d6d6" text-anchor="end">15</text>
<line x1="691.00" y1="241.63" x2="697.00" y2="241.63" stroke="#dcdcdc" stroke-width="1.6"/>
<text x="690.0" y="248.33333333333331" font-size="16.5" fill="#d6d6d6" text-anchor="end">10</text>
<line x1="691.00" y1="302.27" x2="697.00" y2="302.27" stroke="#dcdcdc" stroke-width="1.6"/>
<text x="690.0" y="308.96666666666664" font-size="16.5" fill="#d6d6d6" text-anchor="end">5</text>
<line x1="691.00" y1="362.90" x2="697.00" y2="362.90" stroke="#dcdcdc" stroke-width="1.6"/>
<text x="690.0" y="369.59999999999997" font-size="16.5" fill="#d6d6d6" text-anchor="end">0</text>
<line x1="691.00" y1="423.53" x2="697.00" y2="423.53" stroke="#dcdcdc" stroke-width="1.6"/>
<text x="690.0" y="430.2333333333333" font-size="16.5" fill="#d6d6d6" text-anchor="end">-5</text>
<line x1="691.00" y1="484.17" x2="697.00" y2="484.17" stroke="#dcdcdc" stroke-width="1.6"/>
<text x="690.0" y="490.8666666666666" font-size="16.5" fill="#d6d6d6" text-anchor="end">-10</text>
<line x1="691.00" y1="544.80" x2="697.00" y2="544.80" stroke="#dcdcdc" stroke-width="1.6"/>
<text x="690.0" y="551.5" font-size="16.5" fill="#d6d6d6" text-anchor="end">-15</text>
<text x="780.0" y="562" font-size="16.5" fill="#d6d6d6" text-anchor="middle">20%</text>
<rect x="713.10" y="361.70" width="133.90" height="7.86" fill="#000000"/>
<rect x="714.30" y="362.90" width="131.50" height="5.46" fill="url(#glch)"/>
<rect x="924.00" y="181.00" width="166.00" height="363.80" fill="#242424"/>
<text x="992.0" y="173.7" font-size="16.5" fill="#d6d6d6" text-anchor="middle" textLength="52" lengthAdjust="spacingAndGlyphs">Delta H</text>
<line x1="924.00" y1="241.63" x2="1090.00" y2="241.63" stroke="#9a9a9a" stroke-width="1.5"/>
<line x1="924.00" y1="302.27" x2="1090.00" y2="302.27" stroke="#9a9a9a" stroke-width="1.5"/>
<line x1="924.00" y1="362.90" x2="1090.00" y2="362.90" stroke="#9a9a9a" stroke-width="1.5"/>
<line x1="924.00" y1="423.53" x2="1090.00" y2="423.53" stroke="#9a9a9a" stroke-width="1.5"/>
<line x1="924.00" y1="484.17" x2="1090.00" y2="484.17" stroke="#9a9a9a" stroke-width="1.5"/>
<rect x="923.00" y="178.00" width="168.00" height="4.00" fill="#9c9c9c"/>
<line x1="924.00" y1="181.00" x2="924.00" y2="550.80" stroke="#a0a0a0" stroke-width="2"/>
<line x1="1090.00" y1="181.00" x2="1090.00" y2="550.80" stroke="#a0a0a0" stroke-width="2"/>
<line x1="924.00" y1="544.80" x2="1090.00" y2="544.80" stroke="#a0a0a0" stroke-width="2"/>
<line x1="918.00" y1="181.00" x2="924.00" y2="181.00" stroke="#dcdcdc" stroke-width="1.6"/>
<text x="917.0" y="187.7" font-size="16.5" fill="#d6d6d6" text-anchor="end">15</text>
<line x1="918.00" y1="241.63" x2="924.00" y2="241.63" stroke="#dcdcdc" stroke-width="1.6"/>
<text x="917.0" y="248.33333333333331" font-size="16.5" fill="#d6d6d6" text-anchor="end">10</text>
<line x1="918.00" y1="302.27" x2="924.00" y2="302.27" stroke="#dcdcdc" stroke-width="1.6"/>
<text x="917.0" y="308.96666666666664" font-size="16.5" fill="#d6d6d6" text-anchor="end">5</text>
<line x1="918.00" y1="362.90" x2="924.00" y2="362.90" stroke="#dcdcdc" stroke-width="1.6"/>
<text x="917.0" y="369.59999999999997" font-size="16.5" fill="#d6d6d6" text-anchor="end">0</text>
<line x1="918.00" y1="423.53" x2="924.00" y2="423.53" stroke="#dcdcdc" stroke-width="1.6"/>
<text x="917.0" y="430.2333333333333" font-size="16.5" fill="#d6d6d6" text-anchor="end">-5</text>
<line x1="918.00" y1="484.17" x2="924.00" y2="484.17" stroke="#dcdcdc" stroke-width="1.6"/>
<text x="917.0" y="490.8666666666666" font-size="16.5" fill="#d6d6d6" text-anchor="end">-10</text>
<line x1="918.00" y1="544.80" x2="924.00" y2="544.80" stroke="#dcdcdc" stroke-width="1.6"/>
<text x="917.0" y="551.5" font-size="16.5" fill="#d6d6d6" text-anchor="end">-15</text>
<text x="1007.0" y="562" font-size="16.5" fill="#d6d6d6" text-anchor="middle">20%</text>
<rect x="940.10" y="331.99" width="133.90" height="32.11" fill="#000000"/>
<rect x="941.30" y="333.19" width="131.50" height="29.71" fill="url(#glch)"/>
<rect x="432.00" y="582.00" width="681.00" height="187.50" fill="#000000"/>
<rect x="455.60" y="590.00" width="114.40" height="153.00" fill="#ffffff"/>
<rect x="456.80" y="591.20" width="112.00" height="150.60" fill="#adc0c4"/>
<rect x="456.80" y="666.50" width="112.00" height="75.30" fill="#a9c0c1"/>
<text x="512.8000000000001" y="760" font-size="14" fill="#ffffff" text-anchor="middle" textLength="26" lengthAdjust="spacingAndGlyphs">20%</text>
<rect x="588.55" y="590.00" width="114.40" height="153.00" fill="#ffffff"/>
<rect x="589.75" y="591.20" width="112.00" height="150.60" fill="#96c0c4"/>
<rect x="589.75" y="666.50" width="112.00" height="75.30" fill="#92bfc0"/>
<text x="645.75" y="760" font-size="14" fill="#ffffff" text-anchor="middle" textLength="26" lengthAdjust="spacingAndGlyphs">40%</text>
<rect x="721.50" y="590.00" width="114.40" height="153.00" fill="#ffffff"/>
<rect x="722.70" y="591.20" width="112.00" height="150.60" fill="#7bc0c5"/>
<rect x="722.70" y="666.50" width="112.00" height="75.30" fill="#78bfc0"/>
<text x="778.7" y="760" font-size="14" fill="#ffffff" text-anchor="middle" textLength="26" lengthAdjust="spacingAndGlyphs">60%</text>
<rect x="854.45" y="590.00" width="114.40" height="153.00" fill="#ffffff"/>
<rect x="855.65" y="591.20" width="112.00" height="150.60" fill="#57bfc5"/>
<rect x="855.65" y="666.50" width="112.00" height="75.30" fill="#55bfc1"/>
<text x="911.6500000000001" y="760" font-size="14" fill="#ffffff" text-anchor="middle" textLength="26" lengthAdjust="spacingAndGlyphs">80%</text>
<rect x="987.40" y="590.00" width="114.40" height="153.00" fill="#ffffff"/>
<rect x="988.60" y="591.20" width="112.00" height="150.60" fill="#05c3c8"/>
<rect x="988.60" y="666.50" width="112.00" height="75.30" fill="#00c0c2"/>
<text x="1044.6" y="760" font-size="14" fill="#ffffff" text-anchor="middle" textLength="34" lengthAdjust="spacingAndGlyphs">100%</text>
<text transform="translate(446.5,642.5) rotate(-90)" font-size="14.5" fill="#ffffff" textLength="39" lengthAdjust="spacingAndGlyphs">Actual</text>
<text transform="translate(446.5,728.5) rotate(-90)" font-size="14.5" fill="#ffffff" textLength="39.5" lengthAdjust="spacingAndGlyphs">Target</text>
<rect x="1124" y="147" width="790" height="634" fill="none" stroke="#a9bfc1" stroke-width="8"/>
<rect x="1918.00" y="143.00" width="2.00" height="642.00" fill="#262626"/>
<text x="1519" y="173" font-size="16" fill="#d6d6d6" text-anchor="middle" textLength="87" lengthAdjust="spacingAndGlyphs">CIE 1931 xy</text>
<rect x="1162.30" y="178.50" width="744.70" height="565.50" fill="#242424"/>
<g clip-path="url(#chs)"><rect x="1216.0" y="182.0" width="37.5" height="3.6" fill="url(#o0)"/><rect x="1207.7" y="185.0" width="57.9" height="3.6" fill="url(#o1)"/><rect x="1202.2" y="188.0" width="73.3" height="3.6" fill="url(#o2)"/><rect x="1198.2" y="191.0" width="85.3" height="3.6" fill="url(#o3)"/><rect x="1194.7" y="194.0" width="96.2" height="3.6" fill="url(#o4)"/><rect x="1191.9" y="197.0" width="106.0" height="3.6" fill="url(#o5)"/><rect x="1189.5" y="200.0" width="115.3" height="3.6" fill="url(#o6)"/><rect x="1187.1" y="203.0" width="124.4" height="3.6" fill="url(#o7)"/><rect x="1185.3" y="206.0" width="132.5" height="3.6" fill="url(#o8)"/><rect x="1183.4" y="209.0" width="140.5" height="3.6" fill="url(#o9)"/><rect x="1181.6" y="212.0" width="148.3" height="3.6" fill="url(#o10)"/><rect x="1180.1" y="215.0" width="155.6" height="3.6" fill="url(#o11)"/><rect x="1178.7" y="218.0" width="162.6" height="3.6" fill="url(#o12)"/><rect x="1177.3" y="221.0" width="169.5" height="3.6" fill="url(#o13)"/><rect x="1175.9" y="224.0" width="176.2" height="3.6" fill="url(#o14)"/><rect x="1174.9" y="227.0" width="182.5" height="3.6" fill="url(#o15)"/><rect x="1173.8" y="230.0" width="188.7" height="3.6" fill="url(#o16)"/><rect x="1172.8" y="233.0" width="194.8" height="3.6" fill="url(#o17)"/><rect x="1171.7" y="236.0" width="200.8" height="3.6" fill="url(#o18)"/><rect x="1171.0" y="239.0" width="206.5" height="3.6" fill="url(#o19)"/><rect x="1170.2" y="242.0" width="212.0" height="3.6" fill="url(#o20)"/><rect x="1169.5" y="245.0" width="217.5" height="3.6" fill="url(#o21)"/><rect x="1168.8" y="248.0" width="222.9" height="3.6" fill="url(#o22)"/><rect x="1168.1" y="251.0" width="228.3" height="3.6" fill="url(#o23)"/><rect x="1167.6" y="254.0" width="233.4" height="3.6" fill="url(#o24)"/><rect x="1167.1" y="257.0" width="238.4" height="3.6" fill="url(#o25)"/><rect x="1166.6" y="260.0" width="243.4" height="3.6" fill="url(#o26)"/><rect x="1166.1" y="263.0" width="248.3" height="3.6" fill="url(#o27)"/><rect x="1165.6" y="266.0" width="253.2" height="3.6" fill="url(#o28)"/><rect x="1165.3" y="269.0" width="257.9" height="3.6" fill="url(#o29)"/><rect x="1164.9" y="272.0" width="262.6" height="3.6" fill="url(#o30)"/><rect x="1164.6" y="275.0" width="267.2" height="3.6" fill="url(#o31)"/><rect x="1164.3" y="278.0" width="271.8" height="3.6" fill="url(#o32)"/><rect x="1164.0" y="281.0" width="276.4" height="3.6" fill="url(#o33)"/><rect x="1163.7" y="284.0" width="280.9" height="3.6" fill="url(#o34)"/><rect x="1163.5" y="287.0" width="285.3" height="3.6" fill="url(#o35)"/><rect x="1163.4" y="290.0" width="289.7" height="3.6" fill="url(#o36)"/><rect x="1163.2" y="293.0" width="294.1" height="3.6" fill="url(#o37)"/><rect x="1163.0" y="296.0" width="298.4" height="3.6" fill="url(#o38)"/><rect x="1162.8" y="299.0" width="302.7" height="3.6" fill="url(#o39)"/><rect x="1162.7" y="302.0" width="307.0" height="3.6" fill="url(#o40)"/><rect x="1162.7" y="305.0" width="311.1" height="3.6" fill="url(#o41)"/><rect x="1162.7" y="308.0" width="315.3" height="3.6" fill="url(#o42)"/><rect x="1162.7" y="311.0" width="319.4" height="3.6" fill="url(#o43)"/><rect x="1162.6" y="314.0" width="323.5" height="3.6" fill="url(#o44)"/><rect x="1162.6" y="317.0" width="327.6" height="3.6" fill="url(#o45)"/><rect x="1162.6" y="320.0" width="331.7" height="3.6" fill="url(#o46)"/><rect x="1162.6" y="323.0" width="335.8" height="3.6" fill="url(#o47)"/><rect x="1162.7" y="326.0" width="339.7" height="3.6" fill="url(#o48)"/><rect x="1162.8" y="329.0" width="343.6" height="3.6" fill="url(#o49)"/><rect x="1162.9" y="332.0" width="347.6" height="3.6" fill="url(#o50)"/><rect x="1163.0" y="335.0" width="351.5" height="3.6" fill="url(#o51)"/><rect x="1163.1" y="338.0" width="355.4" height="3.6" fill="url(#o52)"/><rect x="1163.2" y="341.0" width="359.3" height="3.6" fill="url(#o53)"/><rect x="1163.4" y="344.0" width="363.1" height="3.6" fill="url(#o54)"/><rect x="1163.6" y="347.0" width="366.9" height="3.6" fill="url(#o55)"/><rect x="1163.8" y="350.0" width="370.7" height="3.6" fill="url(#o56)"/><rect x="1164.0" y="353.0" width="374.5" height="3.6" fill="url(#o57)"/><rect x="1164.2" y="356.0" width="378.3" height="3.6" fill="url(#o58)"/><rect x="1164.4" y="359.0" width="382.1" height="3.6" fill="url(#o59)"/><rect x="1164.7" y="362.0" width="385.9" height="3.6" fill="url(#o60)"/><rect x="1164.9" y="365.0" width="389.6" height="3.6" fill="url(#o61)"/><rect x="1165.2" y="368.0" width="393.3" height="3.6" fill="url(#o62)"/><rect x="1165.5" y="371.0" width="397.0" height="3.6" fill="url(#o63)"/><rect x="1165.8" y="374.0" width="400.7" height="3.6" fill="url(#o64)"/><rect x="1166.1" y="377.0" width="404.4" height="3.6" fill="url(#o65)"/><rect x="1166.4" y="380.0" width="408.1" height="3.6" fill="url(#o66)"/><rect x="1166.7" y="383.0" width="411.7" height="3.6" fill="url(#o67)"/><rect x="1167.1" y="386.0" width="415.3" height="3.6" fill="url(#o68)"/><rect x="1167.4" y="389.0" width="418.9" height="3.6" fill="url(#o69)"/><rect x="1167.8" y="392.0" width="422.5" height="3.6" fill="url(#o70)"/><rect x="1168.2" y="395.0" width="426.1" height="3.6" fill="url(#o71)"/><rect x="1168.5" y="398.0" width="429.7" height="3.6" fill="url(#o72)"/><rect x="1168.9" y="401.0" width="433.3" height="3.6" fill="url(#o73)"/><rect x="1169.3" y="404.0" width="436.8" height="3.6" fill="url(#o74)"/><rect x="1169.8" y="407.0" width="440.4" height="3.6" fill="url(#o75)"/><rect x="1170.2" y="410.0" width="443.9" height="3.6" fill="url(#o76)"/><rect x="1170.7" y="413.0" width="447.4" height="3.6" fill="url(#o77)"/><rect x="1171.1" y="416.0" width="450.9" height="3.6" fill="url(#o78)"/><rect x="1171.6" y="419.0" width="454.4" height="3.6" fill="url(#o79)"/><rect x="1172.0" y="422.0" width="457.9" height="3.6" fill="url(#o80)"/><rect x="1172.5" y="425.0" width="461.4" height="3.6" fill="url(#o81)"/><rect x="1173.0" y="428.0" width="464.8" height="3.6" fill="url(#o82)"/><rect x="1173.5" y="431.0" width="468.2" height="3.6" fill="url(#o83)"/><rect x="1174.1" y="434.0" width="471.7" height="3.6" fill="url(#o84)"/><rect x="1174.6" y="437.0" width="475.1" height="3.6" fill="url(#o85)"/><rect x="1175.1" y="440.0" width="478.6" height="3.6" fill="url(#o86)"/><rect x="1175.6" y="443.0" width="482.0" height="3.6" fill="url(#o87)"/><rect x="1176.1" y="446.0" width="485.5" height="3.6" fill="url(#o88)"/><rect x="1176.7" y="449.0" width="488.9" height="3.6" fill="url(#o89)"/><rect x="1177.3" y="452.0" width="492.3" height="3.6" fill="url(#o90)"/><rect x="1177.9" y="455.0" width="495.7" height="3.6" fill="url(#o91)"/><rect x="1178.5" y="458.0" width="499.0" height="3.6" fill="url(#o92)"/><rect x="1179.0" y="461.0" width="502.4" height="3.6" fill="url(#o93)"/><rect x="1179.6" y="464.0" width="505.8" height="3.6" fill="url(#o94)"/><rect x="1180.2" y="467.0" width="509.1" height="3.6" fill="url(#o95)"/><rect x="1180.8" y="470.0" width="512.4" height="3.6" fill="url(#o96)"/><rect x="1181.5" y="473.0" width="515.7" height="3.6" fill="url(#o97)"/><rect x="1182.1" y="476.0" width="519.0" height="3.6" fill="url(#o98)"/><rect x="1182.8" y="479.0" width="522.4" height="3.6" fill="url(#o99)"/><rect x="1183.4" y="482.0" width="525.7" height="3.6" fill="url(#o100)"/><rect x="1184.1" y="485.0" width="529.0" height="3.6" fill="url(#o101)"/><rect x="1184.7" y="488.0" width="532.3" height="3.6" fill="url(#o102)"/><rect x="1185.4" y="491.0" width="535.5" height="3.6" fill="url(#o103)"/><rect x="1186.1" y="494.0" width="538.8" height="3.6" fill="url(#o104)"/><rect x="1186.9" y="497.0" width="542.0" height="3.6" fill="url(#o105)"/><rect x="1187.6" y="500.0" width="545.3" height="3.6" fill="url(#o106)"/><rect x="1188.3" y="503.0" width="548.5" height="3.6" fill="url(#o107)"/><rect x="1189.0" y="506.0" width="551.8" height="3.6" fill="url(#o108)"/><rect x="1189.7" y="509.0" width="555.1" height="3.6" fill="url(#o109)"/><rect x="1190.5" y="512.0" width="558.3" height="3.6" fill="url(#o110)"/><rect x="1191.3" y="515.0" width="561.5" height="3.6" fill="url(#o111)"/><rect x="1192.0" y="518.0" width="564.7" height="3.6" fill="url(#o112)"/><rect x="1192.8" y="521.0" width="567.9" height="3.6" fill="url(#o113)"/><rect x="1193.6" y="524.0" width="571.1" height="3.6" fill="url(#o114)"/><rect x="1194.4" y="527.0" width="574.2" height="3.6" fill="url(#o115)"/><rect x="1195.2" y="530.0" width="577.4" height="3.6" fill="url(#o116)"/><rect x="1196.0" y="533.0" width="580.5" height="3.6" fill="url(#o117)"/><rect x="1196.8" y="536.0" width="583.6" height="3.6" fill="url(#o118)"/><rect x="1197.6" y="539.0" width="586.8" height="3.6" fill="url(#o119)"/><rect x="1198.4" y="542.0" width="590.0" height="3.6" fill="url(#o120)"/><rect x="1199.3" y="545.0" width="593.1" height="3.6" fill="url(#o121)"/><rect x="1200.1" y="548.0" width="596.2" height="3.6" fill="url(#o122)"/><rect x="1201.0" y="551.0" width="599.2" height="3.6" fill="url(#o123)"/><rect x="1201.9" y="554.0" width="602.4" height="3.6" fill="url(#o124)"/><rect x="1202.8" y="557.0" width="605.5" height="3.6" fill="url(#o125)"/><rect x="1203.6" y="560.0" width="608.2" height="3.6" fill="url(#o126)"/><rect x="1204.5" y="563.0" width="606.5" height="3.6" fill="url(#o127)"/><rect x="1205.5" y="566.0" width="597.3" height="3.6" fill="url(#o128)"/><rect x="1206.4" y="569.0" width="588.0" height="3.6" fill="url(#o129)"/><rect x="1207.3" y="572.0" width="578.8" height="3.6" fill="url(#o130)"/><rect x="1208.3" y="575.0" width="569.6" height="3.6" fill="url(#o131)"/><rect x="1209.2" y="578.0" width="560.4" height="3.6" fill="url(#o132)"/><rect x="1210.2" y="581.0" width="551.1" height="3.6" fill="url(#o133)"/><rect x="1211.2" y="584.0" width="541.8" height="3.6" fill="url(#o134)"/><rect x="1212.3" y="587.0" width="532.5" height="3.6" fill="url(#o135)"/><rect x="1213.3" y="590.0" width="523.2" height="3.6" fill="url(#o136)"/><rect x="1214.3" y="593.0" width="513.9" height="3.6" fill="url(#o137)"/><rect x="1215.3" y="596.0" width="504.6" height="3.6" fill="url(#o138)"/><rect x="1216.4" y="599.0" width="495.3" height="3.6" fill="url(#o139)"/><rect x="1217.5" y="602.0" width="485.9" height="3.6" fill="url(#o140)"/><rect x="1218.6" y="605.0" width="476.5" height="3.6" fill="url(#o141)"/><rect x="1219.6" y="608.0" width="467.2" height="3.6" fill="url(#o142)"/><rect x="1220.8" y="611.0" width="457.8" height="3.6" fill="url(#o143)"/><rect x="1222.0" y="614.0" width="448.3" height="3.6" fill="url(#o144)"/><rect x="1223.1" y="617.0" width="438.8" height="3.6" fill="url(#o145)"/><rect x="1224.3" y="620.0" width="429.4" height="3.6" fill="url(#o146)"/><rect x="1225.5" y="623.0" width="419.9" height="3.6" fill="url(#o147)"/><rect x="1226.8" y="626.0" width="410.3" height="3.6" fill="url(#o148)"/><rect x="1228.1" y="629.0" width="400.7" height="3.6" fill="url(#o149)"/><rect x="1229.4" y="632.0" width="391.2" height="3.6" fill="url(#o150)"/><rect x="1230.7" y="635.0" width="381.6" height="3.6" fill="url(#o151)"/><rect x="1232.1" y="638.0" width="371.9" height="3.6" fill="url(#o152)"/><rect x="1233.5" y="641.0" width="362.3" height="3.6" fill="url(#o153)"/><rect x="1234.9" y="644.0" width="352.6" height="3.6" fill="url(#o154)"/><rect x="1236.3" y="647.0" width="342.9" height="3.6" fill="url(#o155)"/><rect x="1237.7" y="650.0" width="333.2" height="3.6" fill="url(#o156)"/><rect x="1239.1" y="653.0" width="323.5" height="3.6" fill="url(#o157)"/><rect x="1240.6" y="656.0" width="313.8" height="3.6" fill="url(#o158)"/><rect x="1242.0" y="659.0" width="304.1" height="3.6" fill="url(#o159)"/><rect x="1243.5" y="662.0" width="294.3" height="3.6" fill="url(#o160)"/><rect x="1245.0" y="665.0" width="284.6" height="3.6" fill="url(#o161)"/><rect x="1246.5" y="668.0" width="274.8" height="3.6" fill="url(#o162)"/><rect x="1248.1" y="671.0" width="264.9" height="3.6" fill="url(#o163)"/><rect x="1249.7" y="674.0" width="255.1" height="3.6" fill="url(#o164)"/><rect x="1251.3" y="677.0" width="245.1" height="3.6" fill="url(#o165)"/><rect x="1252.9" y="680.0" width="235.2" height="3.6" fill="url(#o166)"/><rect x="1254.6" y="683.0" width="225.3" height="3.6" fill="url(#o167)"/><rect x="1256.3" y="686.0" width="215.3" height="3.6" fill="url(#o168)"/><rect x="1258.1" y="689.0" width="205.2" height="3.6" fill="url(#o169)"/><rect x="1259.9" y="692.0" width="195.1" height="3.6" fill="url(#o170)"/><rect x="1261.9" y="695.0" width="184.9" height="3.6" fill="url(#o171)"/><rect x="1263.9" y="698.0" width="174.6" height="3.6" fill="url(#o172)"/><rect x="1265.9" y="701.0" width="164.3" height="3.6" fill="url(#o173)"/><rect x="1268.1" y="704.0" width="153.9" height="3.6" fill="url(#o174)"/><rect x="1270.3" y="707.0" width="143.4" height="3.6" fill="url(#o175)"/><rect x="1272.6" y="710.0" width="132.8" height="3.6" fill="url(#o176)"/><rect x="1275.1" y="713.0" width="122.0" height="3.6" fill="url(#o177)"/><rect x="1277.8" y="716.0" width="111.0" height="3.6" fill="url(#o178)"/><rect x="1280.6" y="719.0" width="99.9" height="3.6" fill="url(#o179)"/><rect x="1283.9" y="722.0" width="88.4" height="3.6" fill="url(#o180)"/><rect x="1287.4" y="725.0" width="76.6" height="3.6" fill="url(#o181)"/><rect x="1291.3" y="728.0" width="64.4" height="3.6" fill="url(#o182)"/><rect x="1295.6" y="731.0" width="51.8" height="3.6" fill="url(#o183)"/><rect x="1300.1" y="734.0" width="39.0" height="3.6" fill="url(#o184)"/><rect x="1304.7" y="737.0" width="26.2" height="3.6" fill="url(#o185)"/><rect x="1309.1" y="740.0" width="13.5" height="2.6" fill="url(#o186)"/></g>
<g clip-path="url(#ctri)"><rect x="1424.8" y="339.0" width="7.0" height="2.6" fill="url(#i0)"/><rect x="1424.1" y="341.0" width="11.0" height="2.6" fill="url(#i1)"/><rect x="1423.3" y="343.0" width="15.1" height="2.6" fill="url(#i2)"/><rect x="1422.6" y="345.0" width="19.1" height="2.6" fill="url(#i3)"/><rect x="1421.9" y="347.0" width="23.1" height="2.6" fill="url(#i4)"/><rect x="1421.2" y="349.0" width="27.2" height="2.6" fill="url(#i5)"/><rect x="1420.4" y="351.0" width="31.2" height="2.6" fill="url(#i6)"/><rect x="1419.7" y="353.0" width="35.3" height="2.6" fill="url(#i7)"/><rect x="1419.0" y="355.0" width="39.3" height="2.6" fill="url(#i8)"/><rect x="1418.2" y="357.0" width="43.4" height="2.6" fill="url(#i9)"/><rect x="1417.5" y="359.0" width="47.4" height="2.6" fill="url(#i10)"/><rect x="1416.8" y="361.0" width="51.4" height="2.6" fill="url(#i11)"/><rect x="1416.0" y="363.0" width="55.5" height="2.6" fill="url(#i12)"/><rect x="1415.3" y="365.0" width="59.5" height="2.6" fill="url(#i13)"/><rect x="1414.6" y="367.0" width="63.6" height="2.6" fill="url(#i14)"/><rect x="1413.8" y="369.0" width="67.6" height="2.6" fill="url(#i15)"/><rect x="1413.1" y="371.0" width="71.7" height="2.6" fill="url(#i16)"/><rect x="1412.4" y="373.0" width="75.7" height="2.6" fill="url(#i17)"/><rect x="1411.7" y="375.0" width="79.8" height="2.6" fill="url(#i18)"/><rect x="1410.9" y="377.0" width="83.8" height="2.6" fill="url(#i19)"/><rect x="1410.2" y="379.0" width="87.8" height="2.6" fill="url(#i20)"/><rect x="1409.5" y="381.0" width="91.9" height="2.6" fill="url(#i21)"/><rect x="1408.7" y="383.0" width="95.9" height="2.6" fill="url(#i22)"/><rect x="1408.0" y="385.0" width="100.0" height="2.6" fill="url(#i23)"/><rect x="1407.3" y="387.0" width="104.0" height="2.6" fill="url(#i24)"/><rect x="1406.5" y="389.0" width="108.1" height="2.6" fill="url(#i25)"/><rect x="1405.8" y="391.0" width="112.1" height="2.6" fill="url(#i26)"/><rect x="1405.1" y="393.0" width="116.1" height="2.6" fill="url(#i27)"/><rect x="1404.3" y="395.0" width="120.2" height="2.6" fill="url(#i28)"/><rect x="1403.6" y="397.0" width="124.2" height="2.6" fill="url(#i29)"/><rect x="1402.9" y="399.0" width="128.3" height="2.6" fill="url(#i30)"/><rect x="1402.2" y="401.0" width="132.3" height="2.6" fill="url(#i31)"/><rect x="1401.4" y="403.0" width="136.4" height="2.6" fill="url(#i32)"/><rect x="1400.7" y="405.0" width="140.4" height="2.6" fill="url(#i33)"/><rect x="1400.0" y="407.0" width="144.4" height="2.6" fill="url(#i34)"/><rect x="1399.2" y="409.0" width="148.5" height="2.6" fill="url(#i35)"/><rect x="1398.5" y="411.0" width="152.5" height="2.6" fill="url(#i36)"/><rect x="1397.8" y="413.0" width="156.6" height="2.6" fill="url(#i37)"/><rect x="1397.0" y="415.0" width="160.6" height="2.6" fill="url(#i38)"/><rect x="1396.3" y="417.0" width="164.7" height="2.6" fill="url(#i39)"/><rect x="1395.6" y="419.0" width="168.7" height="2.6" fill="url(#i40)"/><rect x="1394.8" y="421.0" width="172.7" height="2.6" fill="url(#i41)"/><rect x="1394.1" y="423.0" width="176.8" height="2.6" fill="url(#i42)"/><rect x="1393.4" y="425.0" width="180.8" height="2.6" fill="url(#i43)"/><rect x="1392.7" y="427.0" width="184.9" height="2.6" fill="url(#i44)"/><rect x="1391.9" y="429.0" width="188.9" height="2.6" fill="url(#i45)"/><rect x="1391.2" y="431.0" width="193.0" height="2.6" fill="url(#i46)"/><rect x="1390.5" y="433.0" width="197.0" height="2.6" fill="url(#i47)"/><rect x="1389.7" y="435.0" width="201.1" height="2.6" fill="url(#i48)"/><rect x="1389.0" y="437.0" width="205.1" height="2.6" fill="url(#i49)"/><rect x="1388.3" y="439.0" width="209.1" height="2.6" fill="url(#i50)"/><rect x="1387.5" y="441.0" width="213.2" height="2.6" fill="url(#i51)"/><rect x="1386.8" y="443.0" width="217.2" height="2.6" fill="url(#i52)"/><rect x="1386.1" y="445.0" width="221.3" height="2.6" fill="url(#i53)"/><rect x="1385.3" y="447.0" width="225.3" height="2.6" fill="url(#i54)"/><rect x="1384.6" y="449.0" width="229.4" height="2.6" fill="url(#i55)"/><rect x="1383.9" y="451.0" width="233.4" height="2.6" fill="url(#i56)"/><rect x="1383.2" y="453.0" width="237.4" height="2.6" fill="url(#i57)"/><rect x="1382.4" y="455.0" width="241.5" height="2.6" fill="url(#i58)"/><rect x="1381.7" y="457.0" width="245.5" height="2.6" fill="url(#i59)"/><rect x="1381.0" y="459.0" width="249.6" height="2.6" fill="url(#i60)"/><rect x="1380.2" y="461.0" width="253.6" height="2.6" fill="url(#i61)"/><rect x="1379.5" y="463.0" width="257.7" height="2.6" fill="url(#i62)"/><rect x="1378.8" y="465.0" width="261.7" height="2.6" fill="url(#i63)"/><rect x="1378.0" y="467.0" width="265.7" height="2.6" fill="url(#i64)"/><rect x="1377.3" y="469.0" width="269.8" height="2.6" fill="url(#i65)"/><rect x="1376.6" y="471.0" width="273.8" height="2.6" fill="url(#i66)"/><rect x="1375.8" y="473.0" width="277.9" height="2.6" fill="url(#i67)"/><rect x="1375.1" y="475.0" width="281.9" height="2.6" fill="url(#i68)"/><rect x="1374.4" y="477.0" width="286.0" height="2.6" fill="url(#i69)"/><rect x="1373.7" y="479.0" width="290.0" height="2.6" fill="url(#i70)"/><rect x="1372.9" y="481.0" width="294.0" height="2.6" fill="url(#i71)"/><rect x="1372.2" y="483.0" width="298.1" height="2.6" fill="url(#i72)"/><rect x="1371.5" y="485.0" width="302.1" height="2.6" fill="url(#i73)"/><rect x="1370.7" y="487.0" width="306.2" height="2.6" fill="url(#i74)"/><rect x="1370.0" y="489.0" width="310.2" height="2.6" fill="url(#i75)"/><rect x="1369.3" y="491.0" width="314.3" height="2.6" fill="url(#i76)"/><rect x="1368.5" y="493.0" width="318.3" height="2.6" fill="url(#i77)"/><rect x="1367.8" y="495.0" width="322.4" height="2.6" fill="url(#i78)"/><rect x="1367.1" y="497.0" width="326.4" height="2.6" fill="url(#i79)"/><rect x="1366.3" y="499.0" width="330.4" height="2.6" fill="url(#i80)"/><rect x="1365.6" y="501.0" width="334.5" height="2.6" fill="url(#i81)"/><rect x="1364.9" y="503.0" width="338.5" height="2.6" fill="url(#i82)"/><rect x="1364.2" y="505.0" width="342.6" height="2.6" fill="url(#i83)"/><rect x="1363.4" y="507.0" width="346.6" height="2.6" fill="url(#i84)"/><rect x="1362.7" y="509.0" width="350.7" height="2.6" fill="url(#i85)"/><rect x="1362.0" y="511.0" width="354.7" height="2.6" fill="url(#i86)"/><rect x="1361.2" y="513.0" width="358.7" height="2.6" fill="url(#i87)"/><rect x="1360.5" y="515.0" width="362.8" height="2.6" fill="url(#i88)"/><rect x="1359.8" y="517.0" width="366.8" height="2.6" fill="url(#i89)"/><rect x="1359.0" y="519.0" width="370.9" height="2.6" fill="url(#i90)"/><rect x="1358.3" y="521.0" width="373.7" height="2.6" fill="url(#i91)"/><rect x="1357.6" y="523.0" width="372.9" height="2.6" fill="url(#i92)"/><rect x="1356.8" y="525.0" width="368.8" height="2.6" fill="url(#i93)"/><rect x="1356.1" y="527.0" width="364.8" height="2.6" fill="url(#i94)"/><rect x="1355.4" y="529.0" width="360.7" height="2.6" fill="url(#i95)"/><rect x="1354.7" y="531.0" width="356.7" height="2.6" fill="url(#i96)"/><rect x="1353.9" y="533.0" width="352.6" height="2.6" fill="url(#i97)"/><rect x="1353.2" y="535.0" width="348.6" height="2.6" fill="url(#i98)"/><rect x="1352.5" y="537.0" width="344.6" height="2.6" fill="url(#i99)"/><rect x="1351.7" y="539.0" width="340.5" height="2.6" fill="url(#i100)"/><rect x="1351.0" y="541.0" width="336.5" height="2.6" fill="url(#i101)"/><rect x="1350.3" y="543.0" width="332.4" height="2.6" fill="url(#i102)"/><rect x="1349.5" y="545.0" width="328.4" height="2.6" fill="url(#i103)"/><rect x="1348.8" y="547.0" width="324.3" height="2.6" fill="url(#i104)"/><rect x="1348.1" y="549.0" width="320.3" height="2.6" fill="url(#i105)"/><rect x="1347.3" y="551.0" width="316.3" height="2.6" fill="url(#i106)"/><rect x="1346.6" y="553.0" width="312.2" height="2.6" fill="url(#i107)"/><rect x="1345.9" y="555.0" width="308.2" height="2.6" fill="url(#i108)"/><rect x="1345.2" y="557.0" width="304.1" height="2.6" fill="url(#i109)"/><rect x="1344.4" y="559.0" width="300.1" height="2.6" fill="url(#i110)"/><rect x="1343.7" y="561.0" width="296.0" height="2.6" fill="url(#i111)"/><rect x="1343.0" y="563.0" width="292.0" height="2.6" fill="url(#i112)"/><rect x="1342.2" y="565.0" width="288.0" height="2.6" fill="url(#i113)"/><rect x="1341.5" y="567.0" width="283.9" height="2.6" fill="url(#i114)"/><rect x="1340.8" y="569.0" width="279.9" height="2.6" fill="url(#i115)"/><rect x="1340.0" y="571.0" width="275.8" height="2.6" fill="url(#i116)"/><rect x="1339.3" y="573.0" width="271.8" height="2.6" fill="url(#i117)"/><rect x="1338.6" y="575.0" width="267.7" height="2.6" fill="url(#i118)"/><rect x="1337.8" y="577.0" width="263.7" height="2.6" fill="url(#i119)"/><rect x="1337.1" y="579.0" width="259.6" height="2.6" fill="url(#i120)"/><rect x="1336.4" y="581.0" width="255.6" height="2.6" fill="url(#i121)"/><rect x="1335.7" y="583.0" width="251.6" height="2.6" fill="url(#i122)"/><rect x="1334.9" y="585.0" width="247.5" height="2.6" fill="url(#i123)"/><rect x="1334.2" y="587.0" width="243.5" height="2.6" fill="url(#i124)"/><rect x="1333.5" y="589.0" width="239.4" height="2.6" fill="url(#i125)"/><rect x="1332.7" y="591.0" width="235.4" height="2.6" fill="url(#i126)"/><rect x="1332.0" y="593.0" width="231.3" height="2.6" fill="url(#i127)"/><rect x="1331.3" y="595.0" width="227.3" height="2.6" fill="url(#i128)"/><rect x="1330.5" y="597.0" width="223.3" height="2.6" fill="url(#i129)"/><rect x="1329.8" y="599.0" width="219.2" height="2.6" fill="url(#i130)"/><rect x="1329.1" y="601.0" width="215.2" height="2.6" fill="url(#i131)"/><rect x="1328.3" y="603.0" width="211.1" height="2.6" fill="url(#i132)"/><rect x="1327.6" y="605.0" width="207.1" height="2.6" fill="url(#i133)"/><rect x="1326.9" y="607.0" width="203.0" height="2.6" fill="url(#i134)"/><rect x="1326.2" y="609.0" width="199.0" height="2.6" fill="url(#i135)"/><rect x="1325.4" y="611.0" width="195.0" height="2.6" fill="url(#i136)"/><rect x="1324.7" y="613.0" width="190.9" height="2.6" fill="url(#i137)"/><rect x="1324.0" y="615.0" width="186.9" height="2.6" fill="url(#i138)"/><rect x="1323.2" y="617.0" width="182.8" height="2.6" fill="url(#i139)"/><rect x="1322.5" y="619.0" width="178.8" height="2.6" fill="url(#i140)"/><rect x="1321.8" y="621.0" width="174.7" height="2.6" fill="url(#i141)"/><rect x="1321.0" y="623.0" width="170.7" height="2.6" fill="url(#i142)"/><rect x="1320.3" y="625.0" width="166.6" height="2.6" fill="url(#i143)"/><rect x="1319.6" y="627.0" width="162.6" height="2.6" fill="url(#i144)"/><rect x="1318.8" y="629.0" width="158.6" height="2.6" fill="url(#i145)"/><rect x="1318.1" y="631.0" width="154.5" height="2.6" fill="url(#i146)"/><rect x="1317.4" y="633.0" width="150.5" height="2.6" fill="url(#i147)"/><rect x="1316.7" y="635.0" width="146.4" height="2.6" fill="url(#i148)"/><rect x="1315.9" y="637.0" width="142.4" height="2.6" fill="url(#i149)"/><rect x="1315.2" y="639.0" width="138.3" height="2.6" fill="url(#i150)"/><rect x="1314.5" y="641.0" width="134.3" height="2.6" fill="url(#i151)"/><rect x="1313.7" y="643.0" width="130.3" height="2.6" fill="url(#i152)"/><rect x="1313.0" y="645.0" width="126.2" height="2.6" fill="url(#i153)"/><rect x="1312.3" y="647.0" width="122.2" height="2.6" fill="url(#i154)"/><rect x="1311.5" y="649.0" width="118.1" height="2.6" fill="url(#i155)"/><rect x="1310.8" y="651.0" width="114.1" height="2.6" fill="url(#i156)"/><rect x="1310.1" y="653.0" width="110.0" height="2.6" fill="url(#i157)"/><rect x="1309.3" y="655.0" width="106.0" height="2.6" fill="url(#i158)"/><rect x="1308.6" y="657.0" width="102.0" height="2.6" fill="url(#i159)"/><rect x="1307.9" y="659.0" width="97.9" height="2.6" fill="url(#i160)"/><rect x="1307.2" y="661.0" width="93.9" height="2.6" fill="url(#i161)"/><rect x="1306.4" y="663.0" width="89.8" height="2.6" fill="url(#i162)"/><rect x="1305.7" y="665.0" width="85.8" height="2.6" fill="url(#i163)"/><rect x="1305.0" y="667.0" width="81.7" height="2.6" fill="url(#i164)"/><rect x="1304.2" y="669.0" width="77.7" height="2.6" fill="url(#i165)"/><rect x="1303.5" y="671.0" width="73.7" height="2.6" fill="url(#i166)"/><rect x="1302.8" y="673.0" width="69.6" height="2.6" fill="url(#i167)"/><rect x="1302.0" y="675.0" width="65.6" height="2.6" fill="url(#i168)"/><rect x="1301.3" y="677.0" width="61.5" height="2.6" fill="url(#i169)"/><rect x="1300.6" y="679.0" width="57.5" height="2.6" fill="url(#i170)"/><rect x="1299.8" y="681.0" width="53.4" height="2.6" fill="url(#i171)"/><rect x="1299.1" y="683.0" width="49.4" height="2.6" fill="url(#i172)"/><rect x="1298.4" y="685.0" width="45.3" height="2.6" fill="url(#i173)"/><rect x="1297.7" y="687.0" width="41.3" height="2.6" fill="url(#i174)"/><rect x="1296.9" y="689.0" width="37.3" height="2.6" fill="url(#i175)"/><rect x="1296.2" y="691.0" width="33.2" height="2.6" fill="url(#i176)"/><rect x="1295.5" y="693.0" width="29.2" height="2.6" fill="url(#i177)"/><rect x="1294.7" y="695.0" width="25.1" height="2.6" fill="url(#i178)"/><rect x="1294.0" y="697.0" width="21.1" height="2.6" fill="url(#i179)"/><rect x="1293.3" y="699.0" width="17.0" height="2.6" fill="url(#i180)"/><rect x="1292.5" y="701.0" width="13.0" height="2.6" fill="url(#i181)"/><rect x="1292.1" y="703.0" width="8.6" height="2.6" fill="url(#i182)"/></g>
<line x1="1162.30" y1="178.50" x2="1907.00" y2="178.50" stroke="#a0a0a0" stroke-width="2"/>
<line x1="1907.00" y1="178.50" x2="1907.00" y2="744.00" stroke="#a0a0a0" stroke-width="2"/>
<line x1="1162.30" y1="177.50" x2="1162.30" y2="751.00" stroke="#a0a0a0" stroke-width="2"/>
<line x1="1155.30" y1="744.00" x2="1908.00" y2="744.00" stroke="#a0a0a0" stroke-width="2"/>
<text x="1162.3" y="769" font-size="16.5" fill="#d6d6d6" text-anchor="middle">0</text>
<text x="1154.8" y="751.2" font-size="16.5" fill="#d6d6d6" text-anchor="end">0</text>
<line x1="1250.86" y1="744.00" x2="1250.86" y2="751.00" stroke="#e4e4e4" stroke-width="1.6"/>
<line x1="1155.30" y1="677.17" x2="1162.30" y2="677.17" stroke="#e4e4e4" stroke-width="1.6"/>
<text x="1250.86" y="769" font-size="16.5" fill="#d6d6d6" text-anchor="middle">0,1</text>
<text x="1154.8" y="683.87" font-size="16.5" fill="#d6d6d6" text-anchor="end">0,1</text>
<line x1="1339.42" y1="744.00" x2="1339.42" y2="751.00" stroke="#e4e4e4" stroke-width="1.6"/>
<line x1="1155.30" y1="609.84" x2="1162.30" y2="609.84" stroke="#e4e4e4" stroke-width="1.6"/>
<text x="1339.42" y="769" font-size="16.5" fill="#d6d6d6" text-anchor="middle">0,2</text>
<text x="1154.8" y="616.5400000000001" font-size="16.5" fill="#d6d6d6" text-anchor="end">0,2</text>
<line x1="1427.98" y1="744.00" x2="1427.98" y2="751.00" stroke="#e4e4e4" stroke-width="1.6"/>
<line x1="1155.30" y1="542.51" x2="1162.30" y2="542.51" stroke="#e4e4e4" stroke-width="1.6"/>
<text x="1427.98" y="769" font-size="16.5" fill="#d6d6d6" text-anchor="middle">0,3</text>
<text x="1154.8" y="549.21" font-size="16.5" fill="#d6d6d6" text-anchor="end">0,3</text>
<line x1="1516.54" y1="744.00" x2="1516.54" y2="751.00" stroke="#e4e4e4" stroke-width="1.6"/>
<line x1="1155.30" y1="475.18" x2="1162.30" y2="475.18" stroke="#e4e4e4" stroke-width="1.6"/>
<text x="1516.54" y="769" font-size="16.5" fill="#d6d6d6" text-anchor="middle">0,4</text>
<text x="1154.8" y="481.88" font-size="16.5" fill="#d6d6d6" text-anchor="end">0,4</text>
<line x1="1605.10" y1="744.00" x2="1605.10" y2="751.00" stroke="#e4e4e4" stroke-width="1.6"/>
<line x1="1155.30" y1="407.85" x2="1162.30" y2="407.85" stroke="#e4e4e4" stroke-width="1.6"/>
<text x="1605.1" y="769" font-size="16.5" fill="#d6d6d6" text-anchor="middle">0,5</text>
<text x="1154.8" y="414.55" font-size="16.5" fill="#d6d6d6" text-anchor="end">0,5</text>
<line x1="1693.66" y1="744.00" x2="1693.66" y2="751.00" stroke="#e4e4e4" stroke-width="1.6"/>
<line x1="1155.30" y1="340.52" x2="1162.30" y2="340.52" stroke="#e4e4e4" stroke-width="1.6"/>
<text x="1693.6599999999999" y="769" font-size="16.5" fill="#d6d6d6" text-anchor="middle">0,6</text>
<text x="1154.8" y="347.22" font-size="16.5" fill="#d6d6d6" text-anchor="end">0,6</text>
<line x1="1782.22" y1="744.00" x2="1782.22" y2="751.00" stroke="#e4e4e4" stroke-width="1.6"/>
<line x1="1155.30" y1="273.19" x2="1162.30" y2="273.19" stroke="#e4e4e4" stroke-width="1.6"/>
<text x="1782.2199999999998" y="769" font-size="16.5" fill="#d6d6d6" text-anchor="middle">0,7</text>
<text x="1154.8" y="279.89000000000004" font-size="16.5" fill="#d6d6d6" text-anchor="end">0,7</text>
<line x1="1870.78" y1="744.00" x2="1870.78" y2="751.00" stroke="#e4e4e4" stroke-width="1.6"/>
<line x1="1155.30" y1="205.86" x2="1162.30" y2="205.86" stroke="#e4e4e4" stroke-width="1.6"/>
<text x="1870.78" y="769" font-size="16.5" fill="#d6d6d6" text-anchor="middle">0,8</text>
<text x="1154.8" y="212.56" font-size="16.5" fill="#d6d6d6" text-anchor="end">0,8</text>
<rect x="1644.50" y="182.50" width="261.50" height="219.00" fill="#2a2a2a"/>
<rect x="1646.50" y="185.20" width="254.50" height="214.80" fill="#8e8e8e"/>
<rect x="1648.0" y="187.0" width="251.5" height="6.6" fill="url(#z0)"/><rect x="1648.0" y="193.0" width="251.5" height="6.6" fill="url(#z1)"/><rect x="1648.0" y="199.0" width="251.5" height="6.6" fill="url(#z2)"/><rect x="1648.0" y="205.0" width="251.5" height="6.6" fill="url(#z3)"/><rect x="1648.0" y="211.0" width="251.5" height="6.6" fill="url(#z4)"/><rect x="1648.0" y="217.0" width="251.5" height="6.6" fill="url(#z5)"/><rect x="1648.0" y="223.0" width="251.5" height="6.6" fill="url(#z6)"/><rect x="1648.0" y="229.0" width="251.5" height="6.6" fill="url(#z7)"/><rect x="1648.0" y="235.0" width="251.5" height="6.6" fill="url(#z8)"/><rect x="1648.0" y="241.0" width="251.5" height="6.6" fill="url(#z9)"/><rect x="1648.0" y="247.0" width="251.5" height="6.6" fill="url(#z10)"/><rect x="1648.0" y="253.0" width="251.5" height="6.6" fill="url(#z11)"/><rect x="1648.0" y="259.0" width="251.5" height="6.6" fill="url(#z12)"/><rect x="1648.0" y="265.0" width="251.5" height="6.6" fill="url(#z13)"/><rect x="1648.0" y="271.0" width="251.5" height="6.6" fill="url(#z14)"/><rect x="1648.0" y="277.0" width="251.5" height="6.6" fill="url(#z15)"/><rect x="1648.0" y="283.0" width="251.5" height="6.6" fill="url(#z16)"/><rect x="1648.0" y="289.0" width="251.5" height="6.6" fill="url(#z17)"/><rect x="1648.0" y="295.0" width="251.5" height="6.6" fill="url(#z18)"/><rect x="1648.0" y="301.0" width="251.5" height="6.6" fill="url(#z19)"/><rect x="1648.0" y="307.0" width="251.5" height="6.6" fill="url(#z20)"/><rect x="1648.0" y="313.0" width="251.5" height="6.6" fill="url(#z21)"/><rect x="1648.0" y="319.0" width="251.5" height="6.6" fill="url(#z22)"/><rect x="1648.0" y="325.0" width="251.5" height="6.6" fill="url(#z23)"/><rect x="1648.0" y="331.0" width="251.5" height="6.6" fill="url(#z24)"/><rect x="1648.0" y="337.0" width="251.5" height="6.6" fill="url(#z25)"/><rect x="1648.0" y="343.0" width="251.5" height="6.6" fill="url(#z26)"/><rect x="1648.0" y="349.0" width="251.5" height="6.6" fill="url(#z27)"/><rect x="1648.0" y="355.0" width="251.5" height="6.6" fill="url(#z28)"/><rect x="1648.0" y="361.0" width="251.5" height="6.6" fill="url(#z29)"/><rect x="1648.0" y="367.0" width="251.5" height="6.6" fill="url(#z30)"/><rect x="1648.0" y="373.0" width="251.5" height="6.6" fill="url(#z31)"/><rect x="1648.0" y="379.0" width="251.5" height="6.6" fill="url(#z32)"/><rect x="1648.0" y="385.0" width="251.5" height="6.6" fill="url(#z33)"/><rect x="1648.0" y="391.0" width="251.5" height="6.6" fill="url(#z34)"/><rect x="1648.0" y="397.0" width="251.5" height="2.1" fill="url(#z35)"/>
<rect x="1487.6" y="512.8" width="16" height="16" fill="#efbcbc" fill-opacity="0.38" stroke="#ffffff" stroke-width="1.5"/>
<rect x="1546.6" y="512.8" width="16" height="16" fill="#f38d8d" fill-opacity="0.38" stroke="#ffffff" stroke-width="1.5"/>
<rect x="1600.0" y="512.8" width="16" height="16" fill="#f75e5e" fill-opacity="0.38" stroke="#ffffff" stroke-width="1.5"/>
<rect x="1656.3" y="512.8" width="16" height="16" fill="#fb2f2f" fill-opacity="0.38" stroke="#ffffff" stroke-width="1.5"/>
<rect x="1720.8" y="512.8" width="16" height="16" fill="#ff0000" fill-opacity="0.38" stroke="#ffffff" stroke-width="1.5"/>
<rect x="1428.2" y="476.7" width="16" height="16" fill="#bcefbc" fill-opacity="0.38" stroke="#ffffff" stroke-width="1.5"/>
<rect x="1426.3" y="440.7" width="16" height="16" fill="#8df38d" fill-opacity="0.38" stroke="#ffffff" stroke-width="1.5"/>
<rect x="1423.3" y="406.0" width="16" height="16" fill="#5ef75e" fill-opacity="0.38" stroke="#ffffff" stroke-width="1.5"/>
<rect x="1421.6" y="370.1" width="16" height="16" fill="#2ffb2f" fill-opacity="0.38" stroke="#ffffff" stroke-width="1.5"/>
<rect x="1418.2" y="330.9" width="16" height="16" fill="#00ff00" fill-opacity="0.38" stroke="#ffffff" stroke-width="1.5"/>
<rect x="1401.2" y="550.5" width="16" height="16" fill="#bcbcef" fill-opacity="0.38" stroke="#ffffff" stroke-width="1.5"/>
<rect x="1373.3" y="586.3" width="16" height="16" fill="#8d8df3" fill-opacity="0.38" stroke="#ffffff" stroke-width="1.5"/>
<rect x="1345.4" y="620.9" width="16" height="16" fill="#5e5ef7" fill-opacity="0.38" stroke="#ffffff" stroke-width="1.5"/>
<rect x="1316.7" y="655.2" width="16" height="16" fill="#2f2ffb" fill-opacity="0.38" stroke="#ffffff" stroke-width="1.5"/>
<rect x="1285.6" y="694.3" width="16" height="16" fill="#0000ff" fill-opacity="0.38" stroke="#ffffff" stroke-width="1.5"/>
<rect x="1415.2" y="514.0" width="16" height="16" fill="#bcefef" fill-opacity="0.38" stroke="#ffffff" stroke-width="1.5"/>
<rect x="1399.4" y="514.0" width="16" height="16" fill="#8df3f3" fill-opacity="0.38" stroke="#ffffff" stroke-width="1.5"/>
<rect x="1383.7" y="514.0" width="16" height="16" fill="#5ef7f7" fill-opacity="0.38" stroke="#ffffff" stroke-width="1.5"/>
<rect x="1368.2" y="514.0" width="16" height="16" fill="#2ffbfb" fill-opacity="0.38" stroke="#ffffff" stroke-width="1.5"/>
<rect x="1352.2" y="514.0" width="16" height="16" fill="#00ffff" fill-opacity="0.38" stroke="#ffffff" stroke-width="1.5"/>
<rect x="1432.8" y="537.8" width="16" height="16" fill="#efbcef" fill-opacity="0.38" stroke="#ffffff" stroke-width="1.5"/>
<rect x="1434.6" y="562.8" width="16" height="16" fill="#f38df3" fill-opacity="0.38" stroke="#ffffff" stroke-width="1.5"/>
<rect x="1434.6" y="583.5" width="16" height="16" fill="#f75ef7" fill-opacity="0.38" stroke="#ffffff" stroke-width="1.5"/>
<rect x="1435.6" y="606.7" width="16" height="16" fill="#fb2ffb" fill-opacity="0.38" stroke="#ffffff" stroke-width="1.5"/>
<rect x="1437.5" y="631.6" width="16" height="16" fill="#ff00ff" fill-opacity="0.38" stroke="#ffffff" stroke-width="1.5"/>
<rect x="1449.9" y="488.8" width="16" height="16" fill="#efefbc" fill-opacity="0.38" stroke="#ffffff" stroke-width="1.5"/>
<rect x="1468.6" y="464.5" width="16" height="16" fill="#f3f38d" fill-opacity="0.38" stroke="#ffffff" stroke-width="1.5"/>
<rect x="1487.3" y="442.2" width="16" height="16" fill="#f7f75e" fill-opacity="0.38" stroke="#ffffff" stroke-width="1.5"/>
<rect x="1505.0" y="420.5" width="16" height="16" fill="#fbfb2f" fill-opacity="0.38" stroke="#ffffff" stroke-width="1.5"/>
<rect x="1524.8" y="395.0" width="16" height="16" fill="#ffff00" fill-opacity="0.38" stroke="#ffffff" stroke-width="1.5"/>
<circle cx="1495.0" cy="522.3" r="5" fill="#b49c95" fill-opacity="0.88" stroke="#101010" stroke-width="1.5"/>
<circle cx="1556.4" cy="522.0" r="5" fill="#b58a84" fill-opacity="0.88" stroke="#101010" stroke-width="1.5"/>
<circle cx="1612.8" cy="520.4" r="5" fill="#b5736e" fill-opacity="0.88" stroke="#101010" stroke-width="1.5"/>
<circle cx="1671.8" cy="520.4" r="5" fill="#b65854" fill-opacity="0.88" stroke="#101010" stroke-width="1.5"/>
<circle cx="1736.1" cy="518.8" r="5" fill="#b63a37" fill-opacity="0.88" stroke="#101010" stroke-width="1.5"/>
<circle cx="1435.7" cy="487.5" r="5" fill="#9cb495" fill-opacity="0.88" stroke="#101010" stroke-width="1.5"/>
<circle cx="1434.3" cy="450.2" r="5" fill="#8ab584" fill-opacity="0.88" stroke="#101010" stroke-width="1.5"/>
<circle cx="1431.9" cy="414.0" r="5" fill="#73b56e" fill-opacity="0.88" stroke="#101010" stroke-width="1.5"/>
<circle cx="1429.6" cy="376.6" r="5" fill="#58b654" fill-opacity="0.88" stroke="#101010" stroke-width="1.5"/>
<circle cx="1428.1" cy="336.4" r="5" fill="#3ab637" fill-opacity="0.88" stroke="#101010" stroke-width="1.5"/>
<circle cx="1407.7" cy="561.7" r="5" fill="#9c9cae" fill-opacity="0.88" stroke="#101010" stroke-width="1.5"/>
<circle cx="1377.9" cy="599.1" r="5" fill="#8a8aaf" fill-opacity="0.88" stroke="#101010" stroke-width="1.5"/>
<circle cx="1350.2" cy="633.6" r="5" fill="#7373b0" fill-opacity="0.88" stroke="#101010" stroke-width="1.5"/>
<circle cx="1321.9" cy="667.9" r="5" fill="#5858b2" fill-opacity="0.88" stroke="#101010" stroke-width="1.5"/>
<circle cx="1294.5" cy="701.5" r="4.3" fill="#3a3ab4" fill-opacity="0.88" stroke="#101010" stroke-width="1.5"/>
<circle cx="1421.9" cy="525.5" r="5" fill="#9cb4ae" fill-opacity="0.88" stroke="#101010" stroke-width="1.5"/>
<circle cx="1406.2" cy="525.5" r="5" fill="#8ab5af" fill-opacity="0.88" stroke="#101010" stroke-width="1.5"/>
<circle cx="1390.4" cy="525.5" r="5" fill="#73b5b0" fill-opacity="0.88" stroke="#101010" stroke-width="1.5"/>
<circle cx="1374.9" cy="527.4" r="5" fill="#58b6b2" fill-opacity="0.88" stroke="#101010" stroke-width="1.5"/>
<circle cx="1359.1" cy="527.4" r="5" fill="#3ab6b4" fill-opacity="0.88" stroke="#101010" stroke-width="1.5"/>
<circle cx="1437.4" cy="549.1" r="5" fill="#b49cae" fill-opacity="0.88" stroke="#101010" stroke-width="1.5"/>
<circle cx="1438.9" cy="574.2" r="5" fill="#b58aaf" fill-opacity="0.88" stroke="#101010" stroke-width="1.5"/>
<circle cx="1438.9" cy="594.3" r="5" fill="#b573b0" fill-opacity="0.88" stroke="#101010" stroke-width="1.5"/>
<circle cx="1440.4" cy="617.5" r="5" fill="#b658b2" fill-opacity="0.88" stroke="#101010" stroke-width="1.5"/>
<circle cx="1440.8" cy="641.1" r="5" fill="#b63ab4" fill-opacity="0.88" stroke="#101010" stroke-width="1.5"/>
<circle cx="1456.4" cy="500.2" r="5" fill="#b4b495" fill-opacity="0.88" stroke="#101010" stroke-width="1.5"/>
<circle cx="1476.4" cy="475.1" r="5" fill="#b5b584" fill-opacity="0.88" stroke="#101010" stroke-width="1.5"/>
<circle cx="1496.6" cy="450.2" r="5" fill="#b5b56e" fill-opacity="0.88" stroke="#101010" stroke-width="1.5"/>
<circle cx="1514.2" cy="426.6" r="5" fill="#b6b654" fill-opacity="0.88" stroke="#101010" stroke-width="1.5"/>
<circle cx="1534.3" cy="401.5" r="5" fill="#b6b637" fill-opacity="0.88" stroke="#101010" stroke-width="1.5"/>
<rect x="1430.5" y="513.5" width="17" height="17" fill="none" stroke="#000000" stroke-width="1.9"/>
<circle cx="1435.7" cy="525.6" r="5" fill="#ffffff" fill-opacity="1" stroke="#101010" stroke-width="1.5"/>
<rect x="1679.6" y="283.0" width="16" height="16" fill="#ffffff" fill-opacity="0.12" stroke="#ffffff" stroke-width="1.5"/>
<rect x="1764.0" y="283.0" width="16" height="16" fill="#ffffff" fill-opacity="0.12" stroke="#ffffff" stroke-width="1.5"/>
<rect x="1856.2" y="283.0" width="16" height="16" fill="none" stroke="#000000" stroke-width="1.9"/>
<circle cx="1680.8" cy="316.1" r="5" fill="#a8bcbc" fill-opacity="1" stroke="#101010" stroke-width="1.5"/>
<circle cx="1765.4" cy="314.5" r="5" fill="#a8bcbc" fill-opacity="1" stroke="#101010" stroke-width="1.5"/>
<circle cx="1848.1" cy="311.6" r="5" fill="#ffffff" fill-opacity="1" stroke="#101010" stroke-width="1.5"/>
<text x="17" y="852" font-size="32.4" fill="#f2f2f2" textLength="253" lengthAdjust="spacingAndGlyphs">Current Reading</text>
<text x="17" y="901" font-size="27.8" fill="#f2f2f2" textLength="119" lengthAdjust="spacingAndGlyphs">x: 0,2932</text>
<text x="17" y="948" font-size="27.8" fill="#f2f2f2" textLength="119" lengthAdjust="spacingAndGlyphs">y: 0,3235</text>
<text x="17" y="995.5" font-size="27.8" fill="#f2f2f2" textLength="112" lengthAdjust="spacingAndGlyphs">fL: 89,52</text>
<text x="17" y="1042.5" font-size="27.8" fill="#f2f2f2" textLength="168" lengthAdjust="spacingAndGlyphs">cd/m&#178;: 306,7</text>
<rect x="411.50" y="829.00" width="286.50" height="208.50" fill="#242424"/>
<text x="537" y="823" font-size="15.5" fill="#d6d6d6" text-anchor="middle" textLength="96" lengthAdjust="spacingAndGlyphs">RGB Balance</text>
<line x1="411.50" y1="850.70" x2="698.00" y2="850.70" stroke="#8a8a8a" stroke-width="1.5"/>
<line x1="405.50" y1="850.70" x2="411.50" y2="850.70" stroke="#dcdcdc" stroke-width="1.6"/>
<text x="403.7" y="856.3000000000001" font-size="15.6" fill="#d6d6d6" text-anchor="end" textLength="27" lengthAdjust="spacingAndGlyphs">104</text>
<line x1="411.50" y1="892.40" x2="698.00" y2="892.40" stroke="#8a8a8a" stroke-width="1.5"/>
<line x1="405.50" y1="892.40" x2="411.50" y2="892.40" stroke="#dcdcdc" stroke-width="1.6"/>
<text x="403.7" y="898.0" font-size="15.6" fill="#d6d6d6" text-anchor="end" textLength="27" lengthAdjust="spacingAndGlyphs">102</text>
<line x1="411.50" y1="934.00" x2="698.00" y2="934.00" stroke="#8a8a8a" stroke-width="1.5"/>
<line x1="405.50" y1="934.00" x2="411.50" y2="934.00" stroke="#dcdcdc" stroke-width="1.6"/>
<text x="403.7" y="939.6" font-size="15.6" fill="#d6d6d6" text-anchor="end" textLength="27" lengthAdjust="spacingAndGlyphs">100</text>
<line x1="411.50" y1="975.60" x2="698.00" y2="975.60" stroke="#8a8a8a" stroke-width="1.5"/>
<line x1="405.50" y1="975.60" x2="411.50" y2="975.60" stroke="#dcdcdc" stroke-width="1.6"/>
<text x="403.7" y="981.2" font-size="15.6" fill="#d6d6d6" text-anchor="end" textLength="18" lengthAdjust="spacingAndGlyphs">98</text>
<line x1="411.50" y1="1017.20" x2="698.00" y2="1017.20" stroke="#8a8a8a" stroke-width="1.5"/>
<line x1="405.50" y1="1017.20" x2="411.50" y2="1017.20" stroke="#dcdcdc" stroke-width="1.6"/>
<text x="403.7" y="1022.8000000000001" font-size="15.6" fill="#d6d6d6" text-anchor="end" textLength="18" lengthAdjust="spacingAndGlyphs">96</text>
<rect x="410.50" y="827.80" width="288.50" height="2.40" fill="#9c9c9c"/>
<line x1="411.50" y1="829.00" x2="411.50" y2="1043.50" stroke="#a0a0a0" stroke-width="2"/>
<line x1="698.00" y1="829.00" x2="698.00" y2="1043.50" stroke="#a0a0a0" stroke-width="2"/>
<line x1="411.50" y1="1037.50" x2="698.00" y2="1037.50" stroke="#a0a0a0" stroke-width="2"/>
<text x="555" y="1055" font-size="15.5" fill="#d6d6d6" text-anchor="middle">20%</text>
<rect x="438.10" y="912.40" width="76.90" height="124.10" fill="#000000"/>
<rect x="439.40" y="913.70" width="74.30" height="122.60" fill="url(#gr)"/>
<rect x="515.00" y="930.10" width="76.80" height="106.40" fill="#000000"/>
<rect x="516.30" y="931.40" width="74.20" height="104.90" fill="url(#gg)"/>
<rect x="591.90" y="896.70" width="76.80" height="139.80" fill="#000000"/>
<rect x="593.20" y="898.00" width="74.20" height="138.30" fill="url(#gbl)"/>
<text x="28.5" y="194.2" font-size="45.3" fill="#f2f2f2" textLength="373.5" lengthAdjust="spacingAndGlyphs">Saturation Sweeps</text>
<rect x="721.00" y="800.60" width="840.00" height="235.40" fill="#141414"/>
<rect x="723.20" y="802.60" width="835.60" height="34.60" fill="url(#gth)"/>
<text x="1031.8" y="827.6" font-size="18.2" fill="#f0f0f0" text-anchor="end" textLength="46.6" lengthAdjust="spacingAndGlyphs">20%</text>
<text x="1153.8" y="827.6" font-size="18.2" fill="#f0f0f0" text-anchor="end" textLength="46.6" lengthAdjust="spacingAndGlyphs">40%</text>
<text x="1276.3" y="827.6" font-size="18.2" fill="#f0f0f0" text-anchor="end" textLength="46.6" lengthAdjust="spacingAndGlyphs">60%</text>
<text x="1398.3" y="827.6" font-size="18.2" fill="#f0f0f0" text-anchor="end" textLength="46.6" lengthAdjust="spacingAndGlyphs">80%</text>
<text x="1528.3" y="827.6" font-size="18.2" fill="#f0f0f0" text-anchor="end" textLength="59.5" lengthAdjust="spacingAndGlyphs">100%</text>
<rect x="722.50" y="837.00" width="837.00" height="32.10" fill="#424242"/>
<text x="744.2" y="861.9" font-size="20.8" fill="#f2f2f2" font-weight="bold" textLength="99" lengthAdjust="spacingAndGlyphs">x: CIE31</text>
<text x="954.5" y="861.9" font-size="20.8" fill="#f4f4f4" textLength="78.5" lengthAdjust="spacingAndGlyphs">0,2932</text>
<text x="1076.7" y="861.9" font-size="20.8" fill="#f4f4f4" textLength="78.5" lengthAdjust="spacingAndGlyphs">0,2761</text>
<text x="1198.9" y="861.9" font-size="20.8" fill="#f4f4f4" textLength="78.5" lengthAdjust="spacingAndGlyphs">0,2579</text>
<text x="1321.1" y="861.9" font-size="20.8" fill="#f4f4f4" textLength="78.5" lengthAdjust="spacingAndGlyphs">0,2402</text>
<text x="1443.3" y="861.9" font-size="20.8" fill="#f4f4f4" textLength="78.5" lengthAdjust="spacingAndGlyphs">0,2228</text>
<rect x="722.50" y="869.70" width="837.00" height="32.10" fill="#7a7a7a"/>
<text x="744.2" y="894.6" font-size="20.8" fill="#f2f2f2" font-weight="bold" textLength="99" lengthAdjust="spacingAndGlyphs">y: CIE31</text>
<text x="954.5" y="894.6" font-size="20.8" fill="#e6e6e6" textLength="78.5" lengthAdjust="spacingAndGlyphs">0,3235</text>
<text x="1076.7" y="894.6" font-size="20.8" fill="#e6e6e6" textLength="78.5" lengthAdjust="spacingAndGlyphs">0,3232</text>
<text x="1198.9" y="894.6" font-size="20.8" fill="#e6e6e6" textLength="78.5" lengthAdjust="spacingAndGlyphs">0,3222</text>
<text x="1321.1" y="894.6" font-size="20.8" fill="#e6e6e6" textLength="78.5" lengthAdjust="spacingAndGlyphs">0,3214</text>
<text x="1443.3" y="894.6" font-size="20.8" fill="#e6e6e6" textLength="78.5" lengthAdjust="spacingAndGlyphs">0,3212</text>
<rect x="722.50" y="902.40" width="837.00" height="32.10" fill="#424242"/>
<text x="744.2" y="927.3" font-size="20.8" fill="#f2f2f2" font-weight="bold" textLength="13" lengthAdjust="spacingAndGlyphs">Y</text>
<text x="954.5" y="927.3" font-size="20.8" fill="#f4f4f4" textLength="107" lengthAdjust="spacingAndGlyphs">306,7036</text>
<text x="1076.7" y="927.3" font-size="20.8" fill="#f4f4f4" textLength="107" lengthAdjust="spacingAndGlyphs">292,7000</text>
<text x="1198.9" y="927.3" font-size="20.8" fill="#f4f4f4" textLength="107" lengthAdjust="spacingAndGlyphs">277,3670</text>
<text x="1321.1" y="927.3" font-size="20.8" fill="#f4f4f4" textLength="107" lengthAdjust="spacingAndGlyphs">264,7890</text>
<text x="1443.3" y="927.3" font-size="20.8" fill="#f4f4f4" textLength="107" lengthAdjust="spacingAndGlyphs">252,8224</text>
<rect x="722.50" y="935.10" width="837.00" height="32.10" fill="#7a7a7a"/>
<text x="744.2" y="960.0" font-size="20.8" fill="#f2f2f2" font-weight="bold" textLength="180" lengthAdjust="spacingAndGlyphs">Target x:CIE31</text>
<text x="954.5" y="960.0" font-size="20.8" fill="#e6e6e6" textLength="78.5" lengthAdjust="spacingAndGlyphs">0,2945</text>
<text x="1076.7" y="960.0" font-size="20.8" fill="#e6e6e6" textLength="78.5" lengthAdjust="spacingAndGlyphs">0,2776</text>
<text x="1198.9" y="960.0" font-size="20.8" fill="#e6e6e6" textLength="78.5" lengthAdjust="spacingAndGlyphs">0,2596</text>
<text x="1321.1" y="960.0" font-size="20.8" fill="#e6e6e6" textLength="78.5" lengthAdjust="spacingAndGlyphs">0,2428</text>
<text x="1443.3" y="960.0" font-size="20.8" fill="#e6e6e6" textLength="78.5" lengthAdjust="spacingAndGlyphs">0,2247</text>
<rect x="722.50" y="967.80" width="837.00" height="32.10" fill="#424242"/>
<text x="744.2" y="992.6999999999999" font-size="20.8" fill="#f2f2f2" font-weight="bold" textLength="180" lengthAdjust="spacingAndGlyphs">Target y:CIE31</text>
<text x="954.5" y="992.6999999999999" font-size="20.8" fill="#f4f4f4" textLength="78.5" lengthAdjust="spacingAndGlyphs">0,3290</text>
<text x="1076.7" y="992.6999999999999" font-size="20.8" fill="#f4f4f4" textLength="78.5" lengthAdjust="spacingAndGlyphs">0,3289</text>
<text x="1198.9" y="992.6999999999999" font-size="20.8" fill="#f4f4f4" textLength="78.5" lengthAdjust="spacingAndGlyphs">0,3288</text>
<text x="1321.1" y="992.6999999999999" font-size="20.8" fill="#f4f4f4" textLength="78.5" lengthAdjust="spacingAndGlyphs">0,3288</text>
<text x="1443.3" y="992.6999999999999" font-size="20.8" fill="#f4f4f4" textLength="78.5" lengthAdjust="spacingAndGlyphs">0,3287</text>
<rect x="722.50" y="1000.50" width="837.00" height="32.10" fill="#7a7a7a"/>
<text x="744.2" y="1025.4" font-size="20.8" fill="#f2f2f2" font-weight="bold" textLength="105" lengthAdjust="spacingAndGlyphs">Target Y</text>
<text x="954.5" y="1025.4" font-size="20.8" fill="#e6e6e6" textLength="107" lengthAdjust="spacingAndGlyphs">302,5641</text>
<text x="1076.7" y="1025.4" font-size="20.8" fill="#e6e6e6" textLength="107" lengthAdjust="spacingAndGlyphs">288,4271</text>
<text x="1198.9" y="1025.4" font-size="20.8" fill="#e6e6e6" textLength="107" lengthAdjust="spacingAndGlyphs">274,7026</text>
<text x="1321.1" y="1025.4" font-size="20.8" fill="#e6e6e6" textLength="107" lengthAdjust="spacingAndGlyphs">263,0679</text>
<text x="1443.3" y="1025.4" font-size="20.8" fill="#e6e6e6" textLength="107" lengthAdjust="spacingAndGlyphs">251,5084</text>
<rect x="0.00" y="1113.00" width="1920.00" height="53.00" fill="url(#gbot)"/>
<rect x="2.2" y="1113.2" width="36.8" height="51" rx="3" fill="url(#gcell)"/>
<circle cx="20.5" cy="1120.5" r="5.6" fill="#6a6a6a"/>
<path d="M16.6,1122.6 L20.5,1118 L24.4,1122.6Z" fill="#1c1c1c"/>
<rect x="6.5" y="1135.5" width="29" height="25" rx="1.5" fill="#00ffff"/>
<rect x="45.0" y="1113.2" width="125" height="51" rx="3" fill="url(#gsel)"/>
<rect x="48.5" y="1117" width="118" height="30.5" rx="3" fill="#a9c0c1" stroke="#111" stroke-width="1"/>
<text x="107.5" y="1160" font-size="8.6" fill="#b8b8b8" text-anchor="middle" font-weight="bold">20%</text>
<rect x="172.3" y="1113.2" width="125.5" height="51" rx="3.5" fill="url(#gcell)"/>
<rect x="176.5" y="1117.6" width="117" height="29.5" rx="2.5" fill="#92bfc0" stroke="#7d8f90" stroke-width="1"/>
<text x="234.8" y="1160" font-size="8.6" fill="#a8a8a8" text-anchor="middle" font-weight="bold">40%</text>
<rect x="299.6" y="1113.2" width="125.5" height="51" rx="3.5" fill="url(#gcell)"/>
<rect x="303.8" y="1117.6" width="117" height="29.5" rx="2.5" fill="#78bfc0" stroke="#7d8f90" stroke-width="1"/>
<text x="362.1" y="1160" font-size="8.6" fill="#a8a8a8" text-anchor="middle" font-weight="bold">60%</text>
<rect x="426.9" y="1113.2" width="125.5" height="51" rx="3.5" fill="url(#gcell)"/>
<rect x="431.1" y="1117.6" width="117" height="29.5" rx="2.5" fill="#55bfc1" stroke="#7d8f90" stroke-width="1"/>
<text x="489.4" y="1160" font-size="8.6" fill="#a8a8a8" text-anchor="middle" font-weight="bold">80%</text>
<rect x="554.2" y="1113.2" width="125.5" height="51" rx="3.5" fill="url(#gcell)"/>
<rect x="558.4" y="1117.6" width="117" height="29.5" rx="2.5" fill="#00c0c2" stroke="#7d8f90" stroke-width="1"/>
<text x="616.7" y="1160" font-size="8.6" fill="#a8a8a8" text-anchor="middle" font-weight="bold">100%</text>
<path d="M1648.7,1164 V1116 Q1648.7,1113 1651.7,1113 H1686 Q1689,1113 1689,1116 V1164Z" fill="url(#gcell)"/>
<line x1="1648.70" y1="1128.30" x2="1689.00" y2="1128.30" stroke="#5a5a5a" stroke-width="1"/>
<line x1="1648.70" y1="1129.30" x2="1689.00" y2="1129.30" stroke="#a0a0a0" stroke-width="1" opacity=".5"/>
<circle cx="1669" cy="1120.3" r="5.6" fill="#6e6e6e"/>
<path d="M1665,1122.3 L1669,1117.6 L1673,1122.3Z" fill="#1c1c1c"/>
<rect x="1656.7" y="1134.3" width="23.6" height="23.6" rx="3" fill="#8c8c8c" stroke="#1a1a1a" stroke-width="1.8"/>
<rect x="1663" y="1140.6" width="11.2" height="11.2" fill="#0a0a0a"/><rect x="1663" y="1140.6" width="11.2" height="5" fill="#2c2c2c"/>
<rect x="1690.3" y="1113" width="37" height="24.8" fill="url(#gctl)"/>
<circle cx="1709.1" cy="1125.4" r="8.3" fill="#9a9a9a" opacity=".55"/>
<rect x="1705.9" y="1122.2" width="6.4" height="6.4" fill="#1c1c1c"/>
<rect x="1728.0" y="1113" width="37" height="24.8" fill="url(#gctl)"/>
<circle cx="1746.8" cy="1125.4" r="8.3" fill="#9a9a9a" opacity=".55"/>
<path d="M1744.0,1121.2 L1751.0,1125.4 L1744.0,1129.6000000000001Z" fill="#1c1c1c"/>
<rect x="1765.8" y="1113" width="37" height="24.8" fill="url(#gctl)"/>
<circle cx="1784.6" cy="1125.4" r="8.3" fill="#9a9a9a" opacity=".55"/>
<path d="M1782.0,1121.4 H1780.0 V1129.4 H1782.0 M1787.2,1121.4 H1789.2 V1129.4 H1787.2 M1782.6,1125.4 H1786.6" stroke="#1c1c1c" stroke-width="1.4" fill="none" stroke-dasharray="none"/>
<rect x="1803.5" y="1113" width="37" height="24.8" fill="url(#gctl)"/>
<circle cx="1822.3" cy="1125.4" r="8.3" fill="#9a9a9a" opacity=".55"/>
<path d="M1822.3,1125.4 C1820.3,1121.8000000000002 1816.8,1122.8000000000002 1816.8,1125.4 C1816.8,1128.0 1820.3,1129.0 1822.3,1125.4 C1824.3,1121.8000000000002 1827.9,1122.8000000000002 1827.9,1125.4 C1827.9,1128.0 1824.3,1129.0 1822.3,1125.4Z" stroke="#1c1c1c" stroke-width="1.4" fill="none"/>
<rect x="1841.3" y="1113" width="37" height="24.8" fill="url(#gctl)"/>
<circle cx="1860.1" cy="1125.4" r="8.3" fill="#9a9a9a" opacity=".55"/>
<path d="M1855.5,1124.8000000000002 A4.7,4.7 0 0 1 1863.5,1122.0 M1864.7,1126.0 A4.7,4.7 0 0 1 1856.7,1128.8000000000002" stroke="#1c1c1c" stroke-width="1.7" fill="none"/>
<path d="M1861.7,1120.0 L1865.5,1120.4 L1864.5,1124.2Z M1858.5,1130.8000000000002 L1854.7,1130.4 L1855.7,1126.6000000000001Z" fill="#1c1c1c"/>
<circle cx="1898.5" cy="1125.6" r="8.6" fill="#3a3a3a"/>
<path d="M1690.3,1164 V1142 Q1690.3,1139 1693.3,1139 H1803 V1164Z" fill="url(#gnav)"/>
<path d="M1804,1164 V1139 H1914.3 Q1917.3,1139 1917.3,1142 V1164Z" fill="url(#gnav)"/>
<circle cx="1714.6" cy="1151.5" r="8" fill="#a8a8a8" opacity=".6"/>
<circle cx="1893.5" cy="1151.5" r="8" fill="#a8a8a8" opacity=".6"/>
<path d="M1714.4,1147.6 L1711.6,1151.5 L1714.4,1155.4 M1718.2,1147.6 L1715.4,1151.5 L1718.2,1155.4" stroke="#2a2a2a" stroke-width="1.3" fill="none"/>
<path d="M1890,1147.6 L1892.8,1151.5 L1890,1155.4 M1893.8,1147.6 L1896.6,1151.5 L1893.8,1155.4" stroke="#2a2a2a" stroke-width="1.3" fill="none"/>
<text x="1758.8" y="1158.6" font-size="19.5" fill="#222" text-anchor="middle" textLength="42.5" lengthAdjust="spacingAndGlyphs" stroke="#222" stroke-width=".4">Back</text>
<text x="1848.8" y="1158.6" font-size="19.5" fill="#222" text-anchor="middle" textLength="43.5" lengthAdjust="spacingAndGlyphs" stroke="#222" stroke-width=".4">Next</text>
<rect x="0.00" y="26.00" width="1.20" height="1140.00" fill="#585858"/>
<rect x="0.00" y="1164.80" width="1920.00" height="1.20" fill="#5c5c5c"/>
<rect x="1918.80" y="26.00" width="1.20" height="1140.00" fill="#3e3e3e"/>
<rect x="1879.50" y="1113.00" width="40.50" height="25.00" fill="#2e2e2e"/>
<circle cx="1898.5" cy="1125.6" r="8.6" fill="#3c3c3c"/>
</svg>
</body></html>
